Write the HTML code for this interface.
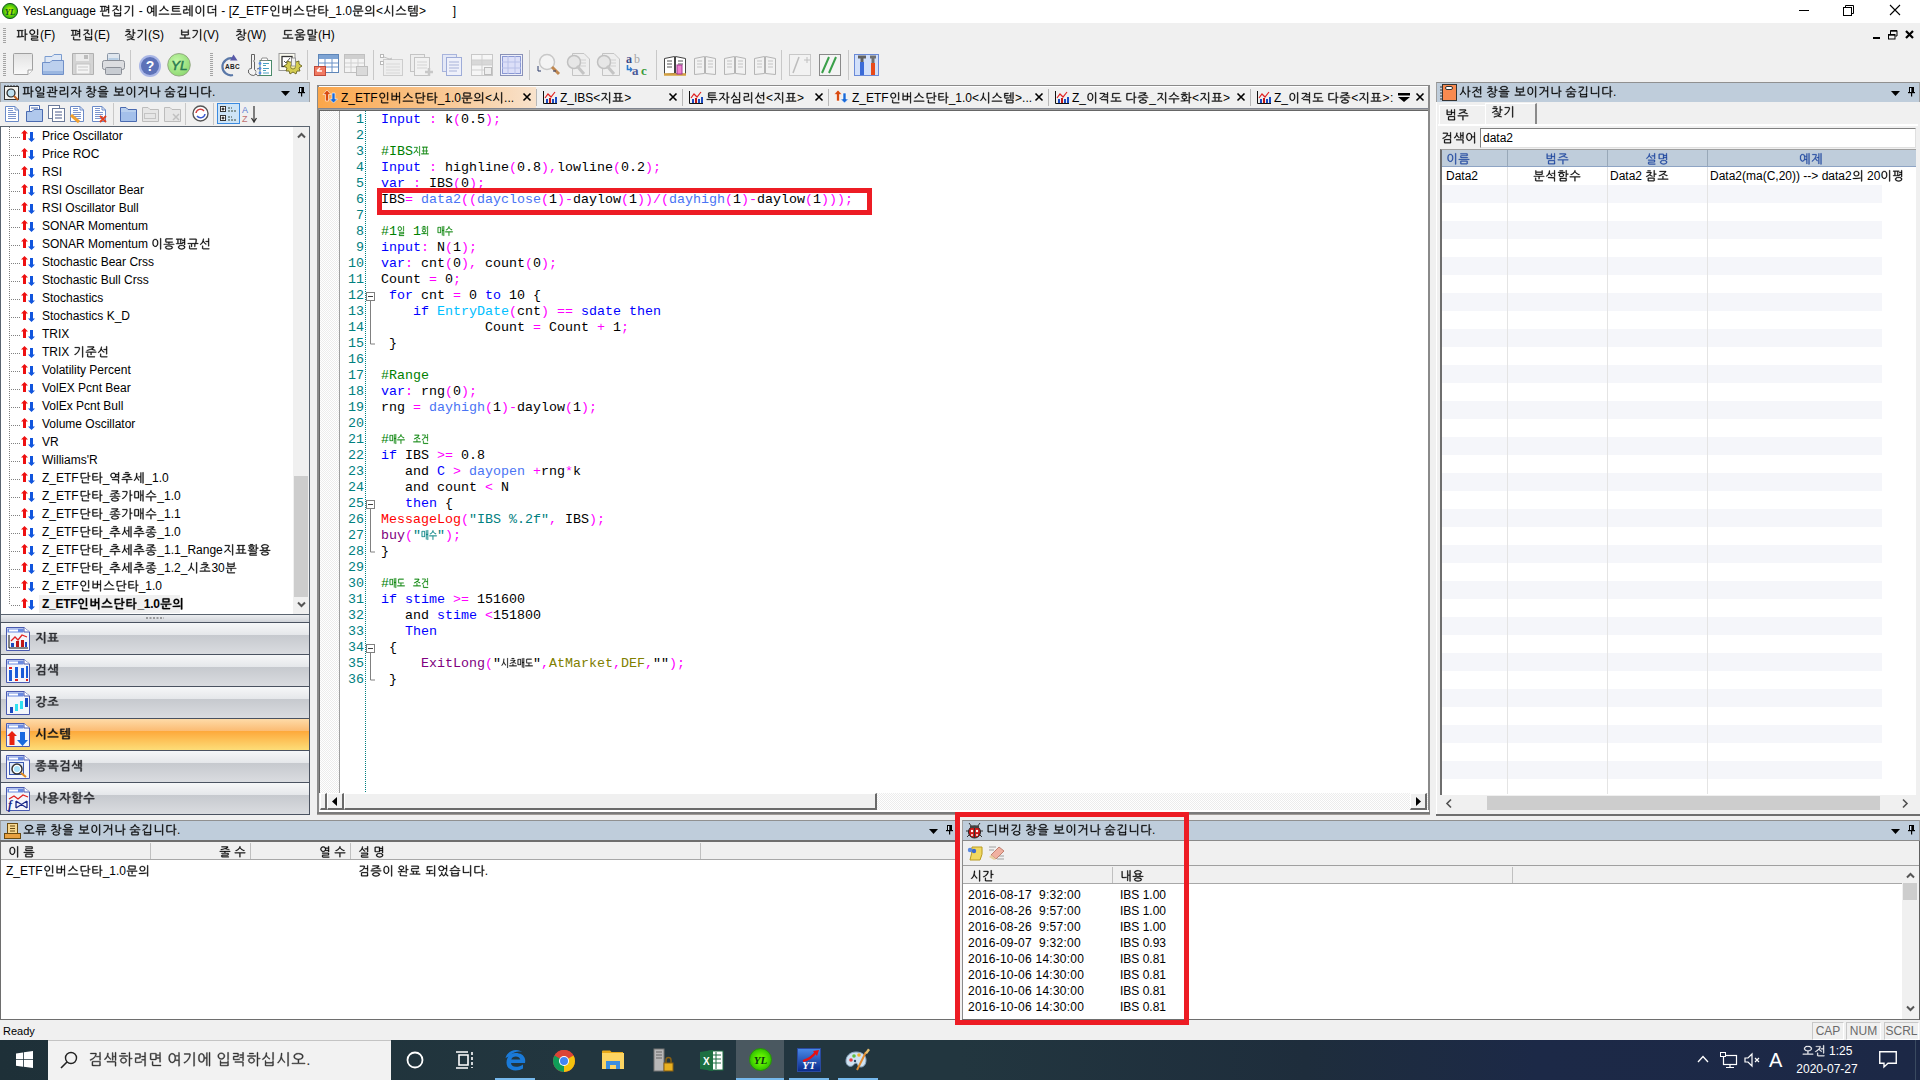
<!DOCTYPE html><html><head><meta charset="utf-8"><style>
*{margin:0;padding:0;box-sizing:border-box}
html,body{width:1920px;height:1080px;overflow:hidden;background:#f0f0f0;font-family:"Liberation Sans",sans-serif;font-size:12px;color:#000}
div{position:absolute}
.t{white-space:pre;line-height:14px}
.code{font-family:"Liberation Mono",monospace;font-size:13.33px;line-height:16px;white-space:pre}
svg{position:absolute;overflow:visible}
svg.h{position:static;display:inline-block;fill:currentColor;overflow:visible}
svg.h path{stroke:currentColor;stroke-width:2.5;stroke-linejoin:round}
.h12{width:12px;height:12px;vertical-align:-1.8px}
.h13{width:13px;height:13px;vertical-align:-1.95px}
.h15{width:15px;height:15px;vertical-align:-2.25px}
.h8{width:8px;height:10px;vertical-align:-1.1px}
</style></head><body>
<div style="position:absolute;left:0px;top:0px;width:1920px;height:23px;background:#fff"></div>
<svg style="left:2px;top:3px" width="16" height="16"><defs><radialGradient id="gyl" cx="0.5" cy="0.5" r="0.5"><stop offset="0.3" stop-color="#b0f000"/><stop offset="1" stop-color="#20b010"/></radialGradient></defs><circle cx="8" cy="8" r="7.6" fill="url(#gyl)" stroke="#1a5a1a" stroke-width="1"/><text x="8" y="11.5" font-size="8.5" font-weight="bold" font-style="italic" text-anchor="middle" fill="#0a5030" font-family="Liberation Serif">YL</text></svg>
<div class="t" style="left:23px;top:4px;font-size:12px">YesLanguage <svg class="h h12" viewBox="0 -85 100 100"><path d="M64-39l1 1 1 4-4 1-27 2-26 0-1-1 0-3 1-1 12 0 0-35-11 0-1-1 0-4 1-1 51 0 0 6-10 0 0 34zM77-66l0-16 0-1 5 0 1 1 1 1 0 64-1 1-1 0-5 0 0-1 0-27-16 0-1-1 0-4 1-1 16 0 0-10-16 0-1-2 0-4zM38-37l7 0 0-34-17 0 0 35zM87 7l-2 1-50 0-5-1-2-2-1-3 0-22 2-1 5 0 0 1 0 20 1 2 50 0 2 1z"/></svg><svg class="h h12" viewBox="0 -85 100 100"><path d="M34 9l-5-1-2-3 0-33 5 0 1 1 0 11 44 0 0-11 1-1 5 0 1 30-1 4-1 2-2 0-4 1zM55-71l-4 8-5 7 9 7 11 6 0 1-3 4-1 1-9-5-12-9-9 7-7 5-11 6-1 0-3-4 1-1 13-7 10-8 8-8 6-11-1-1-1 0-30 0-1-1 1-5 37 0 2 2 1 1zM33-10l0 11 2 2 39 0 2 0 0-1 1-12zM84-35l-1 1-1 0-5 0 0-1 0-46 0-1 1-1 5 0 1 2z"/></svg><svg class="h h12" viewBox="0 -85 100 100"><path d="M84 8l-1 1-1 1-5 0 0-2 0-89 0-1 1-1 5 0 1 2zM57-68l-1 9-3 8-3 8-5 8-5 7-7 7-12 9-5 2-1 0-3-4 0-1 9-5 7-5 6-6 7-10 4-7 3-7 2-12-1-2-1 0-33 0-1-1 1-5 36 0 4 2 1 2z"/></svg> - <svg class="h h12" viewBox="0 -85 100 100"><path d="M69 4l0 1-1 1-5 0 0-1-1-33-14 0-5 8-5 3-5 2-6 0-6-2-5-4-3-3-3-8-1-6 0-15 1-6 2-6 3-4 5-5 3-1 5-1 8 1 5 2 3 2 2 3 3 7 13 0 1-19 1-1 5 0zM44-46l0-6-2-7-2-5-3-3-4-3-3 0-4 0-4 3-2 3-3 5-1 13 0 7 2 6 2 6 2 3 4 3 4 0 3 0 4-3 3-3 2-5 2-7zM87 8l-1 1-1 1-4 0-1-2 0-89 1-1 1-1 4 0 1 2zM51-46l-1 12 12 0 0-21-12 0z"/></svg><svg class="h h12" viewBox="0 -85 100 100"><path d="M54-76l-2 5 1 1 5 10 7 8 7 5 7 4 8 3 0 2-2 4-1 0-6-2-12-7-9-8-8-11-5 9-10 10-10 7-7 3-2 0-2-3 0-2 13-7 8-7 4-5 4-5 2-6 3-10 5 0zM92-12l2 1 0 4-2 1-84 0-2-2 0-3 2-1z"/></svg><svg class="h h12" viewBox="0 -85 100 100"><path d="M82-32l-1 1-1 0-54 0-3 0-3-1-1-2 0-4 0-32 1-5 1-1 5-1 55 0 0 5-1 1-54 0 0 2 0 12 52 0 2 1 0 4-1 1-1 0-52 0 0 12 0 2 2 0 52 0 2 1zM92-12l2 1 0 4-2 1-84 0-2-2 0-3 2-1z"/></svg><svg class="h h12" viewBox="0 -85 100 100"><path d="M18-14l-5-1-2-3 0-26 1-2 5-2 20 0 0-19 0-1-1 0-24 0-1-1 0-5 1 0 26 0 3 0 2 2 1 3 0 20-1 5-1 1-4 1-20 1 0 20 2 1 8 0 24-4 1 2 1 3-2 2-13 2zM62-47l1-33 0-1 5 0 1 0 0 1 0 84 0 1-1 1-5 0-1-2 0-45-12 0-2-1 0-5 1 0zM87 8l-1 1-1 1-4 0-1-2 0-89 1-1 1-1 4 0 1 2z"/></svg><svg class="h h12" viewBox="0 -85 100 100"><path d="M60-44l-1 8-1 6-4 7-3 4-4 4-5 2-9 0-6-1-4-3-4-4-3-4-2-5-1-9 0-8 1-9 1-6 3-4 3-5 6-4 9-2 9 2 6 4 5 7 3 8zM53-45l-1-7-1-6-3-6-4-4-6-3-6 1-4 2-4 4-2 4-2 6 0 14 2 11 3 5 3 3 4 2 6 1 4-2 3-2 3-3 3-6 1-7zM84 8l-1 1-1 1-5 0 0-2 0-89 0-1 1-1 5 0 1 2z"/></svg><svg class="h h12" viewBox="0 -85 100 100"><path d="M68-22l-1 1-4 1-24 3-17 1-4-1-2-1-2-3 0-4 0-43 0-4 2-2 2-1 4 0 34 0 1 1 0 4 0 1-36 0 0 44 0 2 2 0 17 0 26-4 1 1zM77-50l0-32 0-1 5 0 1 1 1 1 0 89-1 1-1 1-5 0 0-2 0-52-27 0-1-2 0-4z"/></svg> - [Z_ETF<svg class="h h12" viewBox="0 -85 100 100"><path d="M84-17l-1 1-1 0-5 0 0-1 0-64 0-1 1-1 5 0 1 2zM86 7l-1 1-50 0-5-1-2-2-1-3 0-22 2-1 4 0 1 1 0 20 1 2 50 0 1 1zM59-55l0 5-2 5-2 4-3 3-7 5-5 1-5 1-9-2-4-2-3-3-5-7-2-5 0-5 0-5 2-5 2-4 3-3 3-3 4-2 9-2 9 2 8 5 3 3 2 4 1 5zM52-55l-1-7-4-6-5-3-7-1-6 1-5 3-4 6-1 7 1 7 3 6 6 3 6 1 7-1 5-3 4-6z"/></svg><svg class="h h12" viewBox="0 -85 100 100"><path d="M21-17l-6 0-1-2-1-2 1-56 5-1 1 2 0 23 30 0 0-23 1-1 4-1 2 2 0 26 20 0 0-32 1-1 5 1 0 91-6 1 0-2 0-52-20 0 0 23-1 2-2 2-5 0zM20-47l0 22 0 2 29 0 1-2 0-22z"/></svg><svg class="h h12" viewBox="0 -85 100 100"><path d="M54-76l-2 5 1 1 5 10 7 8 7 5 7 4 8 3 0 2-2 4-1 0-6-2-12-7-9-8-8-11-5 9-10 10-10 7-7 3-2 0-2-3 0-2 13-7 8-7 4-5 4-5 2-6 3-10 5 0zM92-12l2 1 0 4-2 1-84 0-2-2 0-3 2-1z"/></svg><svg class="h h12" viewBox="0 -85 100 100"><path d="M67-36l-1 1-3 1-19 2-23 1-5-2-1-2-1-5 0-30 0-5 2-1 3-1 37 0 1 5-1 1-35 0 0 32 0 1 2 0 12 0 16-1 14-2 1 1zM80-16l0 1-1 0-5 0-1-1 0-65 0-1 1-1 5 0 1 1 0 29 14 0 1 2 0 3-1 1-14 0zM84 7l-1 1-51 0-5-1-2-2-1-3 0-21 2-1 4 0 1 1 0 19 1 2 51 0 1 1z"/></svg><svg class="h h12" viewBox="0 -85 100 100"><path d="M54-42l-35 0 1 21 2 1 15-1 25-3 1 2 0 3 0 1-10 2-17 1-16 1-5-2-2-2-1-5 0-45 1-5 2-1 3-1 37 0 1 5-1 1-34 0-1 0-1 1 0 21 35-1 1 1 0 4zM80 8l0 1-1 1-5 0-1-2 0-89 0-1 1-1 5 0 1 1 0 37 14 0 1 1 0 4-1 1-14 0z"/></svg>_1.0<svg class="h h12" viewBox="0 -85 100 100"><path d="M20-73l1-3 1-2 4-2 51 1 2 1 1 3-1 25-1 2-4 1-51 0-2-2-1-2zM30-74l-2 1-1 1 0 16 1 3 42 0 3-1 0-17-1-2zM48-9l-1-2 0-20-40 0-1-1 0-4 1-1 85 0 2 1 0 4-1 1-39 0 0 21-1 1zM83 7l-1 1-55 0-4-1-3-1-1-4 0-23 1-1 5 1 1 0 0 21 1 2 55 0 1 1z"/></svg><svg class="h h12" viewBox="0 -85 100 100"><path d="M84 8l-1 1-1 1-5 0 0-2 0-89 0-1 1-1 5 0 1 2zM61-54l-1 5-1 4-2 4-3 3-8 5-9 1-10-1-7-5-5-7-1-4-1-5 1-5 1-5 2-4 3-3 7-4 10-2 9 2 8 4 2 3 3 4 1 5zM54-54l-2-8-3-5-6-3-6-1-7 1-5 3-4 6-1 7 1 7 4 5 5 3 7 1 6-1 6-3 3-5zM70-21l2 1 0 4-6 1-34 4-22 0-2 0-1-1 0-4 2-1 32-1z"/></svg>&lt;<svg class="h h12" viewBox="0 -85 100 100"><path d="M41-76l-1 13-2 11 2 4 2 7 6 9 7 8 6 6 0 1-4 4-4-3-10-12-8-13-3 8-5 8-9 11-4 4-1 0-3-3 0-2 8-9 5-7 4-6 2-8 3-12 2-20 1-1 5 0zM84 8l-1 1-1 1-5 0 0-2 0-89 0-1 1-1 5 0 1 2z"/></svg><svg class="h h12" viewBox="0 -85 100 100"><path d="M54-76l-2 5 1 1 5 10 7 8 7 5 7 4 8 3 0 2-2 4-1 0-6-2-12-7-9-8-8-11-5 9-10 10-10 7-7 3-2 0-2-3 0-2 13-7 8-7 4-5 4-5 2-6 3-10 5 0zM92-12l2 1 0 4-2 1-84 0-2-2 0-3 2-1z"/></svg><svg class="h h12" viewBox="0 -85 100 100"><path d="M26-14l1-3 1-3 4-1 52 0 2 2 1 3-1 21-1 2-4 2-51-1-2-1-1-3zM42-52l-24 0 0 14 2 1 12 0 20-3 1 1 0 5-21 3-13 0-5-1-2-2-1-5 0-31 1-5 2-2 3 0 29 0 0 5-1 1-26 0-1 1 0 12 25 0 1 1 0 3zM36-15l-2 1-1 1 0 14 2 2 43 0 2-1 0-15-1-2zM62-56l1-24 1-1 4 0 1 1 0 51-1 1-4 0-1 0-1-22-12 0-1-1 0-4 1-1zM87-28l-1 1-1 1-4 0-1-2 0-53 1-1 1-1 4 0 1 2z"/></svg>&gt;        ]</div>
<div style="position:absolute;left:1799px;top:10px;width:10px;height:1px;background:#000"></div>
<svg style="left:1843px;top:5px" width="12" height="12"><rect x="0.5" y="2.5" width="8" height="8" fill="none" stroke="#000"/><path d="M2.5 2.5V0.5H10.5V8.5H8.5" fill="none" stroke="#000"/></svg>
<svg style="left:1890px;top:5px" width="11" height="11"><path d="M0 0L10 10M10 0L0 10" stroke="#000" stroke-width="1.1"/></svg>
<div style="position:absolute;left:0px;top:23px;width:1920px;height:23px;background:#f0f0f0"></div>
<div class="t" style="left:16px;top:28px;"><svg class="h h12" viewBox="0 -85 100 100"><path d="M65-26l1 1 1 4-1 1-3 0-29 3-21 1-6-1 0-4 1-1 11 0 0-47-10 0-1-1 0-4 1-1 52 0 0 5-8 1 0 45zM37-23l9 0 0-46-20 0 0 47zM80 8l0 1-1 1-5 0-1-2 0-89 0-1 1-1 5 0 1 1 0 37 14 0 1 1 0 4-1 1-14 0z"/></svg><svg class="h h12" viewBox="0 -85 100 100"><path d="M84-36l-1 1-1 1-5 0 0-2 0-45 0-1 1-1 5 0 1 2zM59-59l-1 5-1 4-5 7-8 4-9 2-9-1-7-5-5-7-1-4-1-5 1-4 1-5 2-3 3-4 7-4 9-1 9 1 7 4 6 7 1 5zM52-59l-2-6-3-5-6-3-6-1-6 1-5 3-4 5-1 6 1 7 4 5 5 3 6 1 6-1 6-3 3-5zM86 9l-2 1-50 0-5-1-2-2-1-5 1-9 1-4 3-1 3 0 42 0 1-2 0-7-1-1-2-1-47 0-1-1 0-4 2 0 48 0 5 1 2 2 1 4-1 9-1 4-3 1-3 0-42 1-1 1 0 7 1 2 2 0 48 0 2 1z"/></svg>(F)</div>
<div class="t" style="left:70px;top:28px;"><svg class="h h12" viewBox="0 -85 100 100"><path d="M64-39l1 1 1 4-4 1-27 2-26 0-1-1 0-3 1-1 12 0 0-35-11 0-1-1 0-4 1-1 51 0 0 6-10 0 0 34zM77-66l0-16 0-1 5 0 1 1 1 1 0 64-1 1-1 0-5 0 0-1 0-27-16 0-1-1 0-4 1-1 16 0 0-10-16 0-1-2 0-4zM38-37l7 0 0-34-17 0 0 35zM87 7l-2 1-50 0-5-1-2-2-1-3 0-22 2-1 5 0 0 1 0 20 1 2 50 0 2 1z"/></svg><svg class="h h12" viewBox="0 -85 100 100"><path d="M34 9l-5-1-2-3 0-33 5 0 1 1 0 11 44 0 0-11 1-1 5 0 1 30-1 4-1 2-2 0-4 1zM55-71l-4 8-5 7 9 7 11 6 0 1-3 4-1 1-9-5-12-9-9 7-7 5-11 6-1 0-3-4 1-1 13-7 10-8 8-8 6-11-1-1-1 0-30 0-1-1 1-5 37 0 2 2 1 1zM33-10l0 11 2 2 39 0 2 0 0-1 1-12zM84-35l-1 1-1 0-5 0 0-1 0-46 0-1 1-1 5 0 1 2z"/></svg>(E)</div>
<div class="t" style="left:124px;top:28px;"><svg class="h h12" viewBox="0 -85 100 100"><path d="M76-12l-5 4-7 4 24 7 1 1-2 4-13-3-18-5-14 5-17 5-1-1-1-3 0-2 21-6 11-4 9-5 6-4-2-1-40 0-1-1 0-4 1 0 43-1 6 1 2 1 1 2zM62-31l-2 1-6-3-8-4-7-5-15 10-12 5-2-4 0-1 13-7 9-6 8-7 7-9-1-1-2 0-30 0-1-2 0-4 34 0 6 1 2 2 0 1-1 4-5 7-5 6 9 7 10 4 0 2zM80-28l0 1-1 0-5 0-1-1 0-53 0-1 1-1 5 0 1 1 0 27 14 0 1 1 0 4-1 1-14 0zM45-81l1 0 1 1 0 4-1 1-23 0-2-1 0-4 1-1z"/></svg><svg class="h h12" viewBox="0 -85 100 100"><path d="M84 8l-1 1-1 1-5 0 0-2 0-89 0-1 1-1 5 0 1 2zM57-68l-1 9-3 8-3 8-5 8-5 7-7 7-12 9-5 2-1 0-3-4 0-1 9-5 7-5 6-6 7-10 4-7 3-7 2-12-1-2-1 0-33 0-1-1 1-5 36 0 4 2 1 2z"/></svg>(S)</div>
<div class="t" style="left:179px;top:28px;"><svg class="h h12" viewBox="0 -85 100 100"><path d="M53-33l0 21 40 0 1 1 0 4-1 1-85 0-2-1 0-4 1-1 39 0 0-21-23 0-2-1-2-2 0-41 1-1 4-1 2 1 0 16 48 0 0-16 1-1 5 1 1 39-1 4-2 1-3 1zM26-56l0 16 1 1 44 0 2 0 1-1 0-16z"/></svg><svg class="h h12" viewBox="0 -85 100 100"><path d="M84 8l-1 1-1 1-5 0 0-2 0-89 0-1 1-1 5 0 1 2zM57-68l-1 9-3 8-3 8-5 8-5 7-7 7-12 9-5 2-1 0-3-4 0-1 9-5 7-5 6-6 7-10 4-7 3-7 2-12-1-2-1 0-33 0-1-1 1-5 36 0 4 2 1 2z"/></svg>(V)</div>
<div class="t" style="left:235px;top:28px;"><svg class="h h12" viewBox="0 -85 100 100"><path d="M80-6l0 3-2 3-6 6-9 3-12 1-11-1-10-3-5-6-2-3-1-3 1-4 2-3 5-5 10-3 11-1 12 1 9 3 6 5 2 3zM73-6l0-2-1-2-5-4-7-2-9-1-9 1-6 2-5 4-1 4 1 4 5 4 6 2 9 0 9 0 7-2 5-4 1-2zM62-31l-2 1-6-3-8-4-7-5-15 10-12 5-2-4 0-1 13-7 9-6 8-7 7-9-1-1-2 0-30 0-1-2 0-4 34 0 6 1 2 2 0 1-1 4-5 7-5 6 9 7 10 4 0 2zM80-26l0 1-1 1-5 0-1-2 0-55 0-1 1-1 5 0 1 1 0 28 14 0 1 1 0 4-1 1-14 0zM45-81l1 0 1 1 0 4-1 1-23 0-2-1 0-4 1-1z"/></svg>(W)</div>
<div class="t" style="left:282px;top:28px;"><svg class="h h12" viewBox="0 -85 100 100"><path d="M82-35l-1 1-1 0-27 0 0 22 40 0 1 1 0 4-1 1-85 0-2-1 0-4 1-1 39 0 0-22-22 0-4-1-1-3 0-33 1-3 1-1 5-1 55 0 0 5-1 1-54 0 0 3 0 24 0 2 2 1 52 0 2 1z"/></svg><svg class="h h12" viewBox="0 -85 100 100"><path d="M20-14l1-5 3-2 22 0 0-12-39 0-1-2 0-3 1-1 85 0 2 1 0 4-1 1-40 0 0 12 22 0 3 1 1 1 1 4 0 19-2 3-2 1-49 1-4-1-2-1-1-3zM50-48l-16-2-7-2-3-3-3-3-2-5 1-7 2-3 3-3 7-3 8-2 8-1 10 1 8 1 7 3 3 2 3 4 2 4-1 6-2 4-3 3-7 3-8 2zM50-76l-11 1-9 4-2 2-2 2 0 4 2 2 2 2 5 3 11 2 15-1 9-4 2-2 2-2-1-5-2-2-2-2-6-2zM29-15l-2 0 0 2 0 14 1 2 43 0 2-1 0-15-1-2z"/></svg><svg class="h h12" viewBox="0 -85 100 100"><path d="M14-72l0-4 1-2 4-1 31 0 3 0 2 1 1 2 0 3 0 29 0 3-1 2-3 1-3 1-29 0-4-1-2-2 0-3zM82 9l-1 1-51 0-5-1-1-2-1-5 0-9 2-4 2-1 4 0 41 0 1-2 0-7 0-1-2-1-47 0-1-1 0-4 1 0 48 0 6 1 1 2 1 4 0 9-2 4-2 1-4 0-41 1-1 1 0 7 0 2 2 0 49 0 1 1zM23-73l-2 0 0 2-1 25 1 2 2 1 24 0 2-1 0-2 0-24 0-3-2 0zM80-35l0 1-1 0-5 0-1-1 0-46 0-1 1-1 5 0 1 1 0 21 14 0 1 1 0 4-1 1-14 0z"/></svg>(H)</div>
<div style="position:absolute;left:1873px;top:37px;width:7px;height:2px;background:#000"></div>
<svg style="left:1888px;top:30px" width="10" height="10"><rect x="0.5" y="4.5" width="6.5" height="4.5" fill="none" stroke="#000" stroke-width="1"/><path d="M0.5 5.2H7M2.5 4V0.5H9V6H7.5" fill="none" stroke="#000"/><path d="M2.5 1.2H9" stroke="#000"/></svg>
<svg style="left:1905px;top:30px" width="9" height="9"><path d="M1 1L8 8M8 1L1 8" stroke="#000" stroke-width="2.2"/></svg>
<svg style="left:3px;top:28px" width="3" height="16"><path d="M0 0.5H3M0 2.5H3M0 4.5H3M0 6.5H3M0 8.5H3M0 10.5H3M0 12.5H3M0 14.5H3" stroke="#a4a4a4"/></svg>
<svg style="left:3px;top:53px" width="3" height="24"><path d="M0 0.5H3M0 2.5H3M0 4.5H3M0 6.5H3M0 8.5H3M0 10.5H3M0 12.5H3M0 14.5H3M0 16.5H3M0 18.5H3M0 20.5H3M0 22.5H3" stroke="#a4a4a4"/></svg>
<svg style="left:210px;top:53px" width="3" height="24"><path d="M0 0.5H3M0 2.5H3M0 4.5H3M0 6.5H3M0 8.5H3M0 10.5H3M0 12.5H3M0 14.5H3M0 16.5H3M0 18.5H3M0 20.5H3M0 22.5H3" stroke="#a4a4a4"/></svg>
<div style="position:absolute;left:130px;top:50px;width:1px;height:30px;background:#c8c8c8"></div>
<div style="position:absolute;left:307px;top:50px;width:1px;height:30px;background:#c8c8c8"></div>
<div style="position:absolute;left:373px;top:50px;width:1px;height:30px;background:#c8c8c8"></div>
<div style="position:absolute;left:529px;top:50px;width:1px;height:30px;background:#c8c8c8"></div>
<div style="position:absolute;left:656px;top:50px;width:1px;height:30px;background:#c8c8c8"></div>
<div style="position:absolute;left:781px;top:50px;width:1px;height:30px;background:#c8c8c8"></div>
<div style="position:absolute;left:848px;top:50px;width:1px;height:30px;background:#c8c8c8"></div>
<svg style="left:13px;top:53px" width="22" height="24" viewBox="0 0 22 24"><defs><linearGradient id="gnd" x1="0" y1="0" x2="0" y2="1"><stop offset="0" stop-color="#e2e2e2"/><stop offset="1" stop-color="#fafafa"/></linearGradient></defs><path d="M0.5 1.5Q0.5 0.5 1.5 0.5H18.5Q19.5 0.5 19.5 1.5V17L15 21.5H1.5Q0.5 21.5 0.5 20.5Z" fill="url(#gnd)" stroke="#a0a0a0"/><path d="M15 21.5V17H19.5" fill="#fff" stroke="#a0a0a0"/></svg>
<svg style="left:42px;top:53px" width="23" height="24" viewBox="0 0 23 24"><path d="M3 10V3.5H10L12 1.5H19.5V10" fill="#dfe8f5" stroke="#7a9cd0"/><path d="M0.5 21.5V9.5H8L10 7.5H21.5V21.5Z" fill="#bcd0ee" stroke="#7090c8"/><rect x="1" y="18" width="20" height="3" fill="#9ab6e0"/></svg>
<svg style="left:72px;top:53px" width="22" height="24" viewBox="0 0 22 24"><path d="M0.5 0.5H21.5V21.5H0.5Z" fill="#d4d4d4" stroke="#b0b0b0"/><rect x="4" y="1" width="13" height="7" fill="#ececec"/><rect x="12" y="2" width="4" height="4" fill="#bdbdbd"/><rect x="4" y="11" width="14" height="10" fill="#f4f4f4" stroke="#c4c4c4"/><path d="M6 14H16M6 17H16" stroke="#c8c8c8"/></svg>
<svg style="left:102px;top:53px" width="23" height="24" viewBox="0 0 23 24"><rect x="5.5" y="0.5" width="12" height="8" rx="1" fill="#dfe6ee" stroke="#8a96a6"/><rect x="6.5" y="5" width="10" height="3" fill="#b6cde4"/><rect x="0.5" y="7.5" width="22" height="9" rx="2" fill="#dcdde0" stroke="#8a8e96"/><rect x="3.5" y="14.5" width="16" height="7" rx="1" fill="#c8ccd2" stroke="#8a8e96"/></svg>
<div style="position:absolute;left:130px;top:50px;width:1px;height:30px;background:#c8c8c8"></div>
<svg style="left:138px;top:54px" width="24" height="24" viewBox="0 0 24 24"><circle cx="12" cy="12" r="11" fill="#a9b6e6"/><circle cx="12" cy="12" r="9" fill="#5d72b8"/><text x="12" y="17" font-size="14" font-weight="bold" text-anchor="middle" fill="#fff" font-family="Liberation Sans">?</text></svg>
<svg style="left:167px;top:53px" width="25" height="25" viewBox="0 0 25 25"><defs><radialGradient id="gyl3" cx="0.4" cy="0.35" r="0.7"><stop offset="0" stop-color="#c4f8a8"/><stop offset="1" stop-color="#8cd870"/></radialGradient></defs><circle cx="12" cy="11.8" r="11.3" fill="url(#gyl3)" stroke="#8a9a78" stroke-width="0.8"/><text x="12.3" y="17" font-size="13.5" font-style="italic" text-anchor="middle" fill="#2a7a50" stroke="#2a7a50" stroke-width="0.5" font-family="Liberation Sans">YL</text></svg>
<svg style="left:220px;top:53px" width="23" height="24" viewBox="0 0 23 24"><path d="M13 5.5A8.5 8.5 0 1 0 13 22" fill="none" stroke="#5a78a8" stroke-width="2.2"/><path d="M13.5 1.5L17.5 7.5H10Z" fill="#5a5aa8"/><text x="5" y="16" font-size="6.5" font-weight="bold" fill="#222" font-family="Liberation Sans" letter-spacing="0.3">ABC</text></svg>
<svg style="left:247px;top:53px" width="26" height="24" viewBox="0 0 26 24"><path d="M4.5 1.5H7.5V7L6.5 8L7.5 9V16.5Q10 18 9 21Q7 23.5 4 22Q0.5 20.5 1.5 17Q2.5 15.5 4.5 15.5Z" fill="#f4f4f4" stroke="#555" stroke-width="0.9"/><path d="M10 16Q13 14 15 17Q16 21 13 22.5Q10 23.5 9 21" fill="#f0f0f0" stroke="#555" stroke-width="0.9"/><rect x="13" y="7.5" width="11.5" height="15" fill="#fff" stroke="#4a8a6a"/><path d="M15 5H20L21 7.5H14Z" fill="#fff" stroke="#777" stroke-width="0.8"/><path d="M16 10.5H22M16 12.5H19M16 15.5H22M16 17.5H19M16 20H22" stroke="#4aa0c0"/><circle cx="13" cy="10.5" r="1.4" fill="#5a8ae8"/><circle cx="13" cy="15.5" r="1.4" fill="#5a8ae8"/><circle cx="13" cy="20" r="1.4" fill="#5a8ae8"/></svg>
<svg style="left:278px;top:53px" width="25" height="24" viewBox="0 0 25 24"><rect x="1" y="0.5" width="16" height="17" fill="#fafaf0" stroke="#999"/><rect x="4" y="3.5" width="10" height="10" fill="#fff" stroke="#333" stroke-width="1.3"/><path d="M6 8L8 10L12 5" stroke="#555" fill="none"/><path d="M14 9L16 6L18 9L21 8L21 11L24 13L21 15L22 18L19 18L18 21L15 19L12 21L11 18L8 18L9 15L6 13L9 11L9 8L12 9Z" fill="#d4cc50" stroke="#6a6420" stroke-width="0.9"/><circle cx="15" cy="13.5" r="2.5" fill="#f8f0a0" stroke="#8a8430"/><rect x="13.5" y="5" width="4" height="8" fill="#f0f0f0" stroke="#888" stroke-width="0.8"/></svg>
<svg style="left:314px;top:54px" width="25" height="23" viewBox="0 0 25 23"><rect x="4.5" y="0.5" width="20" height="18" fill="#fff" stroke="#5e86b8"/><rect x="5" y="1" width="19" height="4" fill="#7ea4d4"/><path d="M5 9H24M5 13H24M11 5V18M18 5V18" stroke="#6a92c8"/><rect x="0.5" y="12.5" width="11" height="9" fill="#f07a62" stroke="#c04a3a"/><path d="M3 17L6 14M3 17H8" stroke="#fff" stroke-width="1.5"/></svg>
<svg style="left:344px;top:54px" width="25" height="23" viewBox="0 0 25 23"><rect x="0.5" y="0.5" width="20" height="18" fill="#f4f4f4" stroke="#c0c0c0"/><rect x="1" y="1" width="19" height="4" fill="#cfcfcf"/><path d="M1 9H20M1 13H20M7 5V18M14 5V18" stroke="#d0d0d0"/><rect x="12.5" y="12.5" width="11" height="9" fill="#dadada" stroke="#bdbdbd"/></svg>
<div style="position:absolute;left:307px;top:50px;width:1px;height:30px;background:#c8c8c8"></div>
<div style="position:absolute;left:373px;top:50px;width:1px;height:30px;background:#c8c8c8"></div>
<svg style="left:380px;top:54px" width="24" height="23" viewBox="0 0 24 23"><rect x="0.5" y="0.5" width="3" height="3" fill="#fff" stroke="#b8b8b8"/><rect x="0.5" y="7.5" width="3" height="3" fill="#fff" stroke="#b8b8b8"/><path d="M4 3L12 6M4 8L12 4" stroke="#c0c0c0"/><rect x="3.5" y="5.5" width="19" height="16" fill="#eee" stroke="#aaa" stroke-dasharray="1 1"/><path d="M6 10H20M6 13H20M6 16H20M6 19H20" stroke="#d8d8d8"/></svg>
<svg style="left:410px;top:54px" width="24" height="23" viewBox="0 0 24 23"><rect x="0.5" y="0.5" width="14" height="17" fill="#eee" stroke="#c4c4c4"/><rect x="4.5" y="3.5" width="15" height="18" fill="#f2f2f2" stroke="#c4c4c4"/><path d="M7 8H17M7 11H17M7 14H17" stroke="#d4d4d4"/><path d="M19 14V22M15 18H23" stroke="#c8c8c8" stroke-width="2.5"/></svg>
<svg style="left:442px;top:54px" width="21" height="23" viewBox="0 0 21 23"><rect x="0.5" y="0.5" width="14" height="17" fill="#e4e8f6" stroke="#a8b4dc"/><rect x="4.5" y="3.5" width="15" height="18" fill="#eef0fa" stroke="#9eacd8"/><path d="M7 8H17M7 11H17M7 14H17M7 17H15" stroke="#a8b2d8"/></svg>
<svg style="left:471px;top:54px" width="23" height="23" viewBox="0 0 23 23"><rect x="0.5" y="0.5" width="21" height="21" fill="#f6f6f6" stroke="#c8c8c8"/><rect x="1" y="6" width="20" height="5" fill="#d8d8d8"/><path d="M1 6H21M1 11H21M1 16H21M11 1V21" stroke="#cfcfcf"/><rect x="13.5" y="13.5" width="7" height="7" fill="#eee" stroke="#bbb"/></svg>
<svg style="left:500px;top:54px" width="24" height="23" viewBox="0 0 24 23"><rect x="0.5" y="0.5" width="22" height="21" fill="#eef0fa" stroke="#8a92b8"/><rect x="2.5" y="2.5" width="18" height="17" fill="#dcdff8" stroke="#8a98d4"/><path d="M2 8H21M2 14H21M8 2V20M15 2V20" stroke="#b8c0e8"/></svg>
<div style="position:absolute;left:529px;top:50px;width:1px;height:30px;background:#c8c8c8"></div>
<svg style="left:537px;top:53px" width="24" height="24" viewBox="0 0 24 24"><circle cx="10" cy="9" r="7.5" fill="#f4f4f4" stroke="#c8c8c8" stroke-width="1.5"/><path d="M15 14L22 21" stroke="#c08850" stroke-width="3"/><path d="M1 13V18H4M16 18H19" stroke="#2a3a6a" fill="none"/></svg>
<svg style="left:566px;top:53px" width="25" height="24" viewBox="0 0 25 24"><path d="M6.5 0.5H18L23.5 6V22.5H6.5Z" fill="#eee" stroke="#c4c4c4"/><path d="M9 7H20M9 10H20M9 13H20" stroke="#d0d0d0"/><circle cx="8" cy="9" r="6.5" fill="#e6e6e6" stroke="#c0c0c0" stroke-width="1.5"/><path d="M11 13L18 21" stroke="#c4c4c4" stroke-width="3"/></svg>
<svg style="left:596px;top:53px" width="25" height="24" viewBox="0 0 25 24"><path d="M6.5 0.5H18L23.5 6V22.5H6.5Z" fill="#eee" stroke="#c4c4c4"/><path d="M9 7H20M9 10H20M9 13H20" stroke="#d0d0d0"/><circle cx="8" cy="9" r="6.5" fill="#e6e6e6" stroke="#c0c0c0" stroke-width="1.5"/><path d="M11 13L18 21" stroke="#c4c4c4" stroke-width="3"/></svg>
<svg style="left:626px;top:53px" width="25" height="24" viewBox="0 0 25 24"><text x="0" y="10" font-size="12" font-weight="bold" font-family="Liberation Serif" fill="#3a4a8a">a</text><text x="8" y="9.5" font-size="12" font-family="Liberation Serif" fill="#a8a8a8">b</text><text x="6" y="22" font-size="13" font-weight="bold" font-family="Liberation Serif" fill="#4a5a98">a</text><text x="15" y="22" font-size="13" font-weight="bold" font-family="Liberation Serif" fill="#3a9a3a">c</text><path d="M1.5 12V16.5H5" stroke="#2a7ad0" fill="none" stroke-width="1.6"/><path d="M4 14.5L6 16.5L4 18.5" stroke="#2a7ad0" fill="none" stroke-width="1.2"/></svg>
<div style="position:absolute;left:656px;top:50px;width:1px;height:30px;background:#c8c8c8"></div>
<svg style="left:664px;top:55px" width="22" height="21" viewBox="0 0 22 21"><path d="M0.5 3.5L10.5 1.5L10.5 18.5L0.5 19.5Z" fill="#fff" stroke="#444"/><path d="M21.5 3.5L11.5 1.5L11.5 18.5L21.5 19.5Z" fill="#fff" stroke="#444"/><path d="M0 19.5H22" stroke="#d4a040" stroke-width="2.5"/><path d="M3 6H8M3 9H8M3 12H8M14 6H19M14 9H19" stroke="#555"/><rect x="13" y="10" width="5" height="9" fill="#f080d0" stroke="#a03a90"/></svg>
<svg style="left:694px;top:55px" width="22" height="21" viewBox="0 0 22 21"><path d="M0.5 3.5L10.5 1.5L10.5 18.5L0.5 19.5Z" fill="#f2f2f2" stroke="#b4b4b4"/><path d="M21.5 3.5L11.5 1.5L11.5 18.5L21.5 19.5Z" fill="#f2f2f2" stroke="#b4b4b4"/><path d="M3 6H8M3 9H8M3 12H8M14 6H19M14 9H19M14 12H19" stroke="#c4c4c4"/></svg>
<svg style="left:724px;top:55px" width="22" height="21" viewBox="0 0 22 21"><path d="M0.5 3.5L10.5 1.5L10.5 18.5L0.5 19.5Z" fill="#f2f2f2" stroke="#b4b4b4"/><path d="M21.5 3.5L11.5 1.5L11.5 18.5L21.5 19.5Z" fill="#f2f2f2" stroke="#b4b4b4"/><path d="M3 6H8M3 9H8M3 12H8M14 6H19M14 9H19M14 12H19" stroke="#c4c4c4"/></svg>
<svg style="left:754px;top:55px" width="22" height="21" viewBox="0 0 22 21"><path d="M0.5 3.5L10.5 1.5L10.5 18.5L0.5 19.5Z" fill="#f2f2f2" stroke="#b4b4b4"/><path d="M21.5 3.5L11.5 1.5L11.5 18.5L21.5 19.5Z" fill="#f2f2f2" stroke="#b4b4b4"/><path d="M3 6H8M3 9H8M3 12H8M14 6H19M14 9H19M14 12H19" stroke="#c4c4c4"/></svg>
<div style="position:absolute;left:781px;top:50px;width:1px;height:30px;background:#c8c8c8"></div>
<svg style="left:789px;top:54px" width="22" height="22" viewBox="0 0 22 22"><rect x="0.5" y="0.5" width="21" height="21" fill="#f2f2f2" stroke="#c8c8c8"/><path d="M4 19L10 3" stroke="#bdbdbd" stroke-width="1.5"/><path d="M15 6H21M18 3V9" stroke="#c0c0c0"/></svg>
<svg style="left:819px;top:54px" width="22" height="22" viewBox="0 0 22 22"><rect x="0.5" y="0.5" width="21" height="21" fill="#f4f4f4" stroke="#8a8a8a"/><path d="M3 19L10 3M10 19L17 3" stroke="#3aa04a" stroke-width="2"/></svg>
<div style="position:absolute;left:848px;top:50px;width:1px;height:30px;background:#c8c8c8"></div>
<svg style="left:854px;top:54px" width="25" height="22" viewBox="0 0 25 22"><rect x="0.5" y="0.5" width="24" height="21" fill="#d2e0fa" stroke="#6a8ad8"/><path d="M4 3H12M8 3V21" stroke="#606060" stroke-width="3"/><rect x="6" y="8" width="4" height="13" fill="#3a6ad8"/><path d="M16 3H22M19 3V21" stroke="#707070" stroke-width="3"/><rect x="17" y="9" width="4" height="12" fill="#e84a1a"/></svg>
<div style="position:absolute;left:0px;top:82px;width:310px;height:20px;background:#bfcddb;border-top:1px solid #909090;border-right:1px solid #a0a0a0;border-left:1px solid #a0a0a0"></div>
<svg style="left:3px;top:84px" width="17" height="17"><rect x="1.5" y="2.5" width="14" height="13" fill="#f4f4f0" stroke="#333"/><path d="M2 1V3M5 1V3M8 1V3M11 1V3M14 1V3" stroke="#333"/><circle cx="8" cy="9" r="4" fill="#bfe0f0" stroke="#222" stroke-width="1.2"/><path d="M11 12L15 16" stroke="#c06020" stroke-width="2"/></svg>
<div class="t" style="left:22px;top:85px;font-size:12px"><svg class="h h12" viewBox="0 -85 100 100"><path d="M65-26l1 1 1 4-1 1-3 0-29 3-21 1-6-1 0-4 1-1 11 0 0-47-10 0-1-1 0-4 1-1 52 0 0 5-8 1 0 45zM37-23l9 0 0-46-20 0 0 47zM80 8l0 1-1 1-5 0-1-2 0-89 0-1 1-1 5 0 1 1 0 37 14 0 1 1 0 4-1 1-14 0z"/></svg><svg class="h h12" viewBox="0 -85 100 100"><path d="M84-36l-1 1-1 1-5 0 0-2 0-45 0-1 1-1 5 0 1 2zM59-59l-1 5-1 4-5 7-8 4-9 2-9-1-7-5-5-7-1-4-1-5 1-4 1-5 2-3 3-4 7-4 9-1 9 1 7 4 6 7 1 5zM52-59l-2-6-3-5-6-3-6-1-6 1-5 3-4 5-1 6 1 7 4 5 5 3 6 1 6-1 6-3 3-5zM86 9l-2 1-50 0-5-1-2-2-1-5 1-9 1-4 3-1 3 0 42 0 1-2 0-7-1-1-2-1-47 0-1-1 0-4 2 0 48 0 5 1 2 2 1 4-1 9-1 4-3 1-3 0-42 1-1 1 0 7 1 2 2 0 48 0 2 1z"/></svg><svg class="h h12" viewBox="0 -85 100 100"><path d="M80-15l0 1-1 1-5 0-1-2 0-66 0-1 1-1 5 0 1 1 0 32 14 0 1 1 0 4-1 1-14 0zM68-35l2 0 0 5-5 1-35 1-21 0-2-1 0-4 1-1 22 0 0-20 0-1 1 0 5 0 1 0 0 21zM84 7l-1 1-56-1-3-1-1-4 0-20 1-1 5 0 1 1 0 18 1 2 52 0 1 1zM14-75l2-1 36 0 5 1 2 3 1 9-2 12-2 7-5 0-1-1 3-14 0-9-1-2-37 0-1-1z"/></svg><svg class="h h12" viewBox="0 -85 100 100"><path d="M84 8l-1 1-1 1-5 0 0-2 0-89 0-1 1-1 5 0 1 2zM22-13l-5-1-2-3-1-24 1-4 2-2 3-1 29 0 1-2 0-17-1-2-1 0-32 0-1-1 0-4 1-1 33 0 5 1 2 1 1 4 0 20-1 5-2 1-3 1-29 1-1 2 0 19 2 1 18 0 11-1 16-3 1 1 1 4-7 2-15 2-15 1z"/></svg><svg class="h h12" viewBox="0 -85 100 100"><path d="M60-18l-1 1-7-6-14-15-5 6-9 9-12 9-2 0-2-4 0-1 15-12 10-11 8-12 3-6 2-8 0-1-2 0-31 0-1-1 1-5 34 0 4 0 2 2 1 4-3 8-2 6-7 12 10 12 11 9 0 1zM80 8l0 1-1 1-5 0-1-2 0-89 0-1 1-1 5 0 1 1 0 37 14 0 1 1 0 4-1 1-14 0z"/></svg> <svg class="h h12" viewBox="0 -85 100 100"><path d="M80-6l0 3-2 3-6 6-9 3-12 1-11-1-10-3-5-6-2-3-1-3 1-4 2-3 5-5 10-3 11-1 12 1 9 3 6 5 2 3zM73-6l0-2-1-2-5-4-7-2-9-1-9 1-6 2-5 4-1 4 1 4 5 4 6 2 9 0 9 0 7-2 5-4 1-2zM62-31l-2 1-6-3-8-4-7-5-15 10-12 5-2-4 0-1 13-7 9-6 8-7 7-9-1-1-2 0-30 0-1-2 0-4 34 0 6 1 2 2 0 1-1 4-5 7-5 6 9 7 10 4 0 2zM80-26l0 1-1 1-5 0-1-2 0-55 0-1 1-1 5 0 1 1 0 28 14 0 1 1 0 4-1 1-14 0zM45-81l1 0 1 1 0 4-1 1-23 0-2-1 0-4 1-1z"/></svg><svg class="h h12" viewBox="0 -85 100 100"><path d="M50-49l-10-1-8-2-6-3-4-3-2-4-1-7 2-4 3-4 4-2 7-3 7-1 10-1 8 1 8 2 6 3 4 3 2 4 0 7-1 4-3 4-4 2-7 3zM50-78l-13 2-5 2-3 2-2 2 0 5 1 3 2 2 9 4 14 0 12-1 5-3 2-2 1-3 0-3-1-3-3-2-3-2-5-1zM92-43l2 1 0 4-2 1-84 0-2-1 0-4 2-1zM82 8l-1 1-53 0-6-1-2-3 0-11 1-5 2-1 5-1 44 0 1-2 0-7 0-1-2 0-50 0-1-1 0-4 1-1 51 0 6 1 2 4 0 10-1 4-2 2-5 1-44 0-1 1 0 8 0 1 2 0 52 0 1 1z"/></svg> <svg class="h h12" viewBox="0 -85 100 100"><path d="M53-33l0 21 40 0 1 1 0 4-1 1-85 0-2-1 0-4 1-1 39 0 0-21-23 0-2-1-2-2 0-41 1-1 4-1 2 1 0 16 48 0 0-16 1-1 5 1 1 39-1 4-2 1-3 1zM26-56l0 16 1 1 44 0 2 0 1-1 0-16z"/></svg><svg class="h h12" viewBox="0 -85 100 100"><path d="M60-44l-1 8-1 6-4 7-3 4-4 4-5 2-9 0-6-1-4-3-4-4-3-4-2-5-1-9 0-8 1-9 1-6 3-4 3-5 6-4 9-2 9 2 6 4 5 7 3 8zM53-45l-1-7-1-6-3-6-4-4-6-3-6 1-4 2-4 4-2 4-2 6 0 14 2 11 3 5 3 3 4 2 6 1 4-2 3-2 3-3 3-6 1-7zM84 8l-1 1-1 1-5 0 0-2 0-89 0-1 1-1 5 0 1 2z"/></svg><svg class="h h12" viewBox="0 -85 100 100"><path d="M77-47l0-35 0-1 5 0 1 1 1 1 0 89-1 1-1 1-5 0 0-2 0-49-21 0-1-1 0-3 1-2zM56-68l-1 9-2 8-4 8-4 8-6 7-7 7-12 9-4 2-2 0-2-4 0-1 8-5 7-5 6-6 7-10 4-7 3-7 2-12 0-2-2 0-33 0 0-1 0-5 37 0 4 2 1 2z"/></svg><svg class="h h12" viewBox="0 -85 100 100"><path d="M80 8l0 1-1 1-5 0-1-2 0-89 0-1 1-1 5 0 1 1 0 37 14 0 1 1 0 4-1 1-14 0zM21-27l0 2 2 1 10 0 16-2 15-2 1 0 1 4-1 1-5 2-22 2-16 1-4-1-2-1-1-3-1-3 0-50 1-1 1 0 4 0 1 1z"/></svg> <svg class="h h12" viewBox="0 -85 100 100"><path d="M20-14l1-5 3-2 22 0 0-13-39 0-1-1 0-4 1-1 85 0 2 1 0 4-1 1-40 0 0 13 22 0 3 1 1 1 1 4 0 19-2 3-2 1-49 1-4-1-2-1-1-3zM29-15l-2 0 0 2 0 14 1 2 43 0 2-1 0-15-1-2zM54-80l-1 2 1 3 4 5 4 4 10 6 14 5 0 1-3 4-8-2-10-4-10-8-5-7-5 7-7 6-14 7-6 2-2 0-2-4 0-2 14-5 9-6 6-7 4-9 6 0z"/></svg><svg class="h h12" viewBox="0 -85 100 100"><path d="M84-35l-1 1-1 1-5 0 0-2 0-46 0-1 1-1 5 0 1 2zM34 9l-5-1-2-3 0-33 5 0 1 1 0 11 44 0 0-11 1-1 5 0 1 30-1 4-1 2-2 0-4 1zM33-10l0 11 1 2 40 0 2 0 0-1 1-12zM57-72l-3 10-3 5-4 6-5 5-6 5-7 4-13 7-2 0-2-5 1-1 15-8 6-4 8-8 6-9 1-6 0-1-2-1-32 0 0-1 0-5 36 0 5 2 1 2z"/></svg><svg class="h h12" viewBox="0 -85 100 100"><path d="M84 8l-1 1-1 1-5 0 0-2 0-89 0-1 1-1 5 0 1 2zM23-27l0 2 1 1 9 0 17-1 18-3 1 1 1 3 0 2-5 1-23 2-18 1-4-1-2-1-2-3 0-3 0-50 0-1 1 0 5 0 1 1z"/></svg><svg class="h h12" viewBox="0 -85 100 100"><path d="M66-23l-1 2-5 1-23 3-17 0-3 0-3-2-1-2-1-4 0-43 1-4 1-2 2-1 4 0 34 0 2 1 0 4-1 1-35 0-1 43 1 2 4 1 13 0 27-4 1 1zM80 8l0 1-1 1-5 0-1-2 0-89 0-1 1-1 5 0 1 1 0 37 14 0 1 1 0 4-1 1-14 0z"/></svg>.</div>
<svg style="left:281px;top:91px" width="9" height="5" viewBox="0 0 9 5"><path d="M0 0H9L4.5 5Z" fill="#000"/></svg>
<svg style="left:298px;top:87px" width="8" height="10" viewBox="0 0 8 10"><rect x="1" y="0" width="5" height="6" fill="#000"/><rect x="2" y="1" width="1.3" height="4" fill="#dce8f4"/><rect x="0" y="5" width="7" height="1.2" fill="#000"/><rect x="3" y="6" width="1.2" height="3.5" fill="#000"/></svg>
<svg style="left:5px;top:106px" width="15" height="17" viewBox="0 0 15 17"><path d="M0.5 0.5H10L13.5 4V15.5H0.5Z" fill="#fff" stroke="#6a8ac8"/><path d="M10 0.5V4H13.5" fill="none" stroke="#6a8ac8"/><path d="M3 2.5H8M3 4.5H8M3 6.5H11M3 8.5H11M3 10.5H11M3 12.5H11" stroke="#5a7ac0" stroke-width="0.8"/></svg>
<svg style="left:26px;top:105px" width="17" height="17" viewBox="0 0 17 17"><path d="M3.5 0.5H13.5V8H3.5Z" fill="#fff" stroke="#4a6ab0"/><path d="M5 3H12" stroke="#4a6ab0"/><path d="M0.5 16.5V6.5H6L8 4.5H16.5V16.5Z" fill="#b0c8ec" stroke="#4a6ab0"/></svg>
<svg style="left:48px;top:105px" width="17" height="17" viewBox="0 0 17 17"><rect x="0.5" y="0.5" width="11" height="13" fill="#fff" stroke="#6a7a9a"/><rect x="4.5" y="3.5" width="12" height="13" fill="#fff" stroke="#6a7a9a"/><path d="M7 7H14M7 10H14M7 13H14" stroke="#4a5a8a"/></svg>
<svg style="left:70px;top:106px" width="15" height="17" viewBox="0 0 15 17"><path d="M0.5 0.5H10L13.5 4V15.5H0.5Z" fill="#fff" stroke="#6a8ac8"/><path d="M10 0.5V4H13.5" fill="none" stroke="#6a8ac8"/><path d="M3 2.5H8M3 4.5H8M3 6.5H11M3 8.5H11M3 10.5H11M3 12.5H11" stroke="#5a7ac0" stroke-width="0.8"/><path d="M1 9L9 16" stroke="#f0a030" stroke-width="3"/></svg>
<svg style="left:92px;top:106px" width="15" height="17" viewBox="0 0 15 17"><path d="M0.5 0.5H10L13.5 4V15.5H0.5Z" fill="#fff" stroke="#6a8ac8"/><path d="M10 0.5V4H13.5" fill="none" stroke="#6a8ac8"/><path d="M3 2.5H8M3 4.5H8M3 6.5H11M3 8.5H11M3 10.5H11M3 12.5H11" stroke="#5a7ac0" stroke-width="0.8"/><path d="M8 10L14 16M14 10L8 16" stroke="#e04020" stroke-width="1.8"/></svg>
<div style="position:absolute;left:113px;top:103px;width:1px;height:22px;background:#c8c8c8"></div>
<svg style="left:120px;top:105px" width="17" height="17" viewBox="0 0 17 17"><path d="M0.5 16.5V2.5H6L8 4.5H16.5V16.5Z" fill="#b8cfee" stroke="#4a6ab0"/><rect x="1" y="7" width="15" height="9" fill="#a4c0ea"/></svg>
<svg style="left:142px;top:105px" width="17" height="17" viewBox="0 0 17 17"><path d="M0.5 16.5V2.5H6L8 4.5H16.5V16.5Z" fill="#e6e6e6" stroke="#bcbcbc"/><rect x="2.5" y="8.5" width="11" height="5" fill="none" stroke="#c4c4c4"/></svg>
<svg style="left:164px;top:105px" width="17" height="17" viewBox="0 0 17 17"><path d="M0.5 16.5V2.5H6L8 4.5H16.5V16.5Z" fill="#e6e6e6" stroke="#bcbcbc"/><path d="M9 9L15 15M15 9L9 15" stroke="#c0c0c0" stroke-width="1.5"/></svg>
<div style="position:absolute;left:185px;top:103px;width:1px;height:22px;background:#c8c8c8"></div>
<svg style="left:192px;top:105px" width="17" height="17" viewBox="0 0 17 17"><circle cx="8.5" cy="8.5" r="7.5" fill="#fff" stroke="#555" stroke-width="1.4"/><path d="M4 8A4.5 4.5 0 0 1 12 6" fill="none" stroke="#d04040" stroke-width="1.5"/><path d="M13 9A4.5 4.5 0 0 1 5 11" fill="none" stroke="#3a5ad0" stroke-width="1.5"/></svg>
<div style="position:absolute;left:213px;top:103px;width:1px;height:22px;background:#c8c8c8"></div>
<svg style="left:217px;top:103px" width="23" height="21" viewBox="0 0 23 21"><rect x="0.5" y="0.5" width="22" height="20" fill="#cde4f7" stroke="#3a8ae0"/><rect x="3.5" y="3.5" width="5" height="5" fill="#fff" stroke="#333"/><rect x="3.5" y="12.5" width="5" height="5" fill="#fff" stroke="#333"/><path d="M4.5 6H7.5M6 4.5V7.5M4.5 15H7.5M6 13.5V16.5" stroke="#000"/><path d="M11 5H15M11 8H19M11 14H15M11 17H19" stroke="#3a4a3a" stroke-dasharray="2 1"/></svg>
<svg style="left:242px;top:105px" width="16" height="18" viewBox="0 0 16 18"><text x="0" y="8" font-size="9" fill="#5a7ad0" font-family="Liberation Sans">A</text><text x="0" y="17" font-size="9" fill="#c07070" font-family="Liberation Sans">Z</text><path d="M12 1V16M9.5 13L12 17L14.5 13" stroke="#333" fill="none" stroke-width="1.2"/></svg>
<div style="position:absolute;left:0px;top:126px;width:310px;height:489px;background:#fff;border:1px solid #5a6470;border-width:1px 1px 1px 1px"></div>
<div style="position:absolute;left:293px;top:127px;width:16px;height:487px;background:#f0f0f0"></div>
<svg style="left:297px;top:132px" width="9" height="6" viewBox="0 0 9 6"><path d="M1 5.5L4.5 2L8 5.5" fill="none" stroke="#555" stroke-width="2"/></svg>
<div style="position:absolute;left:294px;top:476px;width:14px;height:121px;background:#cdcdcd"></div>
<svg style="left:297px;top:602px" width="9" height="6" viewBox="0 0 9 6"><path d="M1 0.5L4.5 4L8 0.5" fill="none" stroke="#555" stroke-width="2"/></svg>
<svg style="left:9px;top:127px" width="1" height="478"><path d="M0.5 0V478" stroke="#808080" stroke-dasharray="1 1"/></svg>
<svg style="left:11px;top:137px" width="10" height="1" viewBox="0 0 10 1"><path d="M0 0.5H10" stroke="#808080" stroke-dasharray="1 1"/></svg>
<svg style="left:21px;top:130px" width="14" height="12" viewBox="0 0 14 12"><path d="M3.5 0L7 3.5H5V10H2V3.5H0Z" fill="#ee1111"/><path d="M9 2H12V8.5H14L10.5 12L7 8.5H9Z" fill="#1155dd"/></svg>
<div class="t" style="left:42px;top:129px;font-size:12px">Price Oscillator</div>
<svg style="left:11px;top:155px" width="10" height="1" viewBox="0 0 10 1"><path d="M0 0.5H10" stroke="#808080" stroke-dasharray="1 1"/></svg>
<svg style="left:21px;top:148px" width="14" height="12" viewBox="0 0 14 12"><path d="M3.5 0L7 3.5H5V10H2V3.5H0Z" fill="#ee1111"/><path d="M9 2H12V8.5H14L10.5 12L7 8.5H9Z" fill="#1155dd"/></svg>
<div class="t" style="left:42px;top:147px;font-size:12px">Price ROC</div>
<svg style="left:11px;top:173px" width="10" height="1" viewBox="0 0 10 1"><path d="M0 0.5H10" stroke="#808080" stroke-dasharray="1 1"/></svg>
<svg style="left:21px;top:166px" width="14" height="12" viewBox="0 0 14 12"><path d="M3.5 0L7 3.5H5V10H2V3.5H0Z" fill="#ee1111"/><path d="M9 2H12V8.5H14L10.5 12L7 8.5H9Z" fill="#1155dd"/></svg>
<div class="t" style="left:42px;top:165px;font-size:12px">RSI</div>
<svg style="left:11px;top:191px" width="10" height="1" viewBox="0 0 10 1"><path d="M0 0.5H10" stroke="#808080" stroke-dasharray="1 1"/></svg>
<svg style="left:21px;top:184px" width="14" height="12" viewBox="0 0 14 12"><path d="M3.5 0L7 3.5H5V10H2V3.5H0Z" fill="#ee1111"/><path d="M9 2H12V8.5H14L10.5 12L7 8.5H9Z" fill="#1155dd"/></svg>
<div class="t" style="left:42px;top:183px;font-size:12px">RSI Oscillator Bear</div>
<svg style="left:11px;top:209px" width="10" height="1" viewBox="0 0 10 1"><path d="M0 0.5H10" stroke="#808080" stroke-dasharray="1 1"/></svg>
<svg style="left:21px;top:202px" width="14" height="12" viewBox="0 0 14 12"><path d="M3.5 0L7 3.5H5V10H2V3.5H0Z" fill="#ee1111"/><path d="M9 2H12V8.5H14L10.5 12L7 8.5H9Z" fill="#1155dd"/></svg>
<div class="t" style="left:42px;top:201px;font-size:12px">RSI Oscillator Bull</div>
<svg style="left:11px;top:227px" width="10" height="1" viewBox="0 0 10 1"><path d="M0 0.5H10" stroke="#808080" stroke-dasharray="1 1"/></svg>
<svg style="left:21px;top:220px" width="14" height="12" viewBox="0 0 14 12"><path d="M3.5 0L7 3.5H5V10H2V3.5H0Z" fill="#ee1111"/><path d="M9 2H12V8.5H14L10.5 12L7 8.5H9Z" fill="#1155dd"/></svg>
<div class="t" style="left:42px;top:219px;font-size:12px">SONAR Momentum</div>
<svg style="left:11px;top:245px" width="10" height="1" viewBox="0 0 10 1"><path d="M0 0.5H10" stroke="#808080" stroke-dasharray="1 1"/></svg>
<svg style="left:21px;top:238px" width="14" height="12" viewBox="0 0 14 12"><path d="M3.5 0L7 3.5H5V10H2V3.5H0Z" fill="#ee1111"/><path d="M9 2H12V8.5H14L10.5 12L7 8.5H9Z" fill="#1155dd"/></svg>
<div class="t" style="left:42px;top:237px;font-size:12px">SONAR Momentum <svg class="h h12" viewBox="0 -85 100 100"><path d="M60-44l-1 8-1 6-4 7-3 4-4 4-5 2-9 0-6-1-4-3-4-4-3-4-2-5-1-9 0-8 1-9 1-6 3-4 3-5 6-4 9-2 9 2 6 4 5 7 3 8zM53-45l-1-7-1-6-3-6-4-4-6-3-6 1-4 2-4 4-2 4-2 6 0 14 2 11 3 5 3 3 4 2 6 1 4-2 3-2 3-3 3-6 1-7zM84 8l-1 1-1 1-5 0 0-2 0-89 0-1 1-1 5 0 1 2z"/></svg><svg class="h h12" viewBox="0 -85 100 100"><path d="M81-6l-2 6-3 4-4 2-10 3-12 1-14-1-9-3-6-5-2-4 0-3 1-7 4-3 4-2 9-3 13-1 12 1 10 3 4 2 3 3zM92-36l2 2 0 3-2 1-84 0-2-1 0-3 1-1 39-1 0-12-20 0-3-1-2-2-1-5 0-19 2-4 4-2 54 1 0 5-1 0-51 1-1 2 0 16 1 1 2 1 50 0 1 1 0 4-1 1-27 0 0 12zM74-6l-2-4-4-3-7-2-11-1-9 0-8 2-6 4-1 4 1 4 6 4 8 1 9 1 9-1 7-1 6-4z"/></svg><svg class="h h12" viewBox="0 -85 100 100"><path d="M84-8l0 4-2 3-3 4-3 2-9 4-12 1-11-1-10-4-3-2-3-4-1-3-1-4 1-4 1-4 3-3 3-3 10-3 11-1 12 1 9 3 3 3 3 3 2 4zM61-74l-1 2-9 0 0 31 14-1 0 1 1 4-11 2-20 1-22 0-4-1-1-4 1-1 12 0 0-32-11 0-1-2 0-3 1-1 50 0 1 1zM77-8l0-3-2-2-4-4-7-3-9 0-9 0-6 3-5 4-1 5 1 5 5 4 6 2 9 1 9-1 7-2 4-4 2-2zM77-68l0-14 0-1 5 0 1 1 1 1 0 52-1 1-1 1-5 0 0-1 0-18-16 0-1-2 0-4 1 0 16 0 0-10-16-1-1-1 0-4zM38-40l7 0 0-32-17 0 0 32z"/></svg><svg class="h h12" viewBox="0 -85 100 100"><path d="M73-70l0-2-2-1-50 0-1-1 0-4 0-1 1 0 51 0 4 1 3 1 1 4 0 6-1 14-2 11 16 0 1 1 0 3-2 2-23 0 0 23-1 1-5 1-1-2 0-23-20 0 0 23-1 2-5 0-1-2 0-23-27 0-2-1 0-4 1-1 63 0 2-14zM83 7l-1 1-56 0-4-1-2-1-1-4 0-23 1-1 5 0 0 1 0 21 1 2 56 0 1 1z"/></svg><svg class="h h12" viewBox="0 -85 100 100"><path d="M40-78l-2 15 3 6 3 6 5 5 7 7 6 3 0 2-3 4-6-3-11-11-7-10-4 8-5 7-9 9-4 2-1 1-3-4 0-1 10-9 6-8 3-6 4-13 2-11 6 0zM77-59l0-23 0-1 5 0 1 1 1 1 0 64-1 1-1 0-5 0 0-1 0-36-21 0-1-1 0-4 0-1zM86 7l-1 1-50 0-5-1-2-2-1-3 0-22 2-1 4 0 1 1 0 20 1 2 50 0 1 1z"/></svg></div>
<svg style="left:11px;top:263px" width="10" height="1" viewBox="0 0 10 1"><path d="M0 0.5H10" stroke="#808080" stroke-dasharray="1 1"/></svg>
<svg style="left:21px;top:256px" width="14" height="12" viewBox="0 0 14 12"><path d="M3.5 0L7 3.5H5V10H2V3.5H0Z" fill="#ee1111"/><path d="M9 2H12V8.5H14L10.5 12L7 8.5H9Z" fill="#1155dd"/></svg>
<div class="t" style="left:42px;top:255px;font-size:12px">Stochastic Bear Crss</div>
<svg style="left:11px;top:281px" width="10" height="1" viewBox="0 0 10 1"><path d="M0 0.5H10" stroke="#808080" stroke-dasharray="1 1"/></svg>
<svg style="left:21px;top:274px" width="14" height="12" viewBox="0 0 14 12"><path d="M3.5 0L7 3.5H5V10H2V3.5H0Z" fill="#ee1111"/><path d="M9 2H12V8.5H14L10.5 12L7 8.5H9Z" fill="#1155dd"/></svg>
<div class="t" style="left:42px;top:273px;font-size:12px">Stochastic Bull Crss</div>
<svg style="left:11px;top:299px" width="10" height="1" viewBox="0 0 10 1"><path d="M0 0.5H10" stroke="#808080" stroke-dasharray="1 1"/></svg>
<svg style="left:21px;top:292px" width="14" height="12" viewBox="0 0 14 12"><path d="M3.5 0L7 3.5H5V10H2V3.5H0Z" fill="#ee1111"/><path d="M9 2H12V8.5H14L10.5 12L7 8.5H9Z" fill="#1155dd"/></svg>
<div class="t" style="left:42px;top:291px;font-size:12px">Stochastics</div>
<svg style="left:11px;top:317px" width="10" height="1" viewBox="0 0 10 1"><path d="M0 0.5H10" stroke="#808080" stroke-dasharray="1 1"/></svg>
<svg style="left:21px;top:310px" width="14" height="12" viewBox="0 0 14 12"><path d="M3.5 0L7 3.5H5V10H2V3.5H0Z" fill="#ee1111"/><path d="M9 2H12V8.5H14L10.5 12L7 8.5H9Z" fill="#1155dd"/></svg>
<div class="t" style="left:42px;top:309px;font-size:12px">Stochastics K_D</div>
<svg style="left:11px;top:335px" width="10" height="1" viewBox="0 0 10 1"><path d="M0 0.5H10" stroke="#808080" stroke-dasharray="1 1"/></svg>
<svg style="left:21px;top:328px" width="14" height="12" viewBox="0 0 14 12"><path d="M3.5 0L7 3.5H5V10H2V3.5H0Z" fill="#ee1111"/><path d="M9 2H12V8.5H14L10.5 12L7 8.5H9Z" fill="#1155dd"/></svg>
<div class="t" style="left:42px;top:327px;font-size:12px">TRIX</div>
<svg style="left:11px;top:353px" width="10" height="1" viewBox="0 0 10 1"><path d="M0 0.5H10" stroke="#808080" stroke-dasharray="1 1"/></svg>
<svg style="left:21px;top:346px" width="14" height="12" viewBox="0 0 14 12"><path d="M3.5 0L7 3.5H5V10H2V3.5H0Z" fill="#ee1111"/><path d="M9 2H12V8.5H14L10.5 12L7 8.5H9Z" fill="#1155dd"/></svg>
<div class="t" style="left:42px;top:345px;font-size:12px">TRIX <svg class="h h12" viewBox="0 -85 100 100"><path d="M84 8l-1 1-1 1-5 0 0-2 0-89 0-1 1-1 5 0 1 2zM57-68l-1 9-3 8-3 8-5 8-5 7-7 7-12 9-5 2-1 0-3-4 0-1 9-5 7-5 6-6 7-10 4-7 3-7 2-12-1-2-1 0-33 0-1-1 1-5 36 0 4 2 1 2z"/></svg><svg class="h h12" viewBox="0 -85 100 100"><path d="M73-70l-6 5-8 5 28 8 0 1-2 4-15-3-19-6-25 8-10 3-1-1-1-4 20-6 13-5 12-6 8-6-2-1-44 0 0-1 0-4 0-1 50 0 5 2 1 3-2 3zM48-10l-1-1 0-20-40 0-1-2 0-3 1-1 85 0 2 0 0 5-1 1-39 0 0 20-1 1zM83 7l-1 1-55 0-4-1-3-1-1-4 0-23 1-1 5 1 1 0 0 21 1 2 55 0 1 1z"/></svg><svg class="h h12" viewBox="0 -85 100 100"><path d="M40-78l-2 15 3 6 3 6 5 5 7 7 6 3 0 2-3 4-6-3-11-11-7-10-4 8-5 7-9 9-4 2-1 1-3-4 0-1 10-9 6-8 3-6 4-13 2-11 6 0zM77-59l0-23 0-1 5 0 1 1 1 1 0 64-1 1-1 0-5 0 0-1 0-36-21 0-1-1 0-4 0-1zM86 7l-1 1-50 0-5-1-2-2-1-3 0-22 2-1 4 0 1 1 0 20 1 2 50 0 1 1z"/></svg></div>
<svg style="left:11px;top:371px" width="10" height="1" viewBox="0 0 10 1"><path d="M0 0.5H10" stroke="#808080" stroke-dasharray="1 1"/></svg>
<svg style="left:21px;top:364px" width="14" height="12" viewBox="0 0 14 12"><path d="M3.5 0L7 3.5H5V10H2V3.5H0Z" fill="#ee1111"/><path d="M9 2H12V8.5H14L10.5 12L7 8.5H9Z" fill="#1155dd"/></svg>
<div class="t" style="left:42px;top:363px;font-size:12px">Volatility Percent</div>
<svg style="left:11px;top:389px" width="10" height="1" viewBox="0 0 10 1"><path d="M0 0.5H10" stroke="#808080" stroke-dasharray="1 1"/></svg>
<svg style="left:21px;top:382px" width="14" height="12" viewBox="0 0 14 12"><path d="M3.5 0L7 3.5H5V10H2V3.5H0Z" fill="#ee1111"/><path d="M9 2H12V8.5H14L10.5 12L7 8.5H9Z" fill="#1155dd"/></svg>
<div class="t" style="left:42px;top:381px;font-size:12px">VolEX Pcnt Bear</div>
<svg style="left:11px;top:407px" width="10" height="1" viewBox="0 0 10 1"><path d="M0 0.5H10" stroke="#808080" stroke-dasharray="1 1"/></svg>
<svg style="left:21px;top:400px" width="14" height="12" viewBox="0 0 14 12"><path d="M3.5 0L7 3.5H5V10H2V3.5H0Z" fill="#ee1111"/><path d="M9 2H12V8.5H14L10.5 12L7 8.5H9Z" fill="#1155dd"/></svg>
<div class="t" style="left:42px;top:399px;font-size:12px">VolEx Pcnt Bull</div>
<svg style="left:11px;top:425px" width="10" height="1" viewBox="0 0 10 1"><path d="M0 0.5H10" stroke="#808080" stroke-dasharray="1 1"/></svg>
<svg style="left:21px;top:418px" width="14" height="12" viewBox="0 0 14 12"><path d="M3.5 0L7 3.5H5V10H2V3.5H0Z" fill="#ee1111"/><path d="M9 2H12V8.5H14L10.5 12L7 8.5H9Z" fill="#1155dd"/></svg>
<div class="t" style="left:42px;top:417px;font-size:12px">Volume Oscillator</div>
<svg style="left:11px;top:443px" width="10" height="1" viewBox="0 0 10 1"><path d="M0 0.5H10" stroke="#808080" stroke-dasharray="1 1"/></svg>
<svg style="left:21px;top:436px" width="14" height="12" viewBox="0 0 14 12"><path d="M3.5 0L7 3.5H5V10H2V3.5H0Z" fill="#ee1111"/><path d="M9 2H12V8.5H14L10.5 12L7 8.5H9Z" fill="#1155dd"/></svg>
<div class="t" style="left:42px;top:435px;font-size:12px">VR</div>
<svg style="left:11px;top:461px" width="10" height="1" viewBox="0 0 10 1"><path d="M0 0.5H10" stroke="#808080" stroke-dasharray="1 1"/></svg>
<svg style="left:21px;top:454px" width="14" height="12" viewBox="0 0 14 12"><path d="M3.5 0L7 3.5H5V10H2V3.5H0Z" fill="#ee1111"/><path d="M9 2H12V8.5H14L10.5 12L7 8.5H9Z" fill="#1155dd"/></svg>
<div class="t" style="left:42px;top:453px;font-size:12px">Williams&#x27;R</div>
<svg style="left:11px;top:479px" width="10" height="1" viewBox="0 0 10 1"><path d="M0 0.5H10" stroke="#808080" stroke-dasharray="1 1"/></svg>
<svg style="left:21px;top:472px" width="14" height="12" viewBox="0 0 14 12"><path d="M3.5 0L7 3.5H5V10H2V3.5H0Z" fill="#ee1111"/><path d="M9 2H12V8.5H14L10.5 12L7 8.5H9Z" fill="#1155dd"/></svg>
<div class="t" style="left:42px;top:471px;font-size:12px">Z_ETF<svg class="h h12" viewBox="0 -85 100 100"><path d="M67-36l-1 1-3 1-19 2-23 1-5-2-1-2-1-5 0-30 0-5 2-1 3-1 37 0 1 5-1 1-35 0 0 32 0 1 2 0 12 0 16-1 14-2 1 1zM80-16l0 1-1 0-5 0-1-1 0-65 0-1 1-1 5 0 1 1 0 29 14 0 1 2 0 3-1 1-14 0zM84 7l-1 1-51 0-5-1-2-2-1-3 0-21 2-1 4 0 1 1 0 19 1 2 51 0 1 1z"/></svg><svg class="h h12" viewBox="0 -85 100 100"><path d="M54-42l-35 0 1 21 2 1 15-1 25-3 1 2 0 3 0 1-10 2-17 1-16 1-5-2-2-2-1-5 0-45 1-5 2-1 3-1 37 0 1 5-1 1-34 0-1 0-1 1 0 21 35-1 1 1 0 4zM80 8l0 1-1 1-5 0-1-2 0-89 0-1 1-1 5 0 1 1 0 37 14 0 1 1 0 4-1 1-14 0z"/></svg>_<svg class="h h12" viewBox="0 -85 100 100"><path d="M84-30l-1 1-1 0-5 0 0-1 0-12-22 0-6 5-5 2-5 1-8 0-7-2-7-5-4-8-1-4 0-5 1-5 2-4 2-4 5-4 7-2 7-1 6 0 5 2 5 4 4 4 21 0 0-14 1-1 5 0 1 2zM53-56l-2-7-4-5-5-3-6-1-7 1-5 3-4 5-1 7 1 7 4 5 5 3 7 1 6-1 5-3 4-5zM25-23l2-1 49 0 5 1 2 2 0 3 0 27-1 1-5 0 0-1-1-26-50-1-1-1zM60-56l-2 8 19 0 0-14-18 0z"/></svg><svg class="h h12" viewBox="0 -85 100 100"><path d="M73-59l-6 5-9 5 28 8 0 1-2 4-12-3-22-6-21 8-13 2-2 0-1-4 1-2 13-3 18-6 16-7 4-3 1-2-1-1-44 0 0-1 0-4 0-1 47 0 6 1 3 1 0 4zM48 9l-2-1 0-28-39 0-1-1 0-5 86 0 2 0 0 5-1 1-40 0 0 28-1 1zM63-83l1 1 0 1 0 4-1 0-27 1-2-1 0-4 1-2z"/></svg><svg class="h h12" viewBox="0 -85 100 100"><path d="M35-76l-1 24 1 6 6 13 6 9 5 6 0 1-3 3-2 0-9-12-7-13-3 7-4 7-8 10-3 3-2 1-4-4 10-12 4-6 2-7 4-15 1-21 1-1 5 0zM62-48l1-32 0-1 5 0 1 0 0 1 0 84 0 1-1 1-5 0-1-2 0-46-14 0-2-1 0-4 1-1zM87 8l-1 1-1 1-4 0-1-2 0-89 1-1 1-1 4 0 1 2z"/></svg>_1.0</div>
<svg style="left:11px;top:497px" width="10" height="1" viewBox="0 0 10 1"><path d="M0 0.5H10" stroke="#808080" stroke-dasharray="1 1"/></svg>
<svg style="left:21px;top:490px" width="14" height="12" viewBox="0 0 14 12"><path d="M3.5 0L7 3.5H5V10H2V3.5H0Z" fill="#ee1111"/><path d="M9 2H12V8.5H14L10.5 12L7 8.5H9Z" fill="#1155dd"/></svg>
<div class="t" style="left:42px;top:489px;font-size:12px">Z_ETF<svg class="h h12" viewBox="0 -85 100 100"><path d="M67-36l-1 1-3 1-19 2-23 1-5-2-1-2-1-5 0-30 0-5 2-1 3-1 37 0 1 5-1 1-35 0 0 32 0 1 2 0 12 0 16-1 14-2 1 1zM80-16l0 1-1 0-5 0-1-1 0-65 0-1 1-1 5 0 1 1 0 29 14 0 1 2 0 3-1 1-14 0zM84 7l-1 1-51 0-5-1-2-2-1-3 0-21 2-1 4 0 1 1 0 19 1 2 51 0 1 1z"/></svg><svg class="h h12" viewBox="0 -85 100 100"><path d="M54-42l-35 0 1 21 2 1 15-1 25-3 1 2 0 3 0 1-10 2-17 1-16 1-5-2-2-2-1-5 0-45 1-5 2-1 3-1 37 0 1 5-1 1-34 0-1 0-1 1 0 21 35-1 1 1 0 4zM80 8l0 1-1 1-5 0-1-2 0-89 0-1 1-1 5 0 1 1 0 37 14 0 1 1 0 4-1 1-14 0z"/></svg>_<svg class="h h12" viewBox="0 -85 100 100"><path d="M81-6l-2 6-3 4-4 2-10 3-12 1-14-1-9-3-6-5-2-4 0-3 1-7 4-3 4-2 9-3 13-1 12 1 10 3 4 2 3 3zM73-70l-6 5-8 4 28 7 0 1-2 4-13-2-21-6-21 7-14 3-2-1-1-4 1-1 15-3 18-6 12-6 7-4 1-1-2-1-44 0 0-2 0-4 47 0 6 0 2 1 1 3 0 2zM74-6l-2-4-4-3-7-2-11-1-9 0-8 2-6 4-1 4 1 4 6 4 8 1 9 1 9-1 7-1 6-4zM52-50l1 1 0 13 40 1 1 1 0 3-1 1-85 0-2 0 0-4 1-1 39-1 0-13 1-1z"/></svg><svg class="h h12" viewBox="0 -85 100 100"><path d="M54-68l-1 9-3 8-3 8-5 8-5 7-7 7-12 9-5 2-1 0-3-4 0-1 9-5 7-5 6-6 7-10 4-7 3-7 2-12-1-2-1 0-32 0-1-1 0-5 36 0 4 2 1 2zM80 8l0 1-1 1-5 0-1-2 0-89 0-1 1-1 5 0 1 1 0 36 14 0 1 2 0 3-1 1-14 0z"/></svg><svg class="h h12" viewBox="0 -85 100 100"><path d="M11-68l0-3 1-2 4-2 27 0 3 1 2 1 1 4 0 45 0 4-1 2-4 1-26 0-4 0-2-2-1-4zM68-45l12 0 0-37 2-1 4 0 1 1 0 90-1 2-5 0-1-2 0-47-12 0-1 44-1 1-4 0-1-1 0-85 0-1 1 0 5 0 0 1zM20-69l-2 1 0 1 0 43 2 1 21 0 1-3 0-42-2-1z"/></svg><svg class="h h12" viewBox="0 -85 100 100"><path d="M48 9l-2-1 0-33-39 0-1-1 0-5 86 0 2 0 0 5-1 1-40 0 0 33-1 1zM54-80l-2 4 2 4 3 5 8 7 6 4 7 4 9 2 0 2-2 4-2 0-5-2-13-6-10-8-6-8-5 8-7 6-9 6-11 5-2 0-2-4 0-1 13-6 10-8 8-10 2-4 1-6 5 0 1 1z"/></svg>_1.0</div>
<svg style="left:11px;top:515px" width="10" height="1" viewBox="0 0 10 1"><path d="M0 0.5H10" stroke="#808080" stroke-dasharray="1 1"/></svg>
<svg style="left:21px;top:508px" width="14" height="12" viewBox="0 0 14 12"><path d="M3.5 0L7 3.5H5V10H2V3.5H0Z" fill="#ee1111"/><path d="M9 2H12V8.5H14L10.5 12L7 8.5H9Z" fill="#1155dd"/></svg>
<div class="t" style="left:42px;top:507px;font-size:12px">Z_ETF<svg class="h h12" viewBox="0 -85 100 100"><path d="M67-36l-1 1-3 1-19 2-23 1-5-2-1-2-1-5 0-30 0-5 2-1 3-1 37 0 1 5-1 1-35 0 0 32 0 1 2 0 12 0 16-1 14-2 1 1zM80-16l0 1-1 0-5 0-1-1 0-65 0-1 1-1 5 0 1 1 0 29 14 0 1 2 0 3-1 1-14 0zM84 7l-1 1-51 0-5-1-2-2-1-3 0-21 2-1 4 0 1 1 0 19 1 2 51 0 1 1z"/></svg><svg class="h h12" viewBox="0 -85 100 100"><path d="M54-42l-35 0 1 21 2 1 15-1 25-3 1 2 0 3 0 1-10 2-17 1-16 1-5-2-2-2-1-5 0-45 1-5 2-1 3-1 37 0 1 5-1 1-34 0-1 0-1 1 0 21 35-1 1 1 0 4zM80 8l0 1-1 1-5 0-1-2 0-89 0-1 1-1 5 0 1 1 0 37 14 0 1 1 0 4-1 1-14 0z"/></svg>_<svg class="h h12" viewBox="0 -85 100 100"><path d="M81-6l-2 6-3 4-4 2-10 3-12 1-14-1-9-3-6-5-2-4 0-3 1-7 4-3 4-2 9-3 13-1 12 1 10 3 4 2 3 3zM73-70l-6 5-8 4 28 7 0 1-2 4-13-2-21-6-21 7-14 3-2-1-1-4 1-1 15-3 18-6 12-6 7-4 1-1-2-1-44 0 0-2 0-4 47 0 6 0 2 1 1 3 0 2zM74-6l-2-4-4-3-7-2-11-1-9 0-8 2-6 4-1 4 1 4 6 4 8 1 9 1 9-1 7-1 6-4zM52-50l1 1 0 13 40 1 1 1 0 3-1 1-85 0-2 0 0-4 1-1 39-1 0-13 1-1z"/></svg><svg class="h h12" viewBox="0 -85 100 100"><path d="M54-68l-1 9-3 8-3 8-5 8-5 7-7 7-12 9-5 2-1 0-3-4 0-1 9-5 7-5 6-6 7-10 4-7 3-7 2-12-1-2-1 0-32 0-1-1 0-5 36 0 4 2 1 2zM80 8l0 1-1 1-5 0-1-2 0-89 0-1 1-1 5 0 1 1 0 36 14 0 1 2 0 3-1 1-14 0z"/></svg><svg class="h h12" viewBox="0 -85 100 100"><path d="M11-68l0-3 1-2 4-2 27 0 3 1 2 1 1 4 0 45 0 4-1 2-4 1-26 0-4 0-2-2-1-4zM68-45l12 0 0-37 2-1 4 0 1 1 0 90-1 2-5 0-1-2 0-47-12 0-1 44-1 1-4 0-1-1 0-85 0-1 1 0 5 0 0 1zM20-69l-2 1 0 1 0 43 2 1 21 0 1-3 0-42-2-1z"/></svg><svg class="h h12" viewBox="0 -85 100 100"><path d="M48 9l-2-1 0-33-39 0-1-1 0-5 86 0 2 0 0 5-1 1-40 0 0 33-1 1zM54-80l-2 4 2 4 3 5 8 7 6 4 7 4 9 2 0 2-2 4-2 0-5-2-13-6-10-8-6-8-5 8-7 6-9 6-11 5-2 0-2-4 0-1 13-6 10-8 8-10 2-4 1-6 5 0 1 1z"/></svg>_1.1</div>
<svg style="left:11px;top:533px" width="10" height="1" viewBox="0 0 10 1"><path d="M0 0.5H10" stroke="#808080" stroke-dasharray="1 1"/></svg>
<svg style="left:21px;top:526px" width="14" height="12" viewBox="0 0 14 12"><path d="M3.5 0L7 3.5H5V10H2V3.5H0Z" fill="#ee1111"/><path d="M9 2H12V8.5H14L10.5 12L7 8.5H9Z" fill="#1155dd"/></svg>
<div class="t" style="left:42px;top:525px;font-size:12px">Z_ETF<svg class="h h12" viewBox="0 -85 100 100"><path d="M67-36l-1 1-3 1-19 2-23 1-5-2-1-2-1-5 0-30 0-5 2-1 3-1 37 0 1 5-1 1-35 0 0 32 0 1 2 0 12 0 16-1 14-2 1 1zM80-16l0 1-1 0-5 0-1-1 0-65 0-1 1-1 5 0 1 1 0 29 14 0 1 2 0 3-1 1-14 0zM84 7l-1 1-51 0-5-1-2-2-1-3 0-21 2-1 4 0 1 1 0 19 1 2 51 0 1 1z"/></svg><svg class="h h12" viewBox="0 -85 100 100"><path d="M54-42l-35 0 1 21 2 1 15-1 25-3 1 2 0 3 0 1-10 2-17 1-16 1-5-2-2-2-1-5 0-45 1-5 2-1 3-1 37 0 1 5-1 1-34 0-1 0-1 1 0 21 35-1 1 1 0 4zM80 8l0 1-1 1-5 0-1-2 0-89 0-1 1-1 5 0 1 1 0 37 14 0 1 1 0 4-1 1-14 0z"/></svg>_<svg class="h h12" viewBox="0 -85 100 100"><path d="M73-59l-6 5-9 5 28 8 0 1-2 4-12-3-22-6-21 8-13 2-2 0-1-4 1-2 13-3 18-6 16-7 4-3 1-2-1-1-44 0 0-1 0-4 0-1 47 0 6 1 3 1 0 4zM48 9l-2-1 0-28-39 0-1-1 0-5 86 0 2 0 0 5-1 1-40 0 0 28-1 1zM63-83l1 1 0 1 0 4-1 0-27 1-2-1 0-4 1-2z"/></svg><svg class="h h12" viewBox="0 -85 100 100"><path d="M35-76l-1 24 1 6 6 13 6 9 5 6 0 1-3 3-2 0-9-12-7-13-3 7-4 7-8 10-3 3-2 1-4-4 10-12 4-6 2-7 4-15 1-21 1-1 5 0zM62-48l1-32 0-1 5 0 1 0 0 1 0 84 0 1-1 1-5 0-1-2 0-46-14 0-2-1 0-4 1-1zM87 8l-1 1-1 1-4 0-1-2 0-89 1-1 1-1 4 0 1 2z"/></svg><svg class="h h12" viewBox="0 -85 100 100"><path d="M73-59l-6 5-9 5 28 8 0 1-2 4-12-3-22-6-21 8-13 2-2 0-1-4 1-2 13-3 18-6 16-7 4-3 1-2-1-1-44 0 0-1 0-4 0-1 47 0 6 1 3 1 0 4zM48 9l-2-1 0-28-39 0-1-1 0-5 86 0 2 0 0 5-1 1-40 0 0 28-1 1zM63-83l1 1 0 1 0 4-1 0-27 1-2-1 0-4 1-2z"/></svg><svg class="h h12" viewBox="0 -85 100 100"><path d="M81-6l-2 6-3 4-4 2-10 3-12 1-14-1-9-3-6-5-2-4 0-3 1-7 4-3 4-2 9-3 13-1 12 1 10 3 4 2 3 3zM73-70l-6 5-8 4 28 7 0 1-2 4-13-2-21-6-21 7-14 3-2-1-1-4 1-1 15-3 18-6 12-6 7-4 1-1-2-1-44 0 0-2 0-4 47 0 6 0 2 1 1 3 0 2zM74-6l-2-4-4-3-7-2-11-1-9 0-8 2-6 4-1 4 1 4 6 4 8 1 9 1 9-1 7-1 6-4zM52-50l1 1 0 13 40 1 1 1 0 3-1 1-85 0-2 0 0-4 1-1 39-1 0-13 1-1z"/></svg>_1.0</div>
<svg style="left:11px;top:551px" width="10" height="1" viewBox="0 0 10 1"><path d="M0 0.5H10" stroke="#808080" stroke-dasharray="1 1"/></svg>
<svg style="left:21px;top:544px" width="14" height="12" viewBox="0 0 14 12"><path d="M3.5 0L7 3.5H5V10H2V3.5H0Z" fill="#ee1111"/><path d="M9 2H12V8.5H14L10.5 12L7 8.5H9Z" fill="#1155dd"/></svg>
<div class="t" style="left:42px;top:543px;font-size:12px">Z_ETF<svg class="h h12" viewBox="0 -85 100 100"><path d="M67-36l-1 1-3 1-19 2-23 1-5-2-1-2-1-5 0-30 0-5 2-1 3-1 37 0 1 5-1 1-35 0 0 32 0 1 2 0 12 0 16-1 14-2 1 1zM80-16l0 1-1 0-5 0-1-1 0-65 0-1 1-1 5 0 1 1 0 29 14 0 1 2 0 3-1 1-14 0zM84 7l-1 1-51 0-5-1-2-2-1-3 0-21 2-1 4 0 1 1 0 19 1 2 51 0 1 1z"/></svg><svg class="h h12" viewBox="0 -85 100 100"><path d="M54-42l-35 0 1 21 2 1 15-1 25-3 1 2 0 3 0 1-10 2-17 1-16 1-5-2-2-2-1-5 0-45 1-5 2-1 3-1 37 0 1 5-1 1-34 0-1 0-1 1 0 21 35-1 1 1 0 4zM80 8l0 1-1 1-5 0-1-2 0-89 0-1 1-1 5 0 1 1 0 37 14 0 1 1 0 4-1 1-14 0z"/></svg>_<svg class="h h12" viewBox="0 -85 100 100"><path d="M73-59l-6 5-9 5 28 8 0 1-2 4-12-3-22-6-21 8-13 2-2 0-1-4 1-2 13-3 18-6 16-7 4-3 1-2-1-1-44 0 0-1 0-4 0-1 47 0 6 1 3 1 0 4zM48 9l-2-1 0-28-39 0-1-1 0-5 86 0 2 0 0 5-1 1-40 0 0 28-1 1zM63-83l1 1 0 1 0 4-1 0-27 1-2-1 0-4 1-2z"/></svg><svg class="h h12" viewBox="0 -85 100 100"><path d="M35-76l-1 24 1 6 6 13 6 9 5 6 0 1-3 3-2 0-9-12-7-13-3 7-4 7-8 10-3 3-2 1-4-4 10-12 4-6 2-7 4-15 1-21 1-1 5 0zM62-48l1-32 0-1 5 0 1 0 0 1 0 84 0 1-1 1-5 0-1-2 0-46-14 0-2-1 0-4 1-1zM87 8l-1 1-1 1-4 0-1-2 0-89 1-1 1-1 4 0 1 2z"/></svg><svg class="h h12" viewBox="0 -85 100 100"><path d="M73-59l-6 5-9 5 28 8 0 1-2 4-12-3-22-6-21 8-13 2-2 0-1-4 1-2 13-3 18-6 16-7 4-3 1-2-1-1-44 0 0-1 0-4 0-1 47 0 6 1 3 1 0 4zM48 9l-2-1 0-28-39 0-1-1 0-5 86 0 2 0 0 5-1 1-40 0 0 28-1 1zM63-83l1 1 0 1 0 4-1 0-27 1-2-1 0-4 1-2z"/></svg><svg class="h h12" viewBox="0 -85 100 100"><path d="M81-6l-2 6-3 4-4 2-10 3-12 1-14-1-9-3-6-5-2-4 0-3 1-7 4-3 4-2 9-3 13-1 12 1 10 3 4 2 3 3zM73-70l-6 5-8 4 28 7 0 1-2 4-13-2-21-6-21 7-14 3-2-1-1-4 1-1 15-3 18-6 12-6 7-4 1-1-2-1-44 0 0-2 0-4 47 0 6 0 2 1 1 3 0 2zM74-6l-2-4-4-3-7-2-11-1-9 0-8 2-6 4-1 4 1 4 6 4 8 1 9 1 9-1 7-1 6-4zM52-50l1 1 0 13 40 1 1 1 0 3-1 1-85 0-2 0 0-4 1-1 39-1 0-13 1-1z"/></svg>_1.1_Range<svg class="h h12" viewBox="0 -85 100 100"><path d="M63-18l-2 1-7-6-13-15-6 6-9 9-11 9-2 0-3-4 0-1 15-12 11-11 7-12 3-6 2-8 0-1-2 0-30 0-1-1 0-5 34 0 4 0 3 2 0 4-2 8-3 6-6 12 10 12 10 9 0 1zM84 8l-1 1-1 1-5 0 0-2 0-89 0-1 1-1 5 0 1 2z"/></svg><svg class="h h12" viewBox="0 -85 100 100"><path d="M84-36l-1 1-1 0-13 0 0 23 24 0 1 1 0 4-1 1-85 0-2-1 0-4 1-1 24 0 0-23-14 0-2-1 0-3 1-1 13 0 0-30-11 0-1-2 0-3 1-1 63 0 1 4-1 2-11 0 0 30 13 0 1 0zM36-40l27 0 0-30-27 0zM37-12l25 0 0-23-25 0z"/></svg><svg class="h h12" viewBox="0 -85 100 100"><path d="M67-38l1 1 1 4-6 1-28 2-26 0-2-1 0-3 2-1 26 0 0-6-7-1-6-2-4-3-2-4 1-3 3-5 4-2 8-2 10 0 8 2 6 2 3 5 1 3-3 5-5 3-10 2 0 6zM82 9l-1 1-52 0-6 0-2-4 0-8 1-5 2-1 5-1 43 0 1-1 0-6 0-1-2-1-49 0-1-1 0-3 1-1 50 0 5 1 2 1 1 2 0 8-1 5-2 1-5 1-43 0-1 2 0 6 1 1 1 0 51 0 1 1zM80-30l0 1-1 0-5 0-1-1 0-51 0-1 1-1 5 0 1 1 0 28 14 0 1 1 0 4-1 1-14 0zM53-52l-1-2-3-2-4-1-7-1-11 2-3 1-1 3 1 3 3 2 11 1 10-1 4-2zM65-68l0 1-1 1-52 0-1-1 0-3 1-2 52 0 1 1zM51-78l-1 1-1 0-24 0-1-1 0-3 2-1 23 0 2 1z"/></svg><svg class="h h12" viewBox="0 -85 100 100"><path d="M92-35l2 1 0 4-2 1-84 0-2-2 0-3 1-1 23 0 0-16-6-4-3-3-2-5 1-7 4-5 6-3 7-3 11-1 9 1 11 2 8 5 4 5 1 6-2 4-3 4-6 3 0 17zM81-6l-2 6-3 4-4 2-10 3-12 1-14-1-9-3-6-5-2-4 0-3 1-7 4-3 4-2 9-3 13-1 12 1 10 3 4 2 3 3zM50-76l-11 1-9 4-2 2-2 2 0 4 2 2 2 2 5 3 12 2 14-1 9-4 2-2 2-2-1-5-2-2-3-2-5-2zM74-6l-2-4-4-3-7-2-11-1-9 0-8 2-6 4-1 4 1 4 6 4 8 1 9 1 9-1 7-1 6-4zM50-48l-13-1 0 14 26 0 0-15z"/></svg></div>
<svg style="left:11px;top:569px" width="10" height="1" viewBox="0 0 10 1"><path d="M0 0.5H10" stroke="#808080" stroke-dasharray="1 1"/></svg>
<svg style="left:21px;top:562px" width="14" height="12" viewBox="0 0 14 12"><path d="M3.5 0L7 3.5H5V10H2V3.5H0Z" fill="#ee1111"/><path d="M9 2H12V8.5H14L10.5 12L7 8.5H9Z" fill="#1155dd"/></svg>
<div class="t" style="left:42px;top:561px;font-size:12px">Z_ETF<svg class="h h12" viewBox="0 -85 100 100"><path d="M67-36l-1 1-3 1-19 2-23 1-5-2-1-2-1-5 0-30 0-5 2-1 3-1 37 0 1 5-1 1-35 0 0 32 0 1 2 0 12 0 16-1 14-2 1 1zM80-16l0 1-1 0-5 0-1-1 0-65 0-1 1-1 5 0 1 1 0 29 14 0 1 2 0 3-1 1-14 0zM84 7l-1 1-51 0-5-1-2-2-1-3 0-21 2-1 4 0 1 1 0 19 1 2 51 0 1 1z"/></svg><svg class="h h12" viewBox="0 -85 100 100"><path d="M54-42l-35 0 1 21 2 1 15-1 25-3 1 2 0 3 0 1-10 2-17 1-16 1-5-2-2-2-1-5 0-45 1-5 2-1 3-1 37 0 1 5-1 1-34 0-1 0-1 1 0 21 35-1 1 1 0 4zM80 8l0 1-1 1-5 0-1-2 0-89 0-1 1-1 5 0 1 1 0 37 14 0 1 1 0 4-1 1-14 0z"/></svg>_<svg class="h h12" viewBox="0 -85 100 100"><path d="M73-59l-6 5-9 5 28 8 0 1-2 4-12-3-22-6-21 8-13 2-2 0-1-4 1-2 13-3 18-6 16-7 4-3 1-2-1-1-44 0 0-1 0-4 0-1 47 0 6 1 3 1 0 4zM48 9l-2-1 0-28-39 0-1-1 0-5 86 0 2 0 0 5-1 1-40 0 0 28-1 1zM63-83l1 1 0 1 0 4-1 0-27 1-2-1 0-4 1-2z"/></svg><svg class="h h12" viewBox="0 -85 100 100"><path d="M35-76l-1 24 1 6 6 13 6 9 5 6 0 1-3 3-2 0-9-12-7-13-3 7-4 7-8 10-3 3-2 1-4-4 10-12 4-6 2-7 4-15 1-21 1-1 5 0zM62-48l1-32 0-1 5 0 1 0 0 1 0 84 0 1-1 1-5 0-1-2 0-46-14 0-2-1 0-4 1-1zM87 8l-1 1-1 1-4 0-1-2 0-89 1-1 1-1 4 0 1 2z"/></svg><svg class="h h12" viewBox="0 -85 100 100"><path d="M73-59l-6 5-9 5 28 8 0 1-2 4-12-3-22-6-21 8-13 2-2 0-1-4 1-2 13-3 18-6 16-7 4-3 1-2-1-1-44 0 0-1 0-4 0-1 47 0 6 1 3 1 0 4zM48 9l-2-1 0-28-39 0-1-1 0-5 86 0 2 0 0 5-1 1-40 0 0 28-1 1zM63-83l1 1 0 1 0 4-1 0-27 1-2-1 0-4 1-2z"/></svg><svg class="h h12" viewBox="0 -85 100 100"><path d="M81-6l-2 6-3 4-4 2-10 3-12 1-14-1-9-3-6-5-2-4 0-3 1-7 4-3 4-2 9-3 13-1 12 1 10 3 4 2 3 3zM73-70l-6 5-8 4 28 7 0 1-2 4-13-2-21-6-21 7-14 3-2-1-1-4 1-1 15-3 18-6 12-6 7-4 1-1-2-1-44 0 0-2 0-4 47 0 6 0 2 1 1 3 0 2zM74-6l-2-4-4-3-7-2-11-1-9 0-8 2-6 4-1 4 1 4 6 4 8 1 9 1 9-1 7-1 6-4zM52-50l1 1 0 13 40 1 1 1 0 3-1 1-85 0-2 0 0-4 1-1 39-1 0-13 1-1z"/></svg>_1.2_<svg class="h h12" viewBox="0 -85 100 100"><path d="M41-76l-1 13-2 11 2 4 2 7 6 9 7 8 6 6 0 1-4 4-4-3-10-12-8-13-3 8-5 8-9 11-4 4-1 0-3-3 0-2 8-9 5-7 4-6 2-8 3-12 2-20 1-1 5 0zM84 8l-1 1-1 1-5 0 0-2 0-89 0-1 1-1 5 0 1 2z"/></svg><svg class="h h12" viewBox="0 -85 100 100"><path d="M74-56l-7 6-10 6 15 4 14 4 1 0-2 5-12-3-23-7-21 8-13 3-2 0-1-4 1-1 15-4 13-5 12-6 11-7 2-2-1-1-1 0-44 0-1-2 0-4 1 0 47 0 6 0 3 2 0 3zM52-30l1 1 0 17 40 0 1 1 0 4-1 1-85 0-2-1 0-4 1-1 39 0 0-17 1-1zM63-81l1 1 0 1 0 4-1 0-27 1-2-1 0-4 1-2z"/></svg>30<svg class="h h12" viewBox="0 -85 100 100"><path d="M28-46l-5 0-2-3-1-31 1-1 5 0 1 0 0 11 46 0 0-11 1 0 5 0 1 29-1 3-1 2-2 1-4 0zM48-8l-1-2 0-20-40 0-1-1 0-4 1-1 85 0 2 1 0 4-1 1-39 0 0 21-1 0zM27-64l0 11 2 1 41 0 2 0 1-1 0-11zM83 7l-1 1-55 0-4-1-3-1-1-4 0-21 1-1 5 0 1 1 0 19 1 2 55 0 1 1z"/></svg></div>
<svg style="left:11px;top:587px" width="10" height="1" viewBox="0 0 10 1"><path d="M0 0.5H10" stroke="#808080" stroke-dasharray="1 1"/></svg>
<svg style="left:21px;top:580px" width="14" height="12" viewBox="0 0 14 12"><path d="M3.5 0L7 3.5H5V10H2V3.5H0Z" fill="#ee1111"/><path d="M9 2H12V8.5H14L10.5 12L7 8.5H9Z" fill="#1155dd"/></svg>
<div class="t" style="left:42px;top:579px;font-size:12px">Z_ETF<svg class="h h12" viewBox="0 -85 100 100"><path d="M84-17l-1 1-1 0-5 0 0-1 0-64 0-1 1-1 5 0 1 2zM86 7l-1 1-50 0-5-1-2-2-1-3 0-22 2-1 4 0 1 1 0 20 1 2 50 0 1 1zM59-55l0 5-2 5-2 4-3 3-7 5-5 1-5 1-9-2-4-2-3-3-5-7-2-5 0-5 0-5 2-5 2-4 3-3 3-3 4-2 9-2 9 2 8 5 3 3 2 4 1 5zM52-55l-1-7-4-6-5-3-7-1-6 1-5 3-4 6-1 7 1 7 3 6 6 3 6 1 7-1 5-3 4-6z"/></svg><svg class="h h12" viewBox="0 -85 100 100"><path d="M21-17l-6 0-1-2-1-2 1-56 5-1 1 2 0 23 30 0 0-23 1-1 4-1 2 2 0 26 20 0 0-32 1-1 5 1 0 91-6 1 0-2 0-52-20 0 0 23-1 2-2 2-5 0zM20-47l0 22 0 2 29 0 1-2 0-22z"/></svg><svg class="h h12" viewBox="0 -85 100 100"><path d="M54-76l-2 5 1 1 5 10 7 8 7 5 7 4 8 3 0 2-2 4-1 0-6-2-12-7-9-8-8-11-5 9-10 10-10 7-7 3-2 0-2-3 0-2 13-7 8-7 4-5 4-5 2-6 3-10 5 0zM92-12l2 1 0 4-2 1-84 0-2-2 0-3 2-1z"/></svg><svg class="h h12" viewBox="0 -85 100 100"><path d="M67-36l-1 1-3 1-19 2-23 1-5-2-1-2-1-5 0-30 0-5 2-1 3-1 37 0 1 5-1 1-35 0 0 32 0 1 2 0 12 0 16-1 14-2 1 1zM80-16l0 1-1 0-5 0-1-1 0-65 0-1 1-1 5 0 1 1 0 29 14 0 1 2 0 3-1 1-14 0zM84 7l-1 1-51 0-5-1-2-2-1-3 0-21 2-1 4 0 1 1 0 19 1 2 51 0 1 1z"/></svg><svg class="h h12" viewBox="0 -85 100 100"><path d="M54-42l-35 0 1 21 2 1 15-1 25-3 1 2 0 3 0 1-10 2-17 1-16 1-5-2-2-2-1-5 0-45 1-5 2-1 3-1 37 0 1 5-1 1-34 0-1 0-1 1 0 21 35-1 1 1 0 4zM80 8l0 1-1 1-5 0-1-2 0-89 0-1 1-1 5 0 1 1 0 37 14 0 1 1 0 4-1 1-14 0z"/></svg>_1.0</div>
<svg style="left:11px;top:605px" width="10" height="1" viewBox="0 0 10 1"><path d="M0 0.5H10" stroke="#808080" stroke-dasharray="1 1"/></svg>
<svg style="left:21px;top:598px" width="14" height="12" viewBox="0 0 14 12"><path d="M3.5 0L7 3.5H5V10H2V3.5H0Z" fill="#ee1111"/><path d="M9 2H12V8.5H14L10.5 12L7 8.5H9Z" fill="#1155dd"/></svg>
<div style="position:absolute;left:39px;top:595px;width:141px;height:18px;background:#f0f0f0"></div>
<div class="t" style="left:42px;top:597px;font-weight:bold;font-size:12px;letter-spacing:-0.25px">Z_ETF<svg class="h h12" viewBox="0 -85 100 100"><path d="M88 8l-2 1-52 0-5-1-1-2-1-2 0-25 1-1 9 0 1 1 0 19 1 1 47 0 2 1zM84-18l0 1-1 0-9 0-1-1 0-65 1-1 9 0 1 1zM59-56l-1 5-1 4-2 5-3 3-4 3-4 2-5 2-5 0-5 0-5-2-7-5-3-3-2-5-1-4-1-5 1-5 1-4 5-8 3-3 4-2 5-2 5 0 5 0 5 2 4 2 4 3 5 8 1 4zM47-56l-1-5-2-5-4-3-6-1-5 1-4 3-3 5-1 5 1 6 3 4 4 3 5 1 6-1 4-3 2-4z"/></svg><svg class="h h12" viewBox="0 -85 100 100"><path d="M58-24l0 3-2 3-4 1-32 0-4 0-2-1-1-2-1-4 1-55 9 0 2 1 0 22 22 0 1-22 1-1 9 0 1 1 0 26 17 0 0-31 1-1 10 0 0 94-1 1-9 0-1-1 0-52-17 0zM46-47l-22 0 0 20 22 0z"/></svg><svg class="h h12" viewBox="0 -85 100 100"><path d="M17-33l-1 0-1-1-4-6 0-1 14-7 10-8 3-4 3-5 2-6 1-7 1-2 9 1 2 0-1 7 1 2 2 5 5 6 4 4 7 5 8 4 6 2 1 1-5 8-6-1-9-4-7-5-7-7-5-6-5 9-8 7-9 5zM93-16l2 2 0 7-2 1-87 0-1-2 0-7 1-1z"/></svg><svg class="h h12" viewBox="0 -85 100 100"><path d="M65-37l-1 1-3 1-18 3-23 0-5-1-2-2 0-3 0-34 0-3 1-2 2-1 3 0 37 0 0 8-1 1-30 1-1 25 2 2 9 0 13-1 14-2 2 1zM85 8l-1 1-53 0-5-1-2-2-1-2 0-24 2-1 8 0 1 1 1 18 0 1 49 0 1 1zM96-45l-1 1-14 0 0 26-1 1-10 0 0-67 11 0 0 30 15 1 0 1z"/></svg><svg class="h h12" viewBox="0 -85 100 100"><path d="M64-20l-1 2-2 1-19 3-21 0-6-1-2-1-1-2 0-3 0-49 0-3 1-2 2-1 3-1 38 1 0 8-1 1-32 0 0 17 31-1 1 1 0 7 0 1-1 1-31 1 0 14 1 2 9 0 14-1 15-2 1 2zM96-39l-1 1-14 0 0 48-1 1-10 0 0-2 0-92 1-1 9 0 1 1 0 35 15 1 0 1z"/></svg>_1.0<svg class="h h12" viewBox="0 -85 100 100"><path d="M80-54l-1 4-2 2-3 1-47 0-5-1-2-2 0-2 0-26 3-3 4-1 45 0 6 1 1 2 1 3zM69-71l-1-1-1 0-36 0 0 15 37 0zM95-30l-2 1-37 0 0 19-1 1-9 0-1-1 0-1 0-18-39 0-1-1 0-7 1-1 87 0 2 1zM84 7l-2 1-56 0-5-1-2-1-1-3 0-23 2-1 8 0 2 0 0 18 0 2 53 0 1 1z"/></svg><svg class="h h12" viewBox="0 -85 100 100"><path d="M86 9l-1 1-1 1-9 0-1-1 0-93 1-1 9 0 1 0 1 1zM36-69l-5 1-4 3-3 4-1 6 1 6 3 4 4 3 5 1 6-1 4-3 3-4 1-6-1-6-3-4-4-3zM36-78l10 1 8 5 3 3 2 4 1 5 1 5-1 5-1 4-2 4-3 4-8 4-10 2-9-2-8-4-3-4-2-4-1-4-1-5 1-5 1-5 2-4 3-3 4-3 4-2zM6-18l1-1 1 0 31-1 29-3 1 1 1 7-1 2-17 2-25 1-19 0-2-1z"/></svg></div>
<div style="position:absolute;left:0px;top:615px;width:310px;height:7px;background:linear-gradient(#eceef1,#d0d3d8);border-left:1px solid #5a6470;border-right:1px solid #5a6470"></div>
<svg style="left:146px;top:617px" width="18" height="2" viewBox="0 0 18 2"><path d="M0 1H18" stroke="#555" stroke-dasharray="2 1.5"/></svg>
<div style="position:absolute;left:0px;top:622px;width:310px;height:33px;background:linear-gradient(#f6f7f8 0px,#e5e7ea 12px,#c6c9ce 12px,#dadce0 31px);border:1px solid #4a5260"></div>
<div class="t" style="left:35px;top:631px;font-size:12px;font-weight:bold;color:#2e3034"><svg class="h h12" viewBox="0 -85 100 100"><path d="M14-13l-2 0-1-1-4-6 0-1 13-10 10-11 8-11 3-6 2-7 0-1-1 0-28 0 0-2 0-7 34-1 3 1 3 1 2 3-1 6-3 10-6 11 9 11 11 9 0 2 0 1-5 5-3 0-9-8-9-11-12 12zM86 9l-1 1-1 1-9 0-1-1 0-93 1-1 9 0 1 0 1 1z"/></svg><svg class="h h12" viewBox="0 -85 100 100"><path d="M85-34l-1 1-13 1 0 17 23 0 1 1 0 7-1 1-88 0-1 0 0-8 1-1 23 0 0-17-13 0-1-2 0-6 1-1 12-1 0-26-11-1 0-1 0-6 1-1 64 0 1 1-1 7-10 1 0 26 12 1 1 1zM39-68l0 26 22 0 0-26zM59-15l0-17-19 0 0 17z"/></svg></div>
<div style="position:absolute;left:0px;top:654px;width:310px;height:33px;background:linear-gradient(#f6f7f8 0px,#e5e7ea 12px,#c6c9ce 12px,#dadce0 31px);border:1px solid #4a5260"></div>
<div class="t" style="left:35px;top:663px;font-size:12px;font-weight:bold;color:#2e3034"><svg class="h h12" viewBox="0 -85 100 100"><path d="M85 2l0 3-1 3-4 1-46 0-5-1-2-1-1-5 0-21 1-4 2-2 4-1 45 0 5 1 2 2 0 2zM74-16l0-1-1 0-35 0 0 17 36 0zM16-29l-2 0-1 0-2-7 0-1 12-7 9-7 7-8 2-4 2-6-1-1-28-1-1-1 1-8 34 0 4 0 3 1 1 4 0 6-3 7-6 11-10 10-6 5zM55-52l0-7 1-1 18 0 0-23 1-1 10 0 0 53-10 0-1-1 0-19-18 0z"/></svg><svg class="h h12" viewBox="0 -85 100 100"><path d="M78-83l1-1 1 0 8 0 2 1 0 54-2 1-8 0-2-1 0-22-9 0 0 22-10 0-1-1 1-52 1-1 9 1 0 21 9 0zM90 9l-2 1-8 0-2 0 0-23 0-1-52 0-1-1 0-8 2-1 56 0 4 1 2 2 1 2zM14-32l-2 1-1-1-5-5 1-2 10-9 6-9 3-11 1-12 1-1 9 1 1 1 0 4-1 11 1 3 5 9 5 5 6 4 0 1-4 6-2 1-9-7-7-9-8 11z"/></svg></div>
<div style="position:absolute;left:0px;top:686px;width:310px;height:33px;background:linear-gradient(#f6f7f8 0px,#e5e7ea 12px,#c6c9ce 12px,#dadce0 31px);border:1px solid #4a5260"></div>
<div class="t" style="left:35px;top:695px;font-size:12px;font-weight:bold;color:#2e3034"><svg class="h h12" viewBox="0 -85 100 100"><path d="M70-8l-1-5-4-3-6-2-7-1-7 1-6 2-3 3-1 5 1 4 4 3 5 2 7 1 7-1 6-2 4-3zM82-9l0 4-2 4-3 3-3 3-10 4-12 2-12-2-9-4-4-3-2-3-2-4 0-4 0-4 2-3 2-4 4-3 9-4 12-1 12 1 10 4 3 3 3 3 2 4zM96-52l-1 2-14 0 0 20-1 0-9 0-1 0 0-54 11 0 0 24 15 0 0 1zM14-28l-2 0-3-6 0-2 12-7 9-7 7-8 3-5 2-6-1-1-1 0-28 0 0-2 0-7 35-1 4 1 2 1 2 3-1 6-2 7-7 12-10 10-6 5z"/></svg><svg class="h h12" viewBox="0 -85 100 100"><path d="M19-32l-3-1-2-6 0-2 15-5 13-6 10-7 9-8-2-1-38 0-1-1 0-8 49 0 4 0 3 2 1 2 0 3-2 4-5 5-8 8 25 10 0 2-3 7-2 0-9-3-20-9-17 8zM95-7l-2 1-87 0-1-1 0-7 0-1 1 0 38 0 0-19 1-1 9 0 2 1 0 19 38 0 1 1z"/></svg></div>
<div style="position:absolute;left:0px;top:718px;width:310px;height:33px;background:linear-gradient(#fedba8 0px,#fbbb72 12px,#fda83a 12px,#fddd78 31px);border:1px solid #4a5260"></div>
<div class="t" style="left:35px;top:727px;font-size:12px;font-weight:bold;color:#1a1a1a"><svg class="h h12" viewBox="0 -85 100 100"><path d="M16-11l-1 0-2-1-5-5 0-1 9-11 5-7 3-7 3-8 2-9 2-19 1 0 9 0 1 1 0 6-2 16 2 7 4 7 4 6 4 6 8 7 0 2-5 6-2 1-1-1-5-5-6-6-4-6-4-7-4 8-5 8-5 6zM86 9l-1 1-1 1-9 0-1-1 0-93 1-1 9 0 1 0 1 1z"/></svg><svg class="h h12" viewBox="0 -85 100 100"><path d="M17-33l-1 0-1-1-4-6 0-1 14-7 10-8 3-4 3-5 2-6 1-7 1-2 9 1 2 0-1 7 1 2 2 5 5 6 4 4 7 5 8 4 6 2 1 1-5 8-6-1-9-4-7-5-7-7-5-6-5 9-8 7-9 5zM93-16l2 2 0 7-2 1-87 0-1-2 0-7 1-1z"/></svg><svg class="h h12" viewBox="0 -85 100 100"><path d="M90 2l-1 5-2 1-3 1-54 0-2-1-2-4 1-23 2-3 5-1 52 1 2 1 2 4zM53-36l0 1-3 1-15 2-17 1-4-1-2-1-1-3-1-2 0-35 1-3 1-2 2-1 3 0 29 0 0 7-1 2-21 0-2 1 0 9 20 0 0 1 0 6-1 1-19 1 0 8 1 2 6 1 10-1 12-2 1 1zM60-81l0-1 1-1 9 0 1 1 0 53-1 1-9 0-1-1 0-21-11 0-1-1 0-7 0-1 12-1zM78-83l1-1 1 0 8 0 2 1 0 55-1 1-9 0-2-1zM78-12l0-1-1 0-39 0 0 12 1 1 39 0z"/></svg></div>
<div style="position:absolute;left:0px;top:750px;width:310px;height:33px;background:linear-gradient(#f6f7f8 0px,#e5e7ea 12px,#c6c9ce 12px,#dadce0 31px);border:1px solid #4a5260"></div>
<div class="t" style="left:35px;top:759px;font-size:12px;font-weight:bold;color:#2e3034"><svg class="h h12" viewBox="0 -85 100 100"><path d="M81-6l0 3-2 4-2 3-4 2-10 4-13 1-14-1-10-4-3-2-3-3-1-4-1-3 1-4 1-3 3-3 3-3 10-3 14-2 13 2 10 3 4 3 2 3 2 3zM16-48l-1 0-1-1-2-6 1-2 11-2 15-5 14-5 5-2 1-2-38 0-1-1 0-7 1-1 48 0 5 0 2 2 1 1 0 5-6 5-9 6 26 5 1 1-2 7-2 1-16-3-19-5-16 5zM95-31l-2 1-87 0-1-1 0-7 0-1 1 0 38 0 0-12 10 0 1 0 1 1 0 11 37 0 2 1zM50-15l-12 2-3 1-4 3-1 1 0 3 2 3 3 2 6 2 4 0 14 0 6-2 2-2 3-3 0-3-1-1-4-3-6-2z"/></svg><svg class="h h12" viewBox="0 -85 100 100"><path d="M80-56l-1 4-3 2-20 1 0 10 38 0 1 1 0 7-1 2-88 0-1-1 0-8 1-1 38 0 0-10-19 0-3-1-2-2 0-4 0-21 1-3 3-2 48 0 6 1 1 1 1 3zM80 9l-1 2-9 0-1-1 0-21-1-1-50 0-1-1 0-8 2-1 55 0 4 1 2 1 0 3zM69-71l-1-1-1-1-35 0-1 14 1 0 36 0z"/></svg><svg class="h h12" viewBox="0 -85 100 100"><path d="M85 2l0 3-1 3-4 1-46 0-5-1-2-1-1-5 0-21 1-4 2-2 4-1 45 0 5 1 2 2 0 2zM74-16l0-1-1 0-35 0 0 17 36 0zM16-29l-2 0-1 0-2-7 0-1 12-7 9-7 7-8 2-4 2-6-1-1-28-1-1-1 1-8 34 0 4 0 3 1 1 4 0 6-3 7-6 11-10 10-6 5zM55-52l0-7 1-1 18 0 0-23 1-1 10 0 0 53-10 0-1-1 0-19-18 0z"/></svg><svg class="h h12" viewBox="0 -85 100 100"><path d="M78-83l1-1 1 0 8 0 2 1 0 54-2 1-8 0-2-1 0-22-9 0 0 22-10 0-1-1 1-52 1-1 9 1 0 21 9 0zM90 9l-2 1-8 0-2 0 0-23 0-1-52 0-1-1 0-8 2-1 56 0 4 1 2 2 1 2zM14-32l-2 1-1-1-5-5 1-2 10-9 6-9 3-11 1-12 1-1 9 1 1 1 0 4-1 11 1 3 5 9 5 5 6 4 0 1-4 6-2 1-9-7-7-9-8 11z"/></svg></div>
<div style="position:absolute;left:0px;top:782px;width:310px;height:33px;background:linear-gradient(#f6f7f8 0px,#e5e7ea 12px,#c6c9ce 12px,#dadce0 31px);border:1px solid #4a5260"></div>
<div class="t" style="left:35px;top:791px;font-size:12px;font-weight:bold;color:#2e3034"><svg class="h h12" viewBox="0 -85 100 100"><path d="M96-40l-1 2-14 0 0 48-1 1-9 0-1-2 0-92 1-1 10 0 0 36 15 0 0 2zM14-11l-1 0-2-1-5-4 0-2 9-11 5-7 3-7 3-8 2-9 1-19 2 0 9 0 1 1 0 6-2 16 1 5 3 7 4 6 6 8 7 7 0 2-5 6-1 1-2-1-10-11-4-6-4-7-4 8-5 8-5 6z"/></svg><svg class="h h12" viewBox="0 -85 100 100"><path d="M95-30l-2 1-87 0-1-1 0-6 1-2 22 0 0-14-4-2-3-3-3-6 1-6 2-3 2-3 6-4 8-3 6 0 11-1 6 1 8 2 7 3 4 5 3 5 0 4-3 6-3 3-4 3 0 13 22 0 1 1zM82-6l-1 4-1 3-3 3-4 2-10 4-13 1-14-1-10-4-3-2-3-3-1-3-1-4 1-4 1-3 3-3 3-2 10-4 14-1 13 1 10 4 4 2 3 3 1 3zM50-74l-8 1-7 2-4 4-1 3 1 2 2 2 4 2 9 2 10 0 5-2 5-1 2-2 2-3 0-3-2-1-2-2-5-2zM50-14l-11 1-4 1-3 2-2 3 0 3 2 2 3 2 4 1 6 1 12 0 8-2 3-2 2-2 0-3 0-1-5-4-6-2zM50-47l-11-1 0 10 21 0 0-10z"/></svg><svg class="h h12" viewBox="0 -85 100 100"><path d="M12-13l-2 0-1-1-4-5 0-2 13-10 10-11 8-11 3-6 2-7 0-1-2 0-27 0-1-2 1-7 1-1 33 0 3 1 3 1 2 3-1 6-4 11-5 11 9 10 10 9 1 2 0 1-5 5-3 0-9-8-10-11-11 12zM96-39l-1 1-14 0 0 48-1 1-9 0-1-2 0-92 1-1 9 0 1 1 0 35 15 1 0 1z"/></svg><svg class="h h12" viewBox="0 -85 100 100"><path d="M63-63l-1 1-53 0-2-1 0-6 2-2 53 0 1 2zM50-76l0 1-1 1-27 0-1-2 0-6 2-1 26 0 1 1zM70-9l0-1-1-1-35 0 0 1 0 9 1 1 34 0 1-1zM81 2l-1 5-1 1-3 1-50 0-2-1-2-4 1-20 1-2 4-2 49 1 3 1 1 4zM96-48l-1 1-14 0 0 22-1 1-10 0 0-60 11 0 0 28 15 0 0 1zM36-50l-4 1-5 2-2 3 0 3 2 3 3 3 4 1 4 0 4-1 3-3 2-3 0-3-2-3-3-2zM36-59l9 1 3 2 5 3 4 6 1 7-3 6-5 5-7 3-9 1-8-2-7-4-4-6 0-7 1-5 5-5 7-4z"/></svg><svg class="h h12" viewBox="0 -85 100 100"><path d="M95-26l-2 2-37 0-1 33-1 1-9 0-1 0 0-1 0-33-38 0-1-1 0-7 1-2 87 0 2 2zM17-43l-2 0-4-7 1-1 13-6 10-6 4-4 3-5 1-5 2-6 1-1 10 0 0 7 0 2 3 4 4 5 11 7 14 5 1 1-4 9-6-1-8-3-9-5-7-6-4-5-6 7-8 6-9 5z"/></svg></div>
<svg style="left:6px;top:627px" width="24" height="24" viewBox="0 0 24 24"><path d="M0.5 0.5H18L23.5 5V23.5H0.5Z" fill="#f4f6fb" stroke="#4a5ab0"/><rect x="1.5" y="1.5" width="16" height="4" fill="#6a8ae0"/><rect x="3" y="2.5" width="9" height="2" fill="#fff"/><path d="M18 0.5V5H23.5" fill="#fff" stroke="#4a5ab0"/><path d="M3 8V21H22" stroke="#111" fill="none"/><path d="M5 14L9 10L12 13L16 8L21 10" stroke="#e02020" fill="none" stroke-width="1.3"/><rect x="5" y="16" width="3" height="4" fill="#1a4ac0"/><rect x="10" y="14" width="3" height="6" fill="#c01818"/><rect x="15" y="13" width="3" height="7" fill="#c01818"/><rect x="19" y="15" width="2" height="5" fill="#1a4ac0"/></svg>
<svg style="left:6px;top:659px" width="24" height="24" viewBox="0 0 24 24"><path d="M0.5 0.5H18L23.5 5V23.5H0.5Z" fill="#f4f6fb" stroke="#4a5ab0"/><rect x="1.5" y="1.5" width="16" height="4" fill="#6a8ae0"/><rect x="3" y="2.5" width="9" height="2" fill="#fff"/><path d="M18 0.5V5H23.5" fill="#fff" stroke="#4a5ab0"/><rect x="3" y="11" width="3" height="11" fill="#1a5ad8"/><rect x="3" y="8" width="3" height="2" fill="#e02020"/><rect x="9" y="8" width="3" height="11" fill="#1a5ad8"/><rect x="9" y="20" width="3" height="2" fill="#e02020"/><rect x="15" y="9" width="3" height="10" fill="#1a5ad8"/><rect x="20" y="7" width="2" height="12" fill="#1a5ad8"/><rect x="20" y="20" width="2" height="2" fill="#e02020"/></svg>
<svg style="left:6px;top:691px" width="24" height="24" viewBox="0 0 24 24"><path d="M0.5 0.5H18L23.5 5V23.5H0.5Z" fill="#f4f6fb" stroke="#4a5ab0"/><rect x="1.5" y="1.5" width="16" height="4" fill="#6a8ae0"/><rect x="3" y="2.5" width="9" height="2" fill="#fff"/><path d="M18 0.5V5H23.5" fill="#fff" stroke="#4a5ab0"/><rect x="4" y="16" width="3" height="6" fill="#1a4ac0"/><rect x="9" y="13" width="3" height="7" fill="#30e0f0"/><rect x="14" y="10" width="3" height="8" fill="#30e0f0"/><rect x="19" y="7" width="3" height="9" fill="#1a4ac0"/></svg>
<svg style="left:6px;top:723px" width="24" height="24" viewBox="0 0 24 24"><path d="M0.5 0.5H18L23.5 5V23.5H0.5Z" fill="#f4f6fb" stroke="#4a5ab0"/><rect x="1.5" y="1.5" width="16" height="4" fill="#6a8ae0"/><rect x="3" y="2.5" width="9" height="2" fill="#fff"/><path d="M18 0.5V5H23.5" fill="#fff" stroke="#4a5ab0"/><path d="M6 8L11 13H8.5V22H3.5V13H1Z" fill="#e8200e"/><path d="M14 9H19V17H22L16.5 23L11 17H14Z" fill="#1a6ae0"/></svg>
<svg style="left:6px;top:755px" width="24" height="24" viewBox="0 0 24 24"><path d="M0.5 0.5H18L23.5 5V23.5H0.5Z" fill="#f4f6fb" stroke="#4a5ab0"/><rect x="1.5" y="1.5" width="16" height="4" fill="#6a8ae0"/><rect x="3" y="2.5" width="9" height="2" fill="#fff"/><path d="M18 0.5V5H23.5" fill="#fff" stroke="#4a5ab0"/><rect x="3.5" y="7.5" width="14" height="12" fill="#dfe8f8" stroke="#3a5ab0"/><circle cx="11" cy="14" r="5" fill="#fff" stroke="#333" stroke-width="1.5"/><circle cx="11" cy="14" r="3" fill="#a8e0f8"/><path d="M15 18L20 22" stroke="#e08a20" stroke-width="2.2"/></svg>
<svg style="left:6px;top:787px" width="24" height="24" viewBox="0 0 24 24"><path d="M0.5 0.5H18L23.5 5V23.5H0.5Z" fill="#f4f6fb" stroke="#4a5ab0"/><rect x="1.5" y="1.5" width="16" height="4" fill="#6a8ae0"/><rect x="3" y="2.5" width="9" height="2" fill="#fff"/><path d="M18 0.5V5H23.5" fill="#fff" stroke="#4a5ab0"/><path d="M3 12L8 9L12 12L17 8L22 10" stroke="#e02020" fill="none" stroke-width="1.3"/><text x="2" y="22" font-size="12" font-weight="bold" font-style="italic" fill="#1a2a8a" font-family="Liberation Serif">f</text><path d="M10 14L21 21M10 21L21 14M10 14V21M21 14V21" stroke="#1a2a8a" fill="none" stroke-width="1.3"/></svg>
<div style="position:absolute;left:317px;top:85px;width:1113px;height:730px;background:#f0f0f0;border-top:1px solid #8a8a8a;border-left:2px solid #8a8a8a;border-right:2px solid #8a8a8a;border-bottom:2px solid #8a8a8a"></div>
<div style="position:absolute;left:319px;top:86px;width:1109px;height:1px;background:#fff"></div>
<div style="position:absolute;left:318px;top:87px;width:218px;height:21px;background:linear-gradient(90deg,#fba64a,#f9c690 55%,#f8e2cc)"></div>
<svg style="left:323px;top:90px" width="15" height="14" viewBox="0 0 15 14"><path d="M4 0L8 4.5H5.5V11H2.5V4.5H0Z" fill="#d84a10" stroke="#fff" stroke-width="0.6"/><path d="M9 3H12V9H14.5L10.5 13L6.5 9H9Z" fill="#1a6ad8" stroke="#fff" stroke-width="0.6"/></svg>
<div class="t" style="left:341px;top:91px;font-size:12px">Z_ETF<svg class="h h12" viewBox="0 -85 100 100"><path d="M84-17l-1 1-1 0-5 0 0-1 0-64 0-1 1-1 5 0 1 2zM86 7l-1 1-50 0-5-1-2-2-1-3 0-22 2-1 4 0 1 1 0 20 1 2 50 0 1 1zM59-55l0 5-2 5-2 4-3 3-7 5-5 1-5 1-9-2-4-2-3-3-5-7-2-5 0-5 0-5 2-5 2-4 3-3 3-3 4-2 9-2 9 2 8 5 3 3 2 4 1 5zM52-55l-1-7-4-6-5-3-7-1-6 1-5 3-4 6-1 7 1 7 3 6 6 3 6 1 7-1 5-3 4-6z"/></svg><svg class="h h12" viewBox="0 -85 100 100"><path d="M21-17l-6 0-1-2-1-2 1-56 5-1 1 2 0 23 30 0 0-23 1-1 4-1 2 2 0 26 20 0 0-32 1-1 5 1 0 91-6 1 0-2 0-52-20 0 0 23-1 2-2 2-5 0zM20-47l0 22 0 2 29 0 1-2 0-22z"/></svg><svg class="h h12" viewBox="0 -85 100 100"><path d="M54-76l-2 5 1 1 5 10 7 8 7 5 7 4 8 3 0 2-2 4-1 0-6-2-12-7-9-8-8-11-5 9-10 10-10 7-7 3-2 0-2-3 0-2 13-7 8-7 4-5 4-5 2-6 3-10 5 0zM92-12l2 1 0 4-2 1-84 0-2-2 0-3 2-1z"/></svg><svg class="h h12" viewBox="0 -85 100 100"><path d="M67-36l-1 1-3 1-19 2-23 1-5-2-1-2-1-5 0-30 0-5 2-1 3-1 37 0 1 5-1 1-35 0 0 32 0 1 2 0 12 0 16-1 14-2 1 1zM80-16l0 1-1 0-5 0-1-1 0-65 0-1 1-1 5 0 1 1 0 29 14 0 1 2 0 3-1 1-14 0zM84 7l-1 1-51 0-5-1-2-2-1-3 0-21 2-1 4 0 1 1 0 19 1 2 51 0 1 1z"/></svg><svg class="h h12" viewBox="0 -85 100 100"><path d="M54-42l-35 0 1 21 2 1 15-1 25-3 1 2 0 3 0 1-10 2-17 1-16 1-5-2-2-2-1-5 0-45 1-5 2-1 3-1 37 0 1 5-1 1-34 0-1 0-1 1 0 21 35-1 1 1 0 4zM80 8l0 1-1 1-5 0-1-2 0-89 0-1 1-1 5 0 1 1 0 37 14 0 1 1 0 4-1 1-14 0z"/></svg>_1.0<svg class="h h12" viewBox="0 -85 100 100"><path d="M20-73l1-3 1-2 4-2 51 1 2 1 1 3-1 25-1 2-4 1-51 0-2-2-1-2zM30-74l-2 1-1 1 0 16 1 3 42 0 3-1 0-17-1-2zM48-9l-1-2 0-20-40 0-1-1 0-4 1-1 85 0 2 1 0 4-1 1-39 0 0 21-1 1zM83 7l-1 1-55 0-4-1-3-1-1-4 0-23 1-1 5 1 1 0 0 21 1 2 55 0 1 1z"/></svg><svg class="h h12" viewBox="0 -85 100 100"><path d="M84 8l-1 1-1 1-5 0 0-2 0-89 0-1 1-1 5 0 1 2zM61-54l-1 5-1 4-2 4-3 3-8 5-9 1-10-1-7-5-5-7-1-4-1-5 1-5 1-5 2-4 3-3 7-4 10-2 9 2 8 4 2 3 3 4 1 5zM54-54l-2-8-3-5-6-3-6-1-7 1-5 3-4 6-1 7 1 7 4 5 5 3 7 1 6-1 6-3 3-5zM70-21l2 1 0 4-6 1-34 4-22 0-2 0-1-1 0-4 2-1 32-1z"/></svg>&lt;<svg class="h h12" viewBox="0 -85 100 100"><path d="M41-76l-1 13-2 11 2 4 2 7 6 9 7 8 6 6 0 1-4 4-4-3-10-12-8-13-3 8-5 8-9 11-4 4-1 0-3-3 0-2 8-9 5-7 4-6 2-8 3-12 2-20 1-1 5 0zM84 8l-1 1-1 1-5 0 0-2 0-89 0-1 1-1 5 0 1 2z"/></svg>...</div>
<svg style="left:523px;top:93px" width="8" height="8" viewBox="0 0 8 8"><path d="M0.5 0.5L7.5 7.5M7.5 0.5L0.5 7.5" stroke="#000" stroke-width="1.6"/></svg>
<div style="position:absolute;left:536px;top:89px;width:1px;height:17px;background:#b8b8b8"></div>
<svg style="left:543px;top:90px" width="15" height="15" viewBox="0 0 15 15"><rect x="0" y="0" width="14" height="14" fill="none"/><path d="M0.5 1V13.5H14" stroke="#111" fill="none"/><path d="M2 8L5 4L8 7L12 2" stroke="#e02020" fill="none" stroke-width="1.2"/><rect x="3" y="9" width="2" height="4" fill="#1a4ac0"/><rect x="6" y="8" width="2" height="5" fill="#c01818"/><rect x="9" y="9" width="2" height="4" fill="#1a4ac0"/><rect x="12" y="7" width="2" height="6" fill="#1a4ac0"/></svg>
<div class="t" style="left:560px;top:91px;font-size:12px">Z_IBS&lt;<svg class="h h12" viewBox="0 -85 100 100"><path d="M63-18l-2 1-7-6-13-15-6 6-9 9-11 9-2 0-3-4 0-1 15-12 11-11 7-12 3-6 2-8 0-1-2 0-30 0-1-1 0-5 34 0 4 0 3 2 0 4-2 8-3 6-6 12 10 12 10 9 0 1zM84 8l-1 1-1 1-5 0 0-2 0-89 0-1 1-1 5 0 1 2z"/></svg><svg class="h h12" viewBox="0 -85 100 100"><path d="M84-36l-1 1-1 0-13 0 0 23 24 0 1 1 0 4-1 1-85 0-2-1 0-4 1-1 24 0 0-23-14 0-2-1 0-3 1-1 13 0 0-30-11 0-1-2 0-3 1-1 63 0 1 4-1 2-11 0 0 30 13 0 1 0zM36-40l27 0 0-30-27 0zM37-12l25 0 0-23-25 0z"/></svg>&gt;</div>
<svg style="left:669px;top:93px" width="8" height="8" viewBox="0 0 8 8"><path d="M0.5 0.5L7.5 7.5M7.5 0.5L0.5 7.5" stroke="#000" stroke-width="1.6"/></svg>
<div style="position:absolute;left:682px;top:89px;width:1px;height:17px;background:#b8b8b8"></div>
<svg style="left:689px;top:90px" width="15" height="15" viewBox="0 0 15 15"><rect x="0" y="0" width="14" height="14" fill="none"/><path d="M0.5 1V13.5H14" stroke="#111" fill="none"/><path d="M2 8L5 4L8 7L12 2" stroke="#e02020" fill="none" stroke-width="1.2"/><rect x="3" y="9" width="2" height="4" fill="#1a4ac0"/><rect x="6" y="8" width="2" height="5" fill="#c01818"/><rect x="9" y="9" width="2" height="4" fill="#1a4ac0"/><rect x="12" y="7" width="2" height="6" fill="#1a4ac0"/></svg>
<div class="t" style="left:706px;top:91px;font-size:12px"><svg class="h h12" viewBox="0 -85 100 100"><path d="M82-39l-1 1-1 0-54 0-5 0-1-2-1-5 0-28 1-5 1-1 5-1 55 0 0 5-1 1-54 0 0 2 0 10 52 0 2 1 0 4-1 1-1 0-52 0 0 10 0 2 2 0 52 0 2 1zM48 9l-2-1 0-28-39 0-1-1 0-5 86 0 2 1 0 4-1 1-40 0 0 28-1 1z"/></svg><svg class="h h12" viewBox="0 -85 100 100"><path d="M60-18l-1 1-7-6-14-15-5 6-9 9-12 9-2 0-2-4 0-1 15-12 10-11 8-12 3-6 2-8 0-1-2 0-31 0-1-1 1-5 34 0 4 0 2 2 1 4-3 8-2 6-7 12 10 12 11 9 0 1zM80 8l0 1-1 1-5 0-1-2 0-89 0-1 1-1 5 0 1 1 0 37 14 0 1 1 0 4-1 1-14 0z"/></svg><svg class="h h12" viewBox="0 -85 100 100"><path d="M26-17l1-4 1-2 4-1 44 0 5 0 2 2 0 4 1 20-1 4-2 2-5 1-42 0-5-1-2-2-1-2zM36-18l-2 0-1 2 0 16 1 2 40 1 2-1 1-18-1-2zM40-79l-2 14 2 6 4 5 4 5 7 6 5 3 0 2-3 4-6-4-9-7-4-5-3-6-4 8-5 6-9 9-4 2-2 1-3-4 0-2 11-8 4-5 6-11 2-6 2-14 6 0zM84-31l-1 1-1 0-5 0 0-1 0-50 0-1 1-1 5 0 1 2z"/></svg><svg class="h h12" viewBox="0 -85 100 100"><path d="M84 8l-1 1-1 1-5 0 0-2 0-89 0-1 1-1 5 0 1 2zM22-13l-5-1-2-3-1-24 1-4 2-2 3-1 29 0 1-2 0-17-1-2-1 0-32 0-1-1 0-4 1-1 33 0 5 1 2 1 1 4 0 20-1 5-2 1-3 1-29 1-1 2 0 19 2 1 18 0 11-1 16-3 1 1 1 4-7 2-15 2-15 1z"/></svg><svg class="h h12" viewBox="0 -85 100 100"><path d="M40-78l-2 15 3 6 3 6 5 5 7 7 6 3 0 2-3 4-6-3-11-11-7-10-4 8-5 7-9 9-4 2-1 1-3-4 0-1 10-9 6-8 3-6 4-13 2-11 6 0zM77-59l0-23 0-1 5 0 1 1 1 1 0 64-1 1-1 0-5 0 0-1 0-36-21 0-1-1 0-4 0-1zM86 7l-1 1-50 0-5-1-2-2-1-3 0-22 2-1 4 0 1 1 0 20 1 2 50 0 1 1z"/></svg>&lt;<svg class="h h12" viewBox="0 -85 100 100"><path d="M63-18l-2 1-7-6-13-15-6 6-9 9-11 9-2 0-3-4 0-1 15-12 11-11 7-12 3-6 2-8 0-1-2 0-30 0-1-1 0-5 34 0 4 0 3 2 0 4-2 8-3 6-6 12 10 12 10 9 0 1zM84 8l-1 1-1 1-5 0 0-2 0-89 0-1 1-1 5 0 1 2z"/></svg><svg class="h h12" viewBox="0 -85 100 100"><path d="M84-36l-1 1-1 0-13 0 0 23 24 0 1 1 0 4-1 1-85 0-2-1 0-4 1-1 24 0 0-23-14 0-2-1 0-3 1-1 13 0 0-30-11 0-1-2 0-3 1-1 63 0 1 4-1 2-11 0 0 30 13 0 1 0zM36-40l27 0 0-30-27 0zM37-12l25 0 0-23-25 0z"/></svg>&gt;</div>
<svg style="left:815px;top:93px" width="8" height="8" viewBox="0 0 8 8"><path d="M0.5 0.5L7.5 7.5M7.5 0.5L0.5 7.5" stroke="#000" stroke-width="1.6"/></svg>
<div style="position:absolute;left:828px;top:89px;width:1px;height:17px;background:#b8b8b8"></div>
<svg style="left:834px;top:90px" width="15" height="14" viewBox="0 0 15 14"><path d="M4 0L8 4.5H5.5V11H2.5V4.5H0Z" fill="#d84a10" stroke="#fff" stroke-width="0.6"/><path d="M9 3H12V9H14.5L10.5 13L6.5 9H9Z" fill="#1a6ad8" stroke="#fff" stroke-width="0.6"/></svg>
<div class="t" style="left:852px;top:91px;font-size:12px">Z_ETF<svg class="h h12" viewBox="0 -85 100 100"><path d="M84-17l-1 1-1 0-5 0 0-1 0-64 0-1 1-1 5 0 1 2zM86 7l-1 1-50 0-5-1-2-2-1-3 0-22 2-1 4 0 1 1 0 20 1 2 50 0 1 1zM59-55l0 5-2 5-2 4-3 3-7 5-5 1-5 1-9-2-4-2-3-3-5-7-2-5 0-5 0-5 2-5 2-4 3-3 3-3 4-2 9-2 9 2 8 5 3 3 2 4 1 5zM52-55l-1-7-4-6-5-3-7-1-6 1-5 3-4 6-1 7 1 7 3 6 6 3 6 1 7-1 5-3 4-6z"/></svg><svg class="h h12" viewBox="0 -85 100 100"><path d="M21-17l-6 0-1-2-1-2 1-56 5-1 1 2 0 23 30 0 0-23 1-1 4-1 2 2 0 26 20 0 0-32 1-1 5 1 0 91-6 1 0-2 0-52-20 0 0 23-1 2-2 2-5 0zM20-47l0 22 0 2 29 0 1-2 0-22z"/></svg><svg class="h h12" viewBox="0 -85 100 100"><path d="M54-76l-2 5 1 1 5 10 7 8 7 5 7 4 8 3 0 2-2 4-1 0-6-2-12-7-9-8-8-11-5 9-10 10-10 7-7 3-2 0-2-3 0-2 13-7 8-7 4-5 4-5 2-6 3-10 5 0zM92-12l2 1 0 4-2 1-84 0-2-2 0-3 2-1z"/></svg><svg class="h h12" viewBox="0 -85 100 100"><path d="M67-36l-1 1-3 1-19 2-23 1-5-2-1-2-1-5 0-30 0-5 2-1 3-1 37 0 1 5-1 1-35 0 0 32 0 1 2 0 12 0 16-1 14-2 1 1zM80-16l0 1-1 0-5 0-1-1 0-65 0-1 1-1 5 0 1 1 0 29 14 0 1 2 0 3-1 1-14 0zM84 7l-1 1-51 0-5-1-2-2-1-3 0-21 2-1 4 0 1 1 0 19 1 2 51 0 1 1z"/></svg><svg class="h h12" viewBox="0 -85 100 100"><path d="M54-42l-35 0 1 21 2 1 15-1 25-3 1 2 0 3 0 1-10 2-17 1-16 1-5-2-2-2-1-5 0-45 1-5 2-1 3-1 37 0 1 5-1 1-34 0-1 0-1 1 0 21 35-1 1 1 0 4zM80 8l0 1-1 1-5 0-1-2 0-89 0-1 1-1 5 0 1 1 0 37 14 0 1 1 0 4-1 1-14 0z"/></svg>_1.0&lt;<svg class="h h12" viewBox="0 -85 100 100"><path d="M41-76l-1 13-2 11 2 4 2 7 6 9 7 8 6 6 0 1-4 4-4-3-10-12-8-13-3 8-5 8-9 11-4 4-1 0-3-3 0-2 8-9 5-7 4-6 2-8 3-12 2-20 1-1 5 0zM84 8l-1 1-1 1-5 0 0-2 0-89 0-1 1-1 5 0 1 2z"/></svg><svg class="h h12" viewBox="0 -85 100 100"><path d="M54-76l-2 5 1 1 5 10 7 8 7 5 7 4 8 3 0 2-2 4-1 0-6-2-12-7-9-8-8-11-5 9-10 10-10 7-7 3-2 0-2-3 0-2 13-7 8-7 4-5 4-5 2-6 3-10 5 0zM92-12l2 1 0 4-2 1-84 0-2-2 0-3 2-1z"/></svg><svg class="h h12" viewBox="0 -85 100 100"><path d="M26-14l1-3 1-3 4-1 52 0 2 2 1 3-1 21-1 2-4 2-51-1-2-1-1-3zM42-52l-24 0 0 14 2 1 12 0 20-3 1 1 0 5-21 3-13 0-5-1-2-2-1-5 0-31 1-5 2-2 3 0 29 0 0 5-1 1-26 0-1 1 0 12 25 0 1 1 0 3zM36-15l-2 1-1 1 0 14 2 2 43 0 2-1 0-15-1-2zM62-56l1-24 1-1 4 0 1 1 0 51-1 1-4 0-1 0-1-22-12 0-1-1 0-4 1-1zM87-28l-1 1-1 1-4 0-1-2 0-53 1-1 1-1 4 0 1 2z"/></svg>&gt;...</div>
<svg style="left:1035px;top:93px" width="8" height="8" viewBox="0 0 8 8"><path d="M0.5 0.5L7.5 7.5M7.5 0.5L0.5 7.5" stroke="#000" stroke-width="1.6"/></svg>
<div style="position:absolute;left:1048px;top:89px;width:1px;height:17px;background:#b8b8b8"></div>
<svg style="left:1055px;top:90px" width="15" height="15" viewBox="0 0 15 15"><rect x="0" y="0" width="14" height="14" fill="none"/><path d="M0.5 1V13.5H14" stroke="#111" fill="none"/><path d="M2 8L5 4L8 7L12 2" stroke="#e02020" fill="none" stroke-width="1.2"/><rect x="3" y="9" width="2" height="4" fill="#1a4ac0"/><rect x="6" y="8" width="2" height="5" fill="#c01818"/><rect x="9" y="9" width="2" height="4" fill="#1a4ac0"/><rect x="12" y="7" width="2" height="6" fill="#1a4ac0"/></svg>
<div class="t" style="left:1072px;top:91px;font-size:12px">Z_<svg class="h h12" viewBox="0 -85 100 100"><path d="M60-44l-1 8-1 6-4 7-3 4-4 4-5 2-9 0-6-1-4-3-4-4-3-4-2-5-1-9 0-8 1-9 1-6 3-4 3-5 6-4 9-2 9 2 6 4 5 7 3 8zM53-45l-1-7-1-6-3-6-4-4-6-3-6 1-4 2-4 4-2 4-2 6 0 14 2 11 3 5 3 3 4 2 6 1 4-2 3-2 3-3 3-6 1-7zM84 8l-1 1-1 1-5 0 0-2 0-89 0-1 1-1 5 0 1 2z"/></svg><svg class="h h12" viewBox="0 -85 100 100"><path d="M56-70l-1 5 22 0 0-17 1-1 5 1 0 53-5 0-1 0 0-12-26 0-1-1 0-4 1-1 26 0 0-12-24 0-5 9-8 9-10 7-13 7-2 0-2-5 0-1 15-7 6-5 8-9 6-9 1-7-1-1-1 0-31 0-1-2 1-4 35 0 4 1 2 3zM25-23l2-1 49 0 5 1 2 2 0 3 0 27-1 1-5 0 0-1-1-26-50-1-1-1z"/></svg><svg class="h h12" viewBox="0 -85 100 100"><path d="M82-35l-1 1-1 0-27 0 0 22 40 0 1 1 0 4-1 1-85 0-2-1 0-4 1-1 39 0 0-22-22 0-4-1-1-3 0-33 1-3 1-1 5-1 55 0 0 5-1 1-54 0 0 3 0 24 0 2 2 1 52 0 2 1z"/></svg> <svg class="h h12" viewBox="0 -85 100 100"><path d="M66-23l-1 2-5 1-23 3-17 0-3 0-3-2-1-2-1-4 0-43 1-4 1-2 2-1 4 0 34 0 2 1 0 4-1 1-35 0-1 43 1 2 4 1 13 0 27-4 1 1zM80 8l0 1-1 1-5 0-1-2 0-89 0-1 1-1 5 0 1 1 0 37 14 0 1 1 0 4-1 1-14 0z"/></svg><svg class="h h12" viewBox="0 -85 100 100"><path d="M92-40l2 1 0 3-1 1-40 1 0 12 12 1 9 3 3 3 3 3 1 6-2 6-5 5-9 4-10 1-13 0-12-3-5-2-3-3-2-4-1-2 0-4 1-4 3-3 3-3 9-3 11-1 0-12-38 0-2-2 0-3 2-1zM73-70l-6 5-8 4 28 7 0 1-2 4-13-2-21-6-21 7-14 3-2-1-1-4 1-1 15-3 18-6 12-6 7-4 1-1-2-1-44 0 0-2 0-4 47 0 6 0 2 1 1 3 0 2zM74-6l-2-4-4-3-7-2-11-1-9 0-8 2-6 4-1 4 1 4 6 4 8 1 9 1 9-1 7-1 6-4z"/></svg>_<svg class="h h12" viewBox="0 -85 100 100"><path d="M63-18l-2 1-7-6-13-15-6 6-9 9-11 9-2 0-3-4 0-1 15-12 11-11 7-12 3-6 2-8 0-1-2 0-30 0-1-1 0-5 34 0 4 0 3 2 0 4-2 8-3 6-6 12 10 12 10 9 0 1zM84 8l-1 1-1 1-5 0 0-2 0-89 0-1 1-1 5 0 1 2z"/></svg><svg class="h h12" viewBox="0 -85 100 100"><path d="M48 9l-2-1 0-33-39 0-1-1 0-5 86 0 2 0 0 5-1 1-40 0 0 33-1 1zM54-80l-2 4 2 4 3 5 8 7 6 4 7 4 9 2 0 2-2 4-2 0-5-2-13-6-10-8-6-8-5 8-7 6-9 6-11 5-2 0-2-4 0-1 13-6 10-8 8-10 2-4 1-6 5 0 1 1z"/></svg><svg class="h h12" viewBox="0 -85 100 100"><path d="M58-40l-1 6-4 5-6 3-7 2 0 10 28-3 1 1 0 3 0 2-16 2-17 1-25 1-3 0-2-1 0-4 2-1 25-1 0-10-6-1-6-3-4-5-2-4 0-5 0-4 3-4 4-3 6-3 6-1 7 0 6 2 5 3 3 3 2 5zM80 8l0 1-1 1-5 0-1-2 0-89 0-1 1-1 5 0 1 2 0 39 14 0 1 1 0 4-1 1-14 0zM51-40l-1-5-3-3-5-2-6-1-6 1-4 2-4 3-1 5 1 4 4 3 4 2 6 1 6-1 5-2 3-3zM64-63l0 1-1 0-53 0-2-1 0-4 2-1 53 0 1 1zM50-76l0 1-1 0-27 0-1-1 0-4 1-1 27 0 1 1z"/></svg>&lt;<svg class="h h12" viewBox="0 -85 100 100"><path d="M63-18l-2 1-7-6-13-15-6 6-9 9-11 9-2 0-3-4 0-1 15-12 11-11 7-12 3-6 2-8 0-1-2 0-30 0-1-1 0-5 34 0 4 0 3 2 0 4-2 8-3 6-6 12 10 12 10 9 0 1zM84 8l-1 1-1 1-5 0 0-2 0-89 0-1 1-1 5 0 1 2z"/></svg><svg class="h h12" viewBox="0 -85 100 100"><path d="M84-36l-1 1-1 0-13 0 0 23 24 0 1 1 0 4-1 1-85 0-2-1 0-4 1-1 24 0 0-23-14 0-2-1 0-3 1-1 13 0 0-30-11 0-1-2 0-3 1-1 63 0 1 4-1 2-11 0 0 30 13 0 1 0zM36-40l27 0 0-30-27 0zM37-12l25 0 0-23-25 0z"/></svg>&gt;</div>
<svg style="left:1237px;top:93px" width="8" height="8" viewBox="0 0 8 8"><path d="M0.5 0.5L7.5 7.5M7.5 0.5L0.5 7.5" stroke="#000" stroke-width="1.6"/></svg>
<div style="position:absolute;left:1250px;top:89px;width:1px;height:17px;background:#b8b8b8"></div>
<svg style="left:1257px;top:90px" width="15" height="15" viewBox="0 0 15 15"><rect x="0" y="0" width="14" height="14" fill="none"/><path d="M0.5 1V13.5H14" stroke="#111" fill="none"/><path d="M2 8L5 4L8 7L12 2" stroke="#e02020" fill="none" stroke-width="1.2"/><rect x="3" y="9" width="2" height="4" fill="#1a4ac0"/><rect x="6" y="8" width="2" height="5" fill="#c01818"/><rect x="9" y="9" width="2" height="4" fill="#1a4ac0"/><rect x="12" y="7" width="2" height="6" fill="#1a4ac0"/></svg>
<div class="t" style="left:1274px;top:91px;font-size:12px">Z_<svg class="h h12" viewBox="0 -85 100 100"><path d="M60-44l-1 8-1 6-4 7-3 4-4 4-5 2-9 0-6-1-4-3-4-4-3-4-2-5-1-9 0-8 1-9 1-6 3-4 3-5 6-4 9-2 9 2 6 4 5 7 3 8zM53-45l-1-7-1-6-3-6-4-4-6-3-6 1-4 2-4 4-2 4-2 6 0 14 2 11 3 5 3 3 4 2 6 1 4-2 3-2 3-3 3-6 1-7zM84 8l-1 1-1 1-5 0 0-2 0-89 0-1 1-1 5 0 1 2z"/></svg><svg class="h h12" viewBox="0 -85 100 100"><path d="M56-70l-1 5 22 0 0-17 1-1 5 1 0 53-5 0-1 0 0-12-26 0-1-1 0-4 1-1 26 0 0-12-24 0-5 9-8 9-10 7-13 7-2 0-2-5 0-1 15-7 6-5 8-9 6-9 1-7-1-1-1 0-31 0-1-2 1-4 35 0 4 1 2 3zM25-23l2-1 49 0 5 1 2 2 0 3 0 27-1 1-5 0 0-1-1-26-50-1-1-1z"/></svg><svg class="h h12" viewBox="0 -85 100 100"><path d="M82-35l-1 1-1 0-27 0 0 22 40 0 1 1 0 4-1 1-85 0-2-1 0-4 1-1 39 0 0-22-22 0-4-1-1-3 0-33 1-3 1-1 5-1 55 0 0 5-1 1-54 0 0 3 0 24 0 2 2 1 52 0 2 1z"/></svg> <svg class="h h12" viewBox="0 -85 100 100"><path d="M66-23l-1 2-5 1-23 3-17 0-3 0-3-2-1-2-1-4 0-43 1-4 1-2 2-1 4 0 34 0 2 1 0 4-1 1-35 0-1 43 1 2 4 1 13 0 27-4 1 1zM80 8l0 1-1 1-5 0-1-2 0-89 0-1 1-1 5 0 1 1 0 37 14 0 1 1 0 4-1 1-14 0z"/></svg><svg class="h h12" viewBox="0 -85 100 100"><path d="M92-40l2 1 0 3-1 1-40 1 0 12 12 1 9 3 3 3 3 3 1 6-2 6-5 5-9 4-10 1-13 0-12-3-5-2-3-3-2-4-1-2 0-4 1-4 3-3 3-3 9-3 11-1 0-12-38 0-2-2 0-3 2-1zM73-70l-6 5-8 4 28 7 0 1-2 4-13-2-21-6-21 7-14 3-2-1-1-4 1-1 15-3 18-6 12-6 7-4 1-1-2-1-44 0 0-2 0-4 47 0 6 0 2 1 1 3 0 2zM74-6l-2-4-4-3-7-2-11-1-9 0-8 2-6 4-1 4 1 4 6 4 8 1 9 1 9-1 7-1 6-4z"/></svg>&lt;<svg class="h h12" viewBox="0 -85 100 100"><path d="M63-18l-2 1-7-6-13-15-6 6-9 9-11 9-2 0-3-4 0-1 15-12 11-11 7-12 3-6 2-8 0-1-2 0-30 0-1-1 0-5 34 0 4 0 3 2 0 4-2 8-3 6-6 12 10 12 10 9 0 1zM84 8l-1 1-1 1-5 0 0-2 0-89 0-1 1-1 5 0 1 2z"/></svg><svg class="h h12" viewBox="0 -85 100 100"><path d="M84-36l-1 1-1 0-13 0 0 23 24 0 1 1 0 4-1 1-85 0-2-1 0-4 1-1 24 0 0-23-14 0-2-1 0-3 1-1 13 0 0-30-11 0-1-2 0-3 1-1 63 0 1 4-1 2-11 0 0 30 13 0 1 0zM36-40l27 0 0-30-27 0zM37-12l25 0 0-23-25 0z"/></svg>&gt;</div>
<div class="t" style="left:1390px;top:91px;font-size:12px">:</div>
<svg style="left:1398px;top:93px" width="12" height="9" viewBox="0 0 12 9"><rect x="0" y="0" width="12" height="2.5" fill="#000"/><path d="M0 4H12L6 9Z" fill="#000"/></svg>
<svg style="left:1416px;top:93px" width="8" height="8" viewBox="0 0 8 8"><path d="M0.5 0.5L7.5 7.5M7.5 0.5L0.5 7.5" stroke="#000" stroke-width="1.6"/></svg>
<div style="position:absolute;left:319px;top:108px;width:1109px;height:1px;background:#808590"></div>
<div style="position:absolute;left:319px;top:109px;width:1109px;height:1px;background:#a0a0a0"></div>
<div style="position:absolute;left:319px;top:110px;width:1109px;height:683px;background:#fff"></div>
<div style="position:absolute;left:319px;top:110px;width:1px;height:683px;background:#666"></div>
<div style="position:absolute;left:319px;top:110px;width:1109px;height:1px;background:#666"></div>
<div style="position:absolute;left:320px;top:111px;width:19px;height:682px;background:conic-gradient(#ececec 25%,#fff 0 50%,#ececec 0 75%,#fff 0) 0 0/2px 2px"></div>
<div style="position:absolute;left:339px;top:111px;width:1px;height:682px;background:#a0a0a0"></div>
<svg style="left:365px;top:111px" width="1" height="682"><path d="M0.5 0V682" stroke="#008080" stroke-dasharray="1 1"/></svg>
<div class="code" style="left:340px;top:112px;width:24px;text-align:right;color:#008080">1</div>
<div class="code" style="left:381px;top:112px"><span style="color:#0000ff">Input</span> <span style="color:#ff00ff">:</span> <span style="color:#000">k</span><span style="color:#ff00ff">(</span><span style="color:#000">0.5</span><span style="color:#ff00ff">)</span><span style="color:#ff00ff">;</span></div>
<div class="code" style="left:340px;top:128px;width:24px;text-align:right;color:#008080">2</div>
<div class="code" style="left:381px;top:128px"></div>
<div class="code" style="left:340px;top:144px;width:24px;text-align:right;color:#008080">3</div>
<div class="code" style="left:381px;top:144px"><span style="color:#008000">#IBS<svg class="h h8" viewBox="3 -84 94 95" preserveAspectRatio="none"><path d="M63-18l-2 1-7-6-13-15-6 6-9 9-11 9-2 0-3-4 0-1 15-12 11-11 7-12 3-6 2-8 0-1-2 0-30 0-1-1 0-5 34 0 4 0 3 2 0 4-2 8-3 6-6 12 10 12 10 9 0 1zM84 8l-1 1-1 1-5 0 0-2 0-89 0-1 1-1 5 0 1 2z"/></svg><svg class="h h8" viewBox="3 -84 94 95" preserveAspectRatio="none"><path d="M84-36l-1 1-1 0-13 0 0 23 24 0 1 1 0 4-1 1-85 0-2-1 0-4 1-1 24 0 0-23-14 0-2-1 0-3 1-1 13 0 0-30-11 0-1-2 0-3 1-1 63 0 1 4-1 2-11 0 0 30 13 0 1 0zM36-40l27 0 0-30-27 0zM37-12l25 0 0-23-25 0z"/></svg></span></div>
<div class="code" style="left:340px;top:160px;width:24px;text-align:right;color:#008080">4</div>
<div class="code" style="left:381px;top:160px"><span style="color:#0000ff">Input</span> <span style="color:#ff00ff">:</span> <span style="color:#000">highline</span><span style="color:#ff00ff">(</span><span style="color:#000">0.8</span><span style="color:#ff00ff">)</span><span style="color:#ff00ff">,</span><span style="color:#000">lowline</span><span style="color:#ff00ff">(</span><span style="color:#000">0.2</span><span style="color:#ff00ff">)</span><span style="color:#ff00ff">;</span></div>
<div class="code" style="left:340px;top:176px;width:24px;text-align:right;color:#008080">5</div>
<div class="code" style="left:381px;top:176px"><span style="color:#0000ff">var</span> <span style="color:#ff00ff">:</span> <span style="color:#000">IBS</span><span style="color:#ff00ff">(</span><span style="color:#000">0</span><span style="color:#ff00ff">)</span><span style="color:#ff00ff">;</span></div>
<div class="code" style="left:340px;top:192px;width:24px;text-align:right;color:#008080">6</div>
<div class="code" style="left:381px;top:192px"><span style="color:#000">IBS</span><span style="color:#ff00ff">=</span> <span style="color:#4a74f4">data2</span><span style="color:#ff00ff">(</span><span style="color:#ff00ff">(</span><span style="color:#4a74f4">dayclose</span><span style="color:#ff00ff">(</span><span style="color:#000">1</span><span style="color:#ff00ff">)</span><span style="color:#ff00ff">-</span><span style="color:#000">daylow</span><span style="color:#ff00ff">(</span><span style="color:#000">1</span><span style="color:#ff00ff">)</span><span style="color:#ff00ff">)</span><span style="color:#ff00ff">/</span><span style="color:#ff00ff">(</span><span style="color:#4a74f4">dayhigh</span><span style="color:#ff00ff">(</span><span style="color:#000">1</span><span style="color:#ff00ff">)</span><span style="color:#ff00ff">-</span><span style="color:#000">daylow</span><span style="color:#ff00ff">(</span><span style="color:#000">1</span><span style="color:#ff00ff">)</span><span style="color:#ff00ff">)</span><span style="color:#ff00ff">)</span><span style="color:#ff00ff">;</span></div>
<div class="code" style="left:340px;top:208px;width:24px;text-align:right;color:#008080">7</div>
<div class="code" style="left:381px;top:208px"></div>
<div class="code" style="left:340px;top:224px;width:24px;text-align:right;color:#008080">8</div>
<div class="code" style="left:381px;top:224px"><span style="color:#008000">#1<svg class="h h8" viewBox="3 -84 94 95" preserveAspectRatio="none"><path d="M84-36l-1 1-1 1-5 0 0-2 0-45 0-1 1-1 5 0 1 2zM59-59l-1 5-1 4-5 7-8 4-9 2-9-1-7-5-5-7-1-4-1-5 1-4 1-5 2-3 3-4 7-4 9-1 9 1 7 4 6 7 1 5zM52-59l-2-6-3-5-6-3-6-1-6 1-5 3-4 5-1 6 1 7 4 5 5 3 6 1 6-1 6-3 3-5zM86 9l-2 1-50 0-5-1-2-2-1-5 1-9 1-4 3-1 3 0 42 0 1-2 0-7-1-1-2-1-47 0-1-1 0-4 2 0 48 0 5 1 2 2 1 4-1 9-1 4-3 1-3 0-42 1-1 1 0 7 1 2 2 0 48 0 2 1z"/></svg> 1<svg class="h h8" viewBox="3 -84 94 95" preserveAspectRatio="none"><path d="M70-17l1 0 1 5-11 2-14 2-13 0-25 1-2-1 0-4 2-1 26-1 0-10-7-2-6-3-4-5-1-6 1-6 4-5 6-4 6-2 9 0 8 3 6 4 3 6 0 7-1 3-3 4-6 4-8 2 0 10zM84 8l-1 1-1 1-5 0 0-2 0-89 0-1 1-1 5 0 1 2zM54-40l-1-5-4-3-4-2-6-1-6 1-5 2-3 3-1 5 1 4 3 3 5 2 6 1 6-1 4-2 4-3zM67-63l-1 1-1 0-53 0-1-1 0-4 1-1 53 0 2 1zM53-76l-1 1-1 0-26 0-2-1 0-4 2-1 26 0 2 1z"/></svg> <svg class="h h8" viewBox="3 -84 94 95" preserveAspectRatio="none"><path d="M11-68l0-3 1-2 4-2 27 0 3 1 2 1 1 4 0 45 0 4-1 2-4 1-26 0-4 0-2-2-1-4zM68-45l12 0 0-37 2-1 4 0 1 1 0 90-1 2-5 0-1-2 0-47-12 0-1 44-1 1-4 0-1-1 0-85 0-1 1 0 5 0 0 1zM20-69l-2 1 0 1 0 43 2 1 21 0 1-3 0-42-2-1z"/></svg><svg class="h h8" viewBox="3 -84 94 95" preserveAspectRatio="none"><path d="M48 9l-2-1 0-33-39 0-1-1 0-5 86 0 2 0 0 5-1 1-40 0 0 33-1 1zM54-80l-2 4 2 4 3 5 8 7 6 4 7 4 9 2 0 2-2 4-2 0-5-2-13-6-10-8-6-8-5 8-7 6-9 6-11 5-2 0-2-4 0-1 13-6 10-8 8-10 2-4 1-6 5 0 1 1z"/></svg></span></div>
<div class="code" style="left:340px;top:240px;width:24px;text-align:right;color:#008080">9</div>
<div class="code" style="left:381px;top:240px"><span style="color:#0000ff">input</span><span style="color:#ff00ff">:</span> <span style="color:#000">N</span><span style="color:#ff00ff">(</span><span style="color:#000">1</span><span style="color:#ff00ff">)</span><span style="color:#ff00ff">;</span></div>
<div class="code" style="left:340px;top:256px;width:24px;text-align:right;color:#008080">10</div>
<div class="code" style="left:381px;top:256px"><span style="color:#0000ff">var</span><span style="color:#ff00ff">:</span> <span style="color:#000">cnt</span><span style="color:#ff00ff">(</span><span style="color:#000">0</span><span style="color:#ff00ff">)</span><span style="color:#ff00ff">,</span> <span style="color:#000">count</span><span style="color:#ff00ff">(</span><span style="color:#000">0</span><span style="color:#ff00ff">)</span><span style="color:#ff00ff">;</span></div>
<div class="code" style="left:340px;top:272px;width:24px;text-align:right;color:#008080">11</div>
<div class="code" style="left:381px;top:272px"><span style="color:#000">Count</span> <span style="color:#ff00ff">=</span> <span style="color:#000">0</span><span style="color:#ff00ff">;</span></div>
<div class="code" style="left:340px;top:288px;width:24px;text-align:right;color:#008080">12</div>
<div class="code" style="left:381px;top:288px"> <span style="color:#0000ff">for</span> <span style="color:#000">cnt</span> <span style="color:#ff00ff">=</span> <span style="color:#000">0</span> <span style="color:#0000ff">to</span> <span style="color:#000">10</span> <span style="color:#000">{</span></div>
<div class="code" style="left:340px;top:304px;width:24px;text-align:right;color:#008080">13</div>
<div class="code" style="left:381px;top:304px">    <span style="color:#0000ff">if</span> <span style="color:#00c0ff">EntryDate</span><span style="color:#ff00ff">(</span><span style="color:#000">cnt</span><span style="color:#ff00ff">)</span> <span style="color:#ff00ff">=</span><span style="color:#ff00ff">=</span> <span style="color:#0000ff">sdate</span> <span style="color:#0000ff">then</span></div>
<div class="code" style="left:340px;top:320px;width:24px;text-align:right;color:#008080">14</div>
<div class="code" style="left:381px;top:320px">             <span style="color:#000">Count</span> <span style="color:#ff00ff">=</span> <span style="color:#000">Count</span> <span style="color:#ff00ff">+</span> <span style="color:#000">1</span><span style="color:#ff00ff">;</span></div>
<div class="code" style="left:340px;top:336px;width:24px;text-align:right;color:#008080">15</div>
<div class="code" style="left:381px;top:336px"> <span style="color:#000">}</span></div>
<div class="code" style="left:340px;top:352px;width:24px;text-align:right;color:#008080">16</div>
<div class="code" style="left:381px;top:352px"></div>
<div class="code" style="left:340px;top:368px;width:24px;text-align:right;color:#008080">17</div>
<div class="code" style="left:381px;top:368px"><span style="color:#008000">#Range</span></div>
<div class="code" style="left:340px;top:384px;width:24px;text-align:right;color:#008080">18</div>
<div class="code" style="left:381px;top:384px"><span style="color:#0000ff">var</span><span style="color:#ff00ff">:</span> <span style="color:#000">rng</span><span style="color:#ff00ff">(</span><span style="color:#000">0</span><span style="color:#ff00ff">)</span><span style="color:#ff00ff">;</span></div>
<div class="code" style="left:340px;top:400px;width:24px;text-align:right;color:#008080">19</div>
<div class="code" style="left:381px;top:400px"><span style="color:#000">rng</span> <span style="color:#ff00ff">=</span> <span style="color:#4a74f4">dayhigh</span><span style="color:#ff00ff">(</span><span style="color:#000">1</span><span style="color:#ff00ff">)</span><span style="color:#ff00ff">-</span><span style="color:#000">daylow</span><span style="color:#ff00ff">(</span><span style="color:#000">1</span><span style="color:#ff00ff">)</span><span style="color:#ff00ff">;</span></div>
<div class="code" style="left:340px;top:416px;width:24px;text-align:right;color:#008080">20</div>
<div class="code" style="left:381px;top:416px"></div>
<div class="code" style="left:340px;top:432px;width:24px;text-align:right;color:#008080">21</div>
<div class="code" style="left:381px;top:432px"><span style="color:#008000">#<svg class="h h8" viewBox="3 -84 94 95" preserveAspectRatio="none"><path d="M11-68l0-3 1-2 4-2 27 0 3 1 2 1 1 4 0 45 0 4-1 2-4 1-26 0-4 0-2-2-1-4zM68-45l12 0 0-37 2-1 4 0 1 1 0 90-1 2-5 0-1-2 0-47-12 0-1 44-1 1-4 0-1-1 0-85 0-1 1 0 5 0 0 1zM20-69l-2 1 0 1 0 43 2 1 21 0 1-3 0-42-2-1z"/></svg><svg class="h h8" viewBox="3 -84 94 95" preserveAspectRatio="none"><path d="M48 9l-2-1 0-33-39 0-1-1 0-5 86 0 2 0 0 5-1 1-40 0 0 33-1 1zM54-80l-2 4 2 4 3 5 8 7 6 4 7 4 9 2 0 2-2 4-2 0-5-2-13-6-10-8-6-8-5 8-7 6-9 6-11 5-2 0-2-4 0-1 13-6 10-8 8-10 2-4 1-6 5 0 1 1z"/></svg> <svg class="h h8" viewBox="3 -84 94 95" preserveAspectRatio="none"><path d="M85-36l-2 1-11-4-20-10-16 9-19 7-2-4 0-1 16-7 13-7 12-7 11-10-1-1-1 0-43 0-1-1 0-4 1-1 46 0 7 1 2 3-2 4-9 9-8 7 13 6 15 5 1 1zM52-35l1 1 0 22 40 0 1 1 0 4-1 1-85 0-2-1 0-4 1-1 39 0 0-22 1-1z"/></svg><svg class="h h8" viewBox="3 -84 94 95" preserveAspectRatio="none"><path d="M57-70l-2 7-2 7-4 6-5 6-5 6-7 5-7 4-8 4-2 0-2-4 0-1 11-6 6-4 6-4 6-8 5-8 3-9-2-2-1 0-31 0-1-1 1-5 36 0 4 2 1 2zM77-53l0-29 1-1 5 0 0 1 1 65-1 1-5 0-1-1 0-30-21 0-1-1 0-4 1-1zM87 7l-2 1-50 0-5-1-2-2-1-3 0-22 2-1 4 0 1 1 0 20 1 2 50 0 2 1z"/></svg></span></div>
<div class="code" style="left:340px;top:448px;width:24px;text-align:right;color:#008080">22</div>
<div class="code" style="left:381px;top:448px"><span style="color:#0000ff">if</span> <span style="color:#000">IBS</span> <span style="color:#ff00ff">&gt;</span><span style="color:#ff00ff">=</span> <span style="color:#000">0.8</span></div>
<div class="code" style="left:340px;top:464px;width:24px;text-align:right;color:#008080">23</div>
<div class="code" style="left:381px;top:464px">   <span style="color:#000">and</span> <span style="color:#0000ff">C</span> <span style="color:#ff00ff">&gt;</span> <span style="color:#4a74f4">dayopen</span> <span style="color:#ff00ff">+</span><span style="color:#000">rng</span><span style="color:#ff00ff">*</span><span style="color:#000">k</span></div>
<div class="code" style="left:340px;top:480px;width:24px;text-align:right;color:#008080">24</div>
<div class="code" style="left:381px;top:480px">   <span style="color:#000">and</span> <span style="color:#000">count</span> <span style="color:#ff00ff">&lt;</span> <span style="color:#000">N</span></div>
<div class="code" style="left:340px;top:496px;width:24px;text-align:right;color:#008080">25</div>
<div class="code" style="left:381px;top:496px">   <span style="color:#0000ff">then</span> <span style="color:#000">{</span></div>
<div class="code" style="left:340px;top:512px;width:24px;text-align:right;color:#008080">26</div>
<div class="code" style="left:381px;top:512px"><span style="color:#ff0000">MessageLog</span><span style="color:#ff00ff">(</span><span style="color:#008080">&quot;IBS %.2f&quot;</span><span style="color:#ff00ff">,</span> <span style="color:#000">IBS</span><span style="color:#ff00ff">)</span><span style="color:#ff00ff">;</span></div>
<div class="code" style="left:340px;top:528px;width:24px;text-align:right;color:#008080">27</div>
<div class="code" style="left:381px;top:528px"><span style="color:#800080">buy</span><span style="color:#ff00ff">(</span><span style="color:#008080">&quot;<svg class="h h8" viewBox="3 -84 94 95" preserveAspectRatio="none"><path d="M11-68l0-3 1-2 4-2 27 0 3 1 2 1 1 4 0 45 0 4-1 2-4 1-26 0-4 0-2-2-1-4zM68-45l12 0 0-37 2-1 4 0 1 1 0 90-1 2-5 0-1-2 0-47-12 0-1 44-1 1-4 0-1-1 0-85 0-1 1 0 5 0 0 1zM20-69l-2 1 0 1 0 43 2 1 21 0 1-3 0-42-2-1z"/></svg><svg class="h h8" viewBox="3 -84 94 95" preserveAspectRatio="none"><path d="M48 9l-2-1 0-33-39 0-1-1 0-5 86 0 2 0 0 5-1 1-40 0 0 33-1 1zM54-80l-2 4 2 4 3 5 8 7 6 4 7 4 9 2 0 2-2 4-2 0-5-2-13-6-10-8-6-8-5 8-7 6-9 6-11 5-2 0-2-4 0-1 13-6 10-8 8-10 2-4 1-6 5 0 1 1z"/></svg>&quot;</span><span style="color:#ff00ff">)</span><span style="color:#ff00ff">;</span></div>
<div class="code" style="left:340px;top:544px;width:24px;text-align:right;color:#008080">28</div>
<div class="code" style="left:381px;top:544px"><span style="color:#000">}</span></div>
<div class="code" style="left:340px;top:560px;width:24px;text-align:right;color:#008080">29</div>
<div class="code" style="left:381px;top:560px"></div>
<div class="code" style="left:340px;top:576px;width:24px;text-align:right;color:#008080">30</div>
<div class="code" style="left:381px;top:576px"><span style="color:#008000">#<svg class="h h8" viewBox="3 -84 94 95" preserveAspectRatio="none"><path d="M11-68l0-3 1-2 4-2 27 0 3 1 2 1 1 4 0 45 0 4-1 2-4 1-26 0-4 0-2-2-1-4zM68-45l12 0 0-37 2-1 4 0 1 1 0 90-1 2-5 0-1-2 0-47-12 0-1 44-1 1-4 0-1-1 0-85 0-1 1 0 5 0 0 1zM20-69l-2 1 0 1 0 43 2 1 21 0 1-3 0-42-2-1z"/></svg><svg class="h h8" viewBox="3 -84 94 95" preserveAspectRatio="none"><path d="M82-35l-1 1-1 0-27 0 0 22 40 0 1 1 0 4-1 1-85 0-2-1 0-4 1-1 39 0 0-22-22 0-4-1-1-3 0-33 1-3 1-1 5-1 55 0 0 5-1 1-54 0 0 3 0 24 0 2 2 1 52 0 2 1z"/></svg> <svg class="h h8" viewBox="3 -84 94 95" preserveAspectRatio="none"><path d="M85-36l-2 1-11-4-20-10-16 9-19 7-2-4 0-1 16-7 13-7 12-7 11-10-1-1-1 0-43 0-1-1 0-4 1-1 46 0 7 1 2 3-2 4-9 9-8 7 13 6 15 5 1 1zM52-35l1 1 0 22 40 0 1 1 0 4-1 1-85 0-2-1 0-4 1-1 39 0 0-22 1-1z"/></svg><svg class="h h8" viewBox="3 -84 94 95" preserveAspectRatio="none"><path d="M57-70l-2 7-2 7-4 6-5 6-5 6-7 5-7 4-8 4-2 0-2-4 0-1 11-6 6-4 6-4 6-8 5-8 3-9-2-2-1 0-31 0-1-1 1-5 36 0 4 2 1 2zM77-53l0-29 1-1 5 0 0 1 1 65-1 1-5 0-1-1 0-30-21 0-1-1 0-4 1-1zM87 7l-2 1-50 0-5-1-2-2-1-3 0-22 2-1 4 0 1 1 0 20 1 2 50 0 2 1z"/></svg></span></div>
<div class="code" style="left:340px;top:592px;width:24px;text-align:right;color:#008080">31</div>
<div class="code" style="left:381px;top:592px"><span style="color:#0000ff">if</span> <span style="color:#0000ff">stime</span> <span style="color:#ff00ff">&gt;</span><span style="color:#ff00ff">=</span> <span style="color:#000">151600</span></div>
<div class="code" style="left:340px;top:608px;width:24px;text-align:right;color:#008080">32</div>
<div class="code" style="left:381px;top:608px">   <span style="color:#000">and</span> <span style="color:#0000ff">stime</span> <span style="color:#ff00ff">&lt;</span><span style="color:#000">151800</span></div>
<div class="code" style="left:340px;top:624px;width:24px;text-align:right;color:#008080">33</div>
<div class="code" style="left:381px;top:624px">   <span style="color:#0000ff">Then</span></div>
<div class="code" style="left:340px;top:640px;width:24px;text-align:right;color:#008080">34</div>
<div class="code" style="left:381px;top:640px"> <span style="color:#000">{</span></div>
<div class="code" style="left:340px;top:656px;width:24px;text-align:right;color:#008080">35</div>
<div class="code" style="left:381px;top:656px">     <span style="color:#800080">ExitLong</span><span style="color:#ff00ff">(</span><span style="color:#000">&quot;<svg class="h h8" viewBox="3 -84 94 95" preserveAspectRatio="none"><path d="M41-76l-1 13-2 11 2 4 2 7 6 9 7 8 6 6 0 1-4 4-4-3-10-12-8-13-3 8-5 8-9 11-4 4-1 0-3-3 0-2 8-9 5-7 4-6 2-8 3-12 2-20 1-1 5 0zM84 8l-1 1-1 1-5 0 0-2 0-89 0-1 1-1 5 0 1 2z"/></svg><svg class="h h8" viewBox="3 -84 94 95" preserveAspectRatio="none"><path d="M74-56l-7 6-10 6 15 4 14 4 1 0-2 5-12-3-23-7-21 8-13 3-2 0-1-4 1-1 15-4 13-5 12-6 11-7 2-2-1-1-1 0-44 0-1-2 0-4 1 0 47 0 6 0 3 2 0 3zM52-30l1 1 0 17 40 0 1 1 0 4-1 1-85 0-2-1 0-4 1-1 39 0 0-17 1-1zM63-81l1 1 0 1 0 4-1 0-27 1-2-1 0-4 1-2z"/></svg><svg class="h h8" viewBox="3 -84 94 95" preserveAspectRatio="none"><path d="M11-68l0-3 1-2 4-2 27 0 3 1 2 1 1 4 0 45 0 4-1 2-4 1-26 0-4 0-2-2-1-4zM68-45l12 0 0-37 2-1 4 0 1 1 0 90-1 2-5 0-1-2 0-47-12 0-1 44-1 1-4 0-1-1 0-85 0-1 1 0 5 0 0 1zM20-69l-2 1 0 1 0 43 2 1 21 0 1-3 0-42-2-1z"/></svg><svg class="h h8" viewBox="3 -84 94 95" preserveAspectRatio="none"><path d="M82-35l-1 1-1 0-27 0 0 22 40 0 1 1 0 4-1 1-85 0-2-1 0-4 1-1 39 0 0-22-22 0-4-1-1-3 0-33 1-3 1-1 5-1 55 0 0 5-1 1-54 0 0 3 0 24 0 2 2 1 52 0 2 1z"/></svg>&quot;</span><span style="color:#ff00ff">,</span><span style="color:#808000">AtMarket</span><span style="color:#ff00ff">,</span><span style="color:#808000">DEF</span><span style="color:#ff00ff">,</span><span style="color:#000">&quot;&quot;</span><span style="color:#ff00ff">)</span><span style="color:#ff00ff">;</span></div>
<div class="code" style="left:340px;top:672px;width:24px;text-align:right;color:#008080">36</div>
<div class="code" style="left:381px;top:672px"> <span style="color:#000">}</span></div>
<svg style="left:366px;top:292px" width="9" height="53" viewBox="0 0 9 53"><rect x="0.5" y="0.5" width="8" height="8" fill="#fff" stroke="#808080"/><path d="M2 4.5H7" stroke="#404040"/><path d="M4.5 9V52H9" stroke="#808080" fill="none"/></svg>
<svg style="left:366px;top:500px" width="9" height="53" viewBox="0 0 9 53"><rect x="0.5" y="0.5" width="8" height="8" fill="#fff" stroke="#808080"/><path d="M2 4.5H7" stroke="#404040"/><path d="M4.5 9V52H9" stroke="#808080" fill="none"/></svg>
<svg style="left:366px;top:644px" width="9" height="37" viewBox="0 0 9 37"><rect x="0.5" y="0.5" width="8" height="8" fill="#fff" stroke="#808080"/><path d="M2 4.5H7" stroke="#404040"/><path d="M4.5 9V36H9" stroke="#808080" fill="none"/></svg>
<div style="position:absolute;left:377px;top:188px;width:495px;height:27px;border:5px solid #ed1c24"></div>
<div style="position:absolute;left:320px;top:793px;width:1108px;height:17px;background:conic-gradient(#ececec 25%,#fff 0 50%,#ececec 0 75%,#fff 0) 0 0/2px 2px"></div>
<div style="position:absolute;left:320px;top:793px;width:7px;height:17px;background:#f0f0f0;border-top:1px solid #fff;border-left:1px solid #fff;border-right:2px solid #6a6a6a;border-bottom:2px solid #6a6a6a"></div>
<div style="position:absolute;left:327px;top:793px;width:17px;height:17px;background:#f0f0f0;border-top:1px solid #fff;border-left:1px solid #fff;border-right:2px solid #6a6a6a;border-bottom:2px solid #6a6a6a"></div>
<svg style="left:332px;top:797px" width="5" height="9" viewBox="0 0 5 9"><path d="M5 0V9L0 4.5Z" fill="#000"/></svg>
<div style="position:absolute;left:344px;top:793px;width:533px;height:17px;background:#f0f0f0;border-top:1px solid #fff;border-left:1px solid #fff;border-right:2px solid #6a6a6a;border-bottom:2px solid #6a6a6a"></div>
<div style="position:absolute;left:1410px;top:793px;width:17px;height:17px;background:#f0f0f0;border-top:1px solid #fff;border-left:1px solid #fff;border-right:2px solid #6a6a6a;border-bottom:2px solid #6a6a6a"></div>
<svg style="left:1416px;top:797px" width="5" height="9" viewBox="0 0 5 9"><path d="M0 0V9L5 4.5Z" fill="#000"/></svg>
<div style="position:absolute;left:319px;top:810px;width:1110px;height:2px;background:#fff"></div>
<div style="position:absolute;left:317px;top:812px;width:1113px;height:2px;background:#7a7a7a"></div>
<div style="position:absolute;left:317px;top:814px;width:1113px;height:1px;background:#a09c98"></div>
<div style="position:absolute;left:1436px;top:82px;width:484px;height:734px;background:#f0f0f0;border-left:1px solid #fff"></div>
<div style="position:absolute;left:1436px;top:82px;width:484px;height:20px;background:#bfcddb;border-top:1px solid #909090;border-right:1px solid #a0a0a0;border-left:1px solid #a0a0a0"></div>
<svg style="left:1440px;top:84px" width="17" height="17"><rect x="2.5" y="0.5" width="14" height="16" fill="#f88a50" stroke="#333"/><rect x="5.5" y="2.5" width="7" height="3" rx="1.5" fill="#fff" stroke="#333"/><path d="M0 3H3M0 6H3M0 9H3M0 12H3M0 15H3" stroke="#333"/></svg>
<div class="t" style="left:1459px;top:85px;font-size:12px"><svg class="h h12" viewBox="0 -85 100 100"><path d="M39-76l-1 13-2 11 2 4 3 7 5 9 7 8 6 6 0 1-4 4-4-3-10-12-8-13-3 8-5 8-9 11-3 4-2 0-3-3 0-2 8-9 5-7 4-6 2-8 3-12 2-20 1-1 5 0zM80 8l0 1-1 1-5 0-1-2 0-89 0-1 1-1 5 0 1 1 0 37 14 0 1 1 0 4-1 1-14 0z"/></svg><svg class="h h12" viewBox="0 -85 100 100"><path d="M55-68l-4 9-6 9 9 8 11 8 0 1-3 4-2 0-7-5-13-12-6 6-10 8-6 4-5 2-3-4 1-2 11-7 10-8 9-9 7-12-1-1-2-1-29 0-1-1 0-4 37 0 3 1 0 1zM77-56l0-26 0-1 5 0 1 1 1 1 0 64-1 1-1 1-5 0 0-1 0-34-19 0-2-1 0-4 1-1zM87 7l-2 1-51 0-5-1-1-2-1-3 0-21 1-1 5 0 1 1 0 19 1 2 50 0 2 1z"/></svg> <svg class="h h12" viewBox="0 -85 100 100"><path d="M80-6l0 3-2 3-6 6-9 3-12 1-11-1-10-3-5-6-2-3-1-3 1-4 2-3 5-5 10-3 11-1 12 1 9 3 6 5 2 3zM73-6l0-2-1-2-5-4-7-2-9-1-9 1-6 2-5 4-1 4 1 4 5 4 6 2 9 0 9 0 7-2 5-4 1-2zM62-31l-2 1-6-3-8-4-7-5-15 10-12 5-2-4 0-1 13-7 9-6 8-7 7-9-1-1-2 0-30 0-1-2 0-4 34 0 6 1 2 2 0 1-1 4-5 7-5 6 9 7 10 4 0 2zM80-26l0 1-1 1-5 0-1-2 0-55 0-1 1-1 5 0 1 1 0 28 14 0 1 1 0 4-1 1-14 0zM45-81l1 0 1 1 0 4-1 1-23 0-2-1 0-4 1-1z"/></svg><svg class="h h12" viewBox="0 -85 100 100"><path d="M50-49l-10-1-8-2-6-3-4-3-2-4-1-7 2-4 3-4 4-2 7-3 7-1 10-1 8 1 8 2 6 3 4 3 2 4 0 7-1 4-3 4-4 2-7 3zM50-78l-13 2-5 2-3 2-2 2 0 5 1 3 2 2 9 4 14 0 12-1 5-3 2-2 1-3 0-3-1-3-3-2-3-2-5-1zM92-43l2 1 0 4-2 1-84 0-2-1 0-4 2-1zM82 8l-1 1-53 0-6-1-2-3 0-11 1-5 2-1 5-1 44 0 1-2 0-7 0-1-2 0-50 0-1-1 0-4 1-1 51 0 6 1 2 4 0 10-1 4-2 2-5 1-44 0-1 1 0 8 0 1 2 0 52 0 1 1z"/></svg> <svg class="h h12" viewBox="0 -85 100 100"><path d="M53-33l0 21 40 0 1 1 0 4-1 1-85 0-2-1 0-4 1-1 39 0 0-21-23 0-2-1-2-2 0-41 1-1 4-1 2 1 0 16 48 0 0-16 1-1 5 1 1 39-1 4-2 1-3 1zM26-56l0 16 1 1 44 0 2 0 1-1 0-16z"/></svg><svg class="h h12" viewBox="0 -85 100 100"><path d="M60-44l-1 8-1 6-4 7-3 4-4 4-5 2-9 0-6-1-4-3-4-4-3-4-2-5-1-9 0-8 1-9 1-6 3-4 3-5 6-4 9-2 9 2 6 4 5 7 3 8zM53-45l-1-7-1-6-3-6-4-4-6-3-6 1-4 2-4 4-2 4-2 6 0 14 2 11 3 5 3 3 4 2 6 1 4-2 3-2 3-3 3-6 1-7zM84 8l-1 1-1 1-5 0 0-2 0-89 0-1 1-1 5 0 1 2z"/></svg><svg class="h h12" viewBox="0 -85 100 100"><path d="M77-47l0-35 0-1 5 0 1 1 1 1 0 89-1 1-1 1-5 0 0-2 0-49-21 0-1-1 0-3 1-2zM56-68l-1 9-2 8-4 8-4 8-6 7-7 7-12 9-4 2-2 0-2-4 0-1 8-5 7-5 6-6 7-10 4-7 3-7 2-12 0-2-2 0-33 0 0-1 0-5 37 0 4 2 1 2z"/></svg><svg class="h h12" viewBox="0 -85 100 100"><path d="M80 8l0 1-1 1-5 0-1-2 0-89 0-1 1-1 5 0 1 1 0 37 14 0 1 1 0 4-1 1-14 0zM21-27l0 2 2 1 10 0 16-2 15-2 1 0 1 4-1 1-5 2-22 2-16 1-4-1-2-1-1-3-1-3 0-50 1-1 1 0 4 0 1 1z"/></svg> <svg class="h h12" viewBox="0 -85 100 100"><path d="M20-14l1-5 3-2 22 0 0-13-39 0-1-1 0-4 1-1 85 0 2 1 0 4-1 1-40 0 0 13 22 0 3 1 1 1 1 4 0 19-2 3-2 1-49 1-4-1-2-1-1-3zM29-15l-2 0 0 2 0 14 1 2 43 0 2-1 0-15-1-2zM54-80l-1 2 1 3 4 5 4 4 10 6 14 5 0 1-3 4-8-2-10-4-10-8-5-7-5 7-7 6-14 7-6 2-2 0-2-4 0-2 14-5 9-6 6-7 4-9 6 0z"/></svg><svg class="h h12" viewBox="0 -85 100 100"><path d="M84-35l-1 1-1 1-5 0 0-2 0-46 0-1 1-1 5 0 1 2zM34 9l-5-1-2-3 0-33 5 0 1 1 0 11 44 0 0-11 1-1 5 0 1 30-1 4-1 2-2 0-4 1zM33-10l0 11 1 2 40 0 2 0 0-1 1-12zM57-72l-3 10-3 5-4 6-5 5-6 5-7 4-13 7-2 0-2-5 1-1 15-8 6-4 8-8 6-9 1-6 0-1-2-1-32 0 0-1 0-5 36 0 5 2 1 2z"/></svg><svg class="h h12" viewBox="0 -85 100 100"><path d="M84 8l-1 1-1 1-5 0 0-2 0-89 0-1 1-1 5 0 1 2zM23-27l0 2 1 1 9 0 17-1 18-3 1 1 1 3 0 2-5 1-23 2-18 1-4-1-2-1-2-3 0-3 0-50 0-1 1 0 5 0 1 1z"/></svg><svg class="h h12" viewBox="0 -85 100 100"><path d="M66-23l-1 2-5 1-23 3-17 0-3 0-3-2-1-2-1-4 0-43 1-4 1-2 2-1 4 0 34 0 2 1 0 4-1 1-35 0-1 43 1 2 4 1 13 0 27-4 1 1zM80 8l0 1-1 1-5 0-1-2 0-89 0-1 1-1 5 0 1 1 0 37 14 0 1 1 0 4-1 1-14 0z"/></svg>.</div>
<svg style="left:1891px;top:91px" width="9" height="5" viewBox="0 0 9 5"><path d="M0 0H9L4.5 5Z" fill="#000"/></svg>
<svg style="left:1908px;top:87px" width="8" height="10" viewBox="0 0 8 10"><rect x="1" y="0" width="5" height="6" fill="#000"/><rect x="2" y="1" width="1.3" height="4" fill="#dce8f4"/><rect x="0" y="5" width="7" height="1.2" fill="#000"/><rect x="3" y="6" width="1.2" height="3.5" fill="#000"/></svg>
<div style="position:absolute;left:1439px;top:105px;width:46px;height:20px;background:#f0f0f0;border:1px solid #fff;border-right:none"></div>
<div class="t" style="left:1445px;top:108px;font-size:12px"><svg class="h h12" viewBox="0 -85 100 100"><path d="M22-35l-6-1-1-1-1-3 0-39 6-1 1 1 0 16 29 0 0-16 1 0 5-1 1 2 0 19 20 0 0-23 1-1 5 1 0 52-5 0-1-1 0-22-20 0 0 13-1 3-2 1-5 1zM26-17l1-4 1-2 4-1 44 0 5 0 2 2 0 4 1 20-1 4-2 2-5 1-42 0-5-1-2-2-1-2zM36-18l-2 0-1 2 0 16 1 2 40 1 2-1 1-18-1-2zM21-57l0 14 1 2 26 0 2-1 0-15z"/></svg><svg class="h h12" viewBox="0 -85 100 100"><path d="M86-44l-2 0-12-3-21-8-19 8-15 4-2-4 0-1 15-5 13-6 15-8 9-6-1-1-1 0-43 0-1-1 0-4 1-1 46 0 7 1 2 3 0 1-2 3-9 8-8 5 13 5 16 5zM48 9l-2-1 0-33-39 0-1-1 0-5 86 0 2 1 0 4-1 1-40 0 0 33-1 1z"/></svg></div>
<div style="position:absolute;left:1485px;top:103px;width:52px;height:22px;background:#f0f0f0;border-left:1px solid #fff;border-top:1px solid #fff;border-right:2px solid #8a8a8a"></div>
<div class="t" style="left:1491px;top:105px;font-size:12px"><svg class="h h12" viewBox="0 -85 100 100"><path d="M76-12l-5 4-7 4 24 7 1 1-2 4-13-3-18-5-14 5-17 5-1-1-1-3 0-2 21-6 11-4 9-5 6-4-2-1-40 0-1-1 0-4 1 0 43-1 6 1 2 1 1 2zM62-31l-2 1-6-3-8-4-7-5-15 10-12 5-2-4 0-1 13-7 9-6 8-7 7-9-1-1-2 0-30 0-1-2 0-4 34 0 6 1 2 2 0 1-1 4-5 7-5 6 9 7 10 4 0 2zM80-28l0 1-1 0-5 0-1-1 0-53 0-1 1-1 5 0 1 1 0 27 14 0 1 1 0 4-1 1-14 0zM45-81l1 0 1 1 0 4-1 1-23 0-2-1 0-4 1-1z"/></svg><svg class="h h12" viewBox="0 -85 100 100"><path d="M84 8l-1 1-1 1-5 0 0-2 0-89 0-1 1-1 5 0 1 2zM57-68l-1 9-3 8-3 8-5 8-5 7-7 7-12 9-5 2-1 0-3-4 0-1 9-5 7-5 6-6 7-10 4-7 3-7 2-12-1-2-1 0-33 0-1-1 1-5 36 0 4 2 1 2z"/></svg></div>
<div style="position:absolute;left:1438px;top:124px;width:480px;height:2px;background:#fff"></div>
<div class="t" style="left:1441px;top:131px;font-size:12px"><svg class="h h12" viewBox="0 -85 100 100"><path d="M26-17l1-4 1-2 4-1 44 0 5 0 2 2 0 4 1 20-1 4-2 2-5 1-42 0-5-1-2-2-1-2zM36-18l-2 0-1 2 0 16 1 2 40 1 2-1 1-18-1-2zM57-71l-2 7-2 6-4 6-4 5-5 5-7 5-16 9-2 0-2-5 0-1 15-7 6-4 9-9 5-10 2-7-2-1-1 0-31 0-1-2 1-4 36 0 4 1 1 3zM77-57l0-25 1-1 5 0 0 1 1 51-1 1-5 0-1 0 0-21-21 0-1 0 0-5 1-1z"/></svg><svg class="h h12" viewBox="0 -85 100 100"><path d="M68-31l-1 1-1 0-4 0-1-1 0-49 1-1 5 0 0 1 1 23 12 0 0-25 2-1 4 0 1 2 0 52-2 1-4 0-1-1 0-22-12 0zM26-22l1-1 52 0 5 1 2 2 1 3 0 26-2 1-4 0-1-1 0-24-1-2-52 0-1-1zM36-77l0 7-2 7 2 4 6 9 6 6 6 4 0 2-3 4-4-3-8-7-8-11-5 9-4 6-9 7-1 1-4-5 10-9 6-9 4-11 1-12 1-1 5 0z"/></svg><svg class="h h12" viewBox="0 -85 100 100"><path d="M84 8l-1 1-1 1-5 0 0-2 0-50-18 0-2 11-3 7-5 6-6 4-8 2-6-1-5-2-6-6-3-4-3-8-1-9 0-5 1-9 2-6 4-7 3-3 5-3 6-2 6 0 5 2 6 4 5 5 3 8 2 10 18 0 0-34 1-1 5 1zM52-45l-1-6-1-7-3-6-3-3-3-2-4-1-7 0-3 2-3 3-3 5-3 11 1 13 2 7 2 3 4 5 3 2 7 0 6-2 4-5 3-5 1-7z"/></svg></div>
<div style="position:absolute;left:1480px;top:128px;width:436px;height:20px;background:#fff;border-top:1px solid #808080;border-left:1px solid #808080;border-right:1px solid #e0e0e0;border-bottom:1px solid #e0e0e0"></div>
<div class="t" style="left:1483px;top:131px;font-size:12px">data2</div>
<div style="position:absolute;left:1440px;top:149px;width:476px;height:646px;background:#fff;border-left:2px solid #6e6e6e;border-top:1px solid #a0a0a0"></div>
<div style="position:absolute;left:1442px;top:150px;width:474px;height:17px;background:#bfcddb;border-bottom:1px solid #8ea4c4"></div>
<div style="position:absolute;left:1442px;top:185px;width:440px;height:18px;background:#f5f6fa"></div>
<div style="position:absolute;left:1442px;top:221px;width:440px;height:18px;background:#f5f6fa"></div>
<div style="position:absolute;left:1442px;top:257px;width:440px;height:18px;background:#f5f6fa"></div>
<div style="position:absolute;left:1442px;top:293px;width:440px;height:18px;background:#f5f6fa"></div>
<div style="position:absolute;left:1442px;top:329px;width:440px;height:18px;background:#f5f6fa"></div>
<div style="position:absolute;left:1442px;top:365px;width:440px;height:18px;background:#f5f6fa"></div>
<div style="position:absolute;left:1442px;top:401px;width:440px;height:18px;background:#f5f6fa"></div>
<div style="position:absolute;left:1442px;top:437px;width:440px;height:18px;background:#f5f6fa"></div>
<div style="position:absolute;left:1442px;top:473px;width:440px;height:18px;background:#f5f6fa"></div>
<div style="position:absolute;left:1442px;top:509px;width:440px;height:18px;background:#f5f6fa"></div>
<div style="position:absolute;left:1442px;top:545px;width:440px;height:18px;background:#f5f6fa"></div>
<div style="position:absolute;left:1442px;top:581px;width:440px;height:18px;background:#f5f6fa"></div>
<div style="position:absolute;left:1442px;top:617px;width:440px;height:18px;background:#f5f6fa"></div>
<div style="position:absolute;left:1442px;top:653px;width:440px;height:18px;background:#f5f6fa"></div>
<div style="position:absolute;left:1442px;top:689px;width:440px;height:18px;background:#f5f6fa"></div>
<div style="position:absolute;left:1442px;top:725px;width:440px;height:18px;background:#f5f6fa"></div>
<div style="position:absolute;left:1442px;top:761px;width:440px;height:18px;background:#f5f6fa"></div>
<div style="position:absolute;left:1507px;top:150px;width:1px;height:16px;background:#e8eef4;border-left:1px solid #98a8b8"></div>
<div style="position:absolute;left:1507px;top:167px;width:1px;height:627px;background:#e4e4e4"></div>
<div style="position:absolute;left:1607px;top:150px;width:1px;height:16px;background:#e8eef4;border-left:1px solid #98a8b8"></div>
<div style="position:absolute;left:1607px;top:167px;width:1px;height:627px;background:#e4e4e4"></div>
<div style="position:absolute;left:1707px;top:150px;width:1px;height:16px;background:#e8eef4;border-left:1px solid #98a8b8"></div>
<div style="position:absolute;left:1707px;top:167px;width:1px;height:627px;background:#e4e4e4"></div>
<div class="t" style="left:1446px;top:152px;color:#2048a0;font-size:12px"><svg class="h h12" viewBox="0 -85 100 100"><path d="M60-44l-1 8-1 6-4 7-3 4-4 4-5 2-9 0-6-1-4-3-4-4-3-4-2-5-1-9 0-8 1-9 1-6 3-4 3-5 6-4 9-2 9 2 6 4 5 7 3 8zM53-45l-1-7-1-6-3-6-4-4-6-3-6 1-4 2-4 4-2 4-2 6 0 14 2 11 3 5 3 3 4 2 6 1 4-2 3-2 3-3 3-6 1-7zM84 8l-1 1-1 1-5 0 0-2 0-89 0-1 1-1 5 0 1 2z"/></svg><svg class="h h12" viewBox="0 -85 100 100"><path d="M20-14l0-3 1-2 4-2 52 1 2 1 1 3 0 21-2 2-4 2-51-1-2-1-1-3zM29-15l-2 1 0 1 0 14 1 2 43 0 2-1 0-15-1-2zM92-35l2 1 0 4-2 1-84 0-2-1 0-4 2-1zM81-45l-1 2-52 0-5-1-2-4-1-10 1-5 2-1 5-1 44 0 1-2 0-7-1-1-1 0-50 0-1-1 0-4 2-1 50 0 6 1 2 3 0 11-1 4-2 2-5 1-44 0-1 1 0 7 1 1 1 1 51 0 1 1z"/></svg></div>
<div class="t" style="left:1507px;top:152px;color:#2048a0;font-size:12px;width:100px;text-align:center"><svg class="h h12" viewBox="0 -85 100 100"><path d="M22-35l-6-1-1-1-1-3 0-39 6-1 1 1 0 16 29 0 0-16 1 0 5-1 1 2 0 19 20 0 0-23 1-1 5 1 0 52-5 0-1-1 0-22-20 0 0 13-1 3-2 1-5 1zM26-17l1-4 1-2 4-1 44 0 5 0 2 2 0 4 1 20-1 4-2 2-5 1-42 0-5-1-2-2-1-2zM36-18l-2 0-1 2 0 16 1 2 40 1 2-1 1-18-1-2zM21-57l0 14 1 2 26 0 2-1 0-15z"/></svg><svg class="h h12" viewBox="0 -85 100 100"><path d="M86-44l-2 0-12-3-21-8-19 8-15 4-2-4 0-1 15-5 13-6 15-8 9-6-1-1-1 0-43 0-1-1 0-4 1-1 46 0 7 1 2 3 0 1-2 3-9 8-8 5 13 5 16 5zM48 9l-2-1 0-33-39 0-1-1 0-5 86 0 2 1 0 4-1 1-40 0 0 33-1 1z"/></svg></div>
<div class="t" style="left:1607px;top:152px;color:#2048a0;font-size:12px;width:100px;text-align:center"><svg class="h h12" viewBox="0 -85 100 100"><path d="M86 9l-2 1-50 0-5-1-2-2-1-5 1-9 1-4 3-1 3 0 42 0 1-2 0-7-1-1-2-1-47 0-1-1 0-4 2 0 48 0 5 1 2 2 1 4-1 9-1 4-3 1-3 0-42 1-1 1 0 7 1 2 2 0 48 0 2 1zM40-80l-1 14 4 7 5 6 6 5 7 4 0 1-2 4-1 0-2-1-8-4-7-7-6-7-3 5-5 6-9 7-5 3-3-4 11-9 7-9 4-10 2-12 1 0 4 0zM84-36l-1 2-1 0-5 0 0-1 0-23-21 0-1-1 0-5 22 0 0-17 0-1 1-1 5 0 1 2z"/></svg><svg class="h h12" viewBox="0 -85 100 100"><path d="M84-28l-1 1-1 0-5 0 0-17-20 0 0 5-1 3-2 2-3 0-30 0-5-1-1-2-1-3 0-31 1-5 2-1 3-1 32 0 3 1 1 2 1 7 20 0 0-14 1-1 5 1zM84-8l0 4-2 3-3 4-3 2-9 4-12 1-11-1-10-4-3-2-3-4-1-3-1-4 1-4 1-4 3-3 3-3 10-3 11-1 12 1 9 3 3 3 3 3 2 4zM23-72l-1 0-1 2 0 28 1 2 1 0 25 0 1 0 1-2 0-28-1-2-1 0zM77-8l0-3-2-2-4-4-7-3-9 0-9 0-6 3-5 4-1 5 1 5 5 4 6 2 9 1 9-1 7-2 4-4 2-2zM57-50l20 0 0-12-20 0z"/></svg></div>
<div class="t" style="left:1707px;top:152px;color:#2048a0;font-size:12px;width:208px;text-align:center"><svg class="h h12" viewBox="0 -85 100 100"><path d="M69 4l0 1-1 1-5 0 0-1-1-33-14 0-5 8-5 3-5 2-6 0-6-2-5-4-3-3-3-8-1-6 0-15 1-6 2-6 3-4 5-5 3-1 5-1 8 1 5 2 3 2 2 3 3 7 13 0 1-19 1-1 5 0zM44-46l0-6-2-7-2-5-3-3-4-3-3 0-4 0-4 3-2 3-3 5-1 13 0 7 2 6 2 6 2 3 4 3 4 0 3 0 4-3 3-3 2-5 2-7zM87 8l-1 1-1 1-4 0-1-2 0-89 1-1 1-1 4 0 1 2zM51-46l-1 12 12 0 0-21-12 0z"/></svg><svg class="h h12" viewBox="0 -85 100 100"><path d="M47-66l-4 11-5 11 7 11 6 7 5 5 0 1-3 3-1 0-10-10-8-11-7 10-6 6-10 8-1 1-3-4 0-1 12-10 9-12 7-12 5-15-1-1-1-1-26 0-1-1 0-4 1-1 33 1 2 1 0 1zM62-49l1-31 0-1 5 0 1 0 0 1 0 84 0 1-1 1-5 0-1-2 0-47-14 0-1-1 0-4 1-1zM87 8l-1 1-1 1-4 0-1-2 0-89 1-1 1-1 4 0 1 2z"/></svg></div>
<div class="t" style="left:1446px;top:169px;font-size:12px">Data2</div>
<div class="t" style="left:1507px;top:169px;font-size:12px;width:100px;text-align:center"><svg class="h h12" viewBox="0 -85 100 100"><path d="M28-46l-5 0-2-3-1-31 1-1 5 0 1 0 0 11 46 0 0-11 1 0 5 0 1 29-1 3-1 2-2 1-4 0zM48-8l-1-2 0-20-40 0-1-1 0-4 1-1 85 0 2 1 0 4-1 1-39 0 0 21-1 0zM27-64l0 11 2 1 41 0 2 0 1-1 0-11zM83 7l-1 1-55 0-4-1-3-1-1-4 0-21 1-1 5 0 1 1 0 19 1 2 55 0 1 1z"/></svg><svg class="h h12" viewBox="0 -85 100 100"><path d="M40-78l-1 13 2 6 3 6 5 5 6 5 6 4 0 1-3 4-6-3-9-8-4-5-3-5-4 7-5 7-10 8-4 3-1 0-3-4 0-1 11-9 4-4 6-12 2-6 2-14 6 0zM25-23l2-1 49 0 5 1 2 2 0 3 0 27-1 1-5 0 0-1-1-26-50-1-1-1zM77-61l0-21 1-1 5 0 0 1 1 51-1 2-5 0-1-1 0-25-21 0-1-1 0-4 1-1z"/></svg><svg class="h h12" viewBox="0 -85 100 100"><path d="M23-12l0-4 2-2 4-1 48 0 2 2 1 3 0 19-2 2-3 2-49-1-2-1-1-3zM58-42l-1 6-5 6-7 3-8 1-9-1-7-3-4-6-2-6 2-7 4-5 7-3 9-1 8 1 7 3 5 5zM32-13l-2 0 0 2 0 12 1 2 40 0 2-1 0-13-1-2zM52-42l-2-4-3-4-4-2-6-1-6 1-5 2-3 4-1 4 1 4 3 4 5 2 6 0 6 0 4-2 3-4zM80-26l0 1-1 1-5-1-1-1 0-55 0-1 1-1 5 0 1 1 0 28 14 0 1 1 0 4-1 1-14 0zM66-64l0 1-2 0-55 0-1-1 0-3 1-2 55 0 2 1zM51-76l0 1-1 0-28 0-1-1 0-4 1-1 28 0 1 1z"/></svg><svg class="h h12" viewBox="0 -85 100 100"><path d="M48 9l-2-1 0-33-39 0-1-1 0-5 86 0 2 0 0 5-1 1-40 0 0 33-1 1zM54-80l-2 4 2 4 3 5 8 7 6 4 7 4 9 2 0 2-2 4-2 0-5-2-13-6-10-8-6-8-5 8-7 6-9 6-11 5-2 0-2-4 0-1 13-6 10-8 8-10 2-4 1-6 5 0 1 1z"/></svg></div>
<div class="t" style="left:1610px;top:169px;font-size:12px">Data2 <svg class="h h12" viewBox="0 -85 100 100"><path d="M23-14l0-4 1-2 4-1 49 0 2 2 1 3 0 21-2 2-4 2-48-1-2-1-1-3zM32-15l-2 0 0 2 0 14 1 1 40 1 2-1 0-15-1-2zM62-31l-2 1-6-3-8-4-7-5-15 10-12 5-2-4 0-1 13-7 9-6 8-7 7-9-1-1-2 0-30 0-1-2 0-4 34 0 6 1 2 2 0 1-1 4-5 7-5 6 9 7 10 4 0 2zM80-28l0 1-1 1-5-1-1-1 0-53 0-1 1-1 5 0 1 1 0 28 14 0 1 1 0 4-1 1-14 0zM45-81l1 0 1 1 0 4-1 1-23 0-2-1 0-4 1-1z"/></svg><svg class="h h12" viewBox="0 -85 100 100"><path d="M85-36l-2 1-11-4-20-10-16 9-19 7-2-4 0-1 16-7 13-7 12-7 11-10-1-1-1 0-43 0-1-1 0-4 1-1 46 0 7 1 2 3-2 4-9 9-8 7 13 6 15 5 1 1zM52-35l1 1 0 22 40 0 1 1 0 4-1 1-85 0-2-1 0-4 1-1 39 0 0-22 1-1z"/></svg></div>
<div class="t" style="left:1710px;top:169px;font-size:12px;width:205px;overflow:hidden">Data2(ma(C,20)) --&gt; data2<svg class="h h12" viewBox="0 -85 100 100"><path d="M84 8l-1 1-1 1-5 0 0-2 0-89 0-1 1-1 5 0 1 2zM61-54l-1 5-1 4-2 4-3 3-8 5-9 1-10-1-7-5-5-7-1-4-1-5 1-5 1-5 2-4 3-3 7-4 10-2 9 2 8 4 2 3 3 4 1 5zM54-54l-2-8-3-5-6-3-6-1-7 1-5 3-4 6-1 7 1 7 4 5 5 3 7 1 6-1 6-3 3-5zM70-21l2 1 0 4-6 1-34 4-22 0-2 0-1-1 0-4 2-1 32-1z"/></svg> 20<svg class="h h12" viewBox="0 -85 100 100"><path d="M60-44l-1 8-1 6-4 7-3 4-4 4-5 2-9 0-6-1-4-3-4-4-3-4-2-5-1-9 0-8 1-9 1-6 3-4 3-5 6-4 9-2 9 2 6 4 5 7 3 8zM53-45l-1-7-1-6-3-6-4-4-6-3-6 1-4 2-4 4-2 4-2 6 0 14 2 11 3 5 3 3 4 2 6 1 4-2 3-2 3-3 3-6 1-7zM84 8l-1 1-1 1-5 0 0-2 0-89 0-1 1-1 5 0 1 2z"/></svg><svg class="h h12" viewBox="0 -85 100 100"><path d="M84-8l0 4-2 3-3 4-3 2-9 4-12 1-11-1-10-4-3-2-3-4-1-3-1-4 1-4 1-4 3-3 3-3 10-3 11-1 12 1 9 3 3 3 3 3 2 4zM61-74l-1 2-9 0 0 31 14-1 0 1 1 4-11 2-20 1-22 0-4-1-1-4 1-1 12 0 0-32-11 0-1-2 0-3 1-1 50 0 1 1zM77-8l0-3-2-2-4-4-7-3-9 0-9 0-6 3-5 4-1 5 1 5 5 4 6 2 9 1 9-1 7-2 4-4 2-2zM77-68l0-14 0-1 5 0 1 1 1 1 0 52-1 1-1 1-5 0 0-1 0-18-16 0-1-2 0-4 1 0 16 0 0-10-16-1-1-1 0-4zM38-40l7 0 0-32-17 0 0 32z"/></svg></div>
<div style="position:absolute;left:1442px;top:795px;width:474px;height:16px;background:#f0f0f0"></div>
<div style="position:absolute;left:1487px;top:796px;width:393px;height:14px;background:#cdcdcd"></div>
<svg style="left:1446px;top:799px" width="6" height="9" viewBox="0 0 6 9"><path d="M5 0.5L1 4.5L5 8.5" fill="none" stroke="#505050" stroke-width="1.6"/></svg>
<svg style="left:1902px;top:799px" width="6" height="9" viewBox="0 0 6 9"><path d="M1 0.5L5 4.5L1 8.5" fill="none" stroke="#505050" stroke-width="1.6"/></svg>
<div style="position:absolute;left:1436px;top:814px;width:484px;height:2px;background:#6e6e6e"></div>
<div style="position:absolute;left:0px;top:820px;width:958px;height:20px;background:#bfcddb;border-top:1px solid #909090;border-right:1px solid #a0a0a0;border-left:1px solid #a0a0a0"></div>
<svg style="left:4px;top:823px" width="17" height="16"><rect x="3.5" y="0.5" width="10" height="12" fill="#f8d890" stroke="#6a4a10"/><path d="M6 3H11M6 5.5H11M6 8H11" stroke="#6a4a10"/><rect x="0.5" y="10.5" width="16" height="5" fill="#e8a040" stroke="#6a4a10"/></svg>
<div class="t" style="left:23px;top:823px;font-size:12px"><svg class="h h12" viewBox="0 -85 100 100"><path d="M92-12l2 1 0 4-2 1-85 0-1-1 0-4 1-1 39 0 0-21-10-2-7-3-6-4-4-6-1-4 0-6 3-8 3-3 7-5 5-2 9-1 7 0 9 1 8 2 4 3 6 5 2 5 1 6-1 5-3 6-6 5-9 4-10 2 0 21zM50-71l-8 1-6 1-5 3-4 5-2 4 1 6 2 4 4 4 4 1 6 2 8 1 5-1 10-2 5-4 3-3 1-4 0-4-1-4-3-3-3-3-5-2z"/></svg><svg class="h h12" viewBox="0 -85 100 100"><path d="M83-38l-2 1-55 0-5-1-1-2-1-5 0-12 2-3 2-1 4-1 46 0 1-1 0-10-1-1-1-1-52 0-1-1 0-4 1-1 53 0 6 2 1 1 1 5-1 12-1 4-3 1-3 0-46 0-1 2 0 9 0 1 2 1 54 0 1 1zM32 9l-1-1 0-28-24 0-1-2 0-3 1-1 85 0 2 0 0 5-1 1-25 0 0 28-1 1-4 0-1-1 0-28-24 0-1 28-1 1z"/></svg> <svg class="h h12" viewBox="0 -85 100 100"><path d="M80-6l0 3-2 3-6 6-9 3-12 1-11-1-10-3-5-6-2-3-1-3 1-4 2-3 5-5 10-3 11-1 12 1 9 3 6 5 2 3zM73-6l0-2-1-2-5-4-7-2-9-1-9 1-6 2-5 4-1 4 1 4 5 4 6 2 9 0 9 0 7-2 5-4 1-2zM62-31l-2 1-6-3-8-4-7-5-15 10-12 5-2-4 0-1 13-7 9-6 8-7 7-9-1-1-2 0-30 0-1-2 0-4 34 0 6 1 2 2 0 1-1 4-5 7-5 6 9 7 10 4 0 2zM80-26l0 1-1 1-5 0-1-2 0-55 0-1 1-1 5 0 1 1 0 28 14 0 1 1 0 4-1 1-14 0zM45-81l1 0 1 1 0 4-1 1-23 0-2-1 0-4 1-1z"/></svg><svg class="h h12" viewBox="0 -85 100 100"><path d="M50-49l-10-1-8-2-6-3-4-3-2-4-1-7 2-4 3-4 4-2 7-3 7-1 10-1 8 1 8 2 6 3 4 3 2 4 0 7-1 4-3 4-4 2-7 3zM50-78l-13 2-5 2-3 2-2 2 0 5 1 3 2 2 9 4 14 0 12-1 5-3 2-2 1-3 0-3-1-3-3-2-3-2-5-1zM92-43l2 1 0 4-2 1-84 0-2-1 0-4 2-1zM82 8l-1 1-53 0-6-1-2-3 0-11 1-5 2-1 5-1 44 0 1-2 0-7 0-1-2 0-50 0-1-1 0-4 1-1 51 0 6 1 2 4 0 10-1 4-2 2-5 1-44 0-1 1 0 8 0 1 2 0 52 0 1 1z"/></svg> <svg class="h h12" viewBox="0 -85 100 100"><path d="M53-33l0 21 40 0 1 1 0 4-1 1-85 0-2-1 0-4 1-1 39 0 0-21-23 0-2-1-2-2 0-41 1-1 4-1 2 1 0 16 48 0 0-16 1-1 5 1 1 39-1 4-2 1-3 1zM26-56l0 16 1 1 44 0 2 0 1-1 0-16z"/></svg><svg class="h h12" viewBox="0 -85 100 100"><path d="M60-44l-1 8-1 6-4 7-3 4-4 4-5 2-9 0-6-1-4-3-4-4-3-4-2-5-1-9 0-8 1-9 1-6 3-4 3-5 6-4 9-2 9 2 6 4 5 7 3 8zM53-45l-1-7-1-6-3-6-4-4-6-3-6 1-4 2-4 4-2 4-2 6 0 14 2 11 3 5 3 3 4 2 6 1 4-2 3-2 3-3 3-6 1-7zM84 8l-1 1-1 1-5 0 0-2 0-89 0-1 1-1 5 0 1 2z"/></svg><svg class="h h12" viewBox="0 -85 100 100"><path d="M77-47l0-35 0-1 5 0 1 1 1 1 0 89-1 1-1 1-5 0 0-2 0-49-21 0-1-1 0-3 1-2zM56-68l-1 9-2 8-4 8-4 8-6 7-7 7-12 9-4 2-2 0-2-4 0-1 8-5 7-5 6-6 7-10 4-7 3-7 2-12 0-2-2 0-33 0 0-1 0-5 37 0 4 2 1 2z"/></svg><svg class="h h12" viewBox="0 -85 100 100"><path d="M80 8l0 1-1 1-5 0-1-2 0-89 0-1 1-1 5 0 1 1 0 37 14 0 1 1 0 4-1 1-14 0zM21-27l0 2 2 1 10 0 16-2 15-2 1 0 1 4-1 1-5 2-22 2-16 1-4-1-2-1-1-3-1-3 0-50 1-1 1 0 4 0 1 1z"/></svg> <svg class="h h12" viewBox="0 -85 100 100"><path d="M20-14l1-5 3-2 22 0 0-13-39 0-1-1 0-4 1-1 85 0 2 1 0 4-1 1-40 0 0 13 22 0 3 1 1 1 1 4 0 19-2 3-2 1-49 1-4-1-2-1-1-3zM29-15l-2 0 0 2 0 14 1 2 43 0 2-1 0-15-1-2zM54-80l-1 2 1 3 4 5 4 4 10 6 14 5 0 1-3 4-8-2-10-4-10-8-5-7-5 7-7 6-14 7-6 2-2 0-2-4 0-2 14-5 9-6 6-7 4-9 6 0z"/></svg><svg class="h h12" viewBox="0 -85 100 100"><path d="M84-35l-1 1-1 1-5 0 0-2 0-46 0-1 1-1 5 0 1 2zM34 9l-5-1-2-3 0-33 5 0 1 1 0 11 44 0 0-11 1-1 5 0 1 30-1 4-1 2-2 0-4 1zM33-10l0 11 1 2 40 0 2 0 0-1 1-12zM57-72l-3 10-3 5-4 6-5 5-6 5-7 4-13 7-2 0-2-5 1-1 15-8 6-4 8-8 6-9 1-6 0-1-2-1-32 0 0-1 0-5 36 0 5 2 1 2z"/></svg><svg class="h h12" viewBox="0 -85 100 100"><path d="M84 8l-1 1-1 1-5 0 0-2 0-89 0-1 1-1 5 0 1 2zM23-27l0 2 1 1 9 0 17-1 18-3 1 1 1 3 0 2-5 1-23 2-18 1-4-1-2-1-2-3 0-3 0-50 0-1 1 0 5 0 1 1z"/></svg><svg class="h h12" viewBox="0 -85 100 100"><path d="M66-23l-1 2-5 1-23 3-17 0-3 0-3-2-1-2-1-4 0-43 1-4 1-2 2-1 4 0 34 0 2 1 0 4-1 1-35 0-1 43 1 2 4 1 13 0 27-4 1 1zM80 8l0 1-1 1-5 0-1-2 0-89 0-1 1-1 5 0 1 1 0 37 14 0 1 1 0 4-1 1-14 0z"/></svg>.</div>
<svg style="left:929px;top:829px" width="9" height="5" viewBox="0 0 9 5"><path d="M0 0H9L4.5 5Z" fill="#000"/></svg>
<svg style="left:946px;top:825px" width="8" height="10" viewBox="0 0 8 10"><rect x="1" y="0" width="5" height="6" fill="#000"/><rect x="2" y="1" width="1.3" height="4" fill="#dce8f4"/><rect x="0" y="5" width="7" height="1.2" fill="#000"/><rect x="3" y="6" width="1.2" height="3.5" fill="#000"/></svg>
<div style="position:absolute;left:0px;top:840px;width:958px;height:2px;background:#6e6e6e"></div>
<div style="position:absolute;left:0px;top:842px;width:958px;height:178px;background:#fff;border-left:1px solid #6e6e6e;border-bottom:1px solid #6e6e6e"></div>
<div style="position:absolute;left:1px;top:842px;width:957px;height:18px;background:#f0f0f0;border-bottom:1px solid #a8a8a8"></div>
<div style="position:absolute;left:150px;top:843px;width:1px;height:16px;background:#fff;border-left:1px solid #c0c0c0"></div>
<div style="position:absolute;left:250px;top:843px;width:1px;height:16px;background:#fff;border-left:1px solid #c0c0c0"></div>
<div style="position:absolute;left:350px;top:843px;width:1px;height:16px;background:#fff;border-left:1px solid #c0c0c0"></div>
<div style="position:absolute;left:700px;top:843px;width:1px;height:16px;background:#fff;border-left:1px solid #c0c0c0"></div>
<div class="t" style="left:8px;top:845px;font-size:12px"><svg class="h h12" viewBox="0 -85 100 100"><path d="M60-44l-1 8-1 6-4 7-3 4-4 4-5 2-9 0-6-1-4-3-4-4-3-4-2-5-1-9 0-8 1-9 1-6 3-4 3-5 6-4 9-2 9 2 6 4 5 7 3 8zM53-45l-1-7-1-6-3-6-4-4-6-3-6 1-4 2-4 4-2 4-2 6 0 14 2 11 3 5 3 3 4 2 6 1 4-2 3-2 3-3 3-6 1-7zM84 8l-1 1-1 1-5 0 0-2 0-89 0-1 1-1 5 0 1 2z"/></svg> <svg class="h h12" viewBox="0 -85 100 100"><path d="M20-14l0-3 1-2 4-2 52 1 2 1 1 3 0 21-2 2-4 2-51-1-2-1-1-3zM29-15l-2 1 0 1 0 14 1 2 43 0 2-1 0-15-1-2zM92-35l2 1 0 4-2 1-84 0-2-1 0-4 2-1zM81-45l-1 2-52 0-5-1-2-4-1-10 1-5 2-1 5-1 44 0 1-2 0-7-1-1-1 0-50 0-1-1 0-4 2-1 50 0 6 1 2 3 0 11-1 4-2 2-5 1-44 0-1 1 0 7 1 1 1 1 51 0 1 1z"/></svg></div>
<div class="t" style="left:150px;top:845px;font-size:12px;width:96px;text-align:right"><svg class="h h12" viewBox="0 -85 100 100"><path d="M92-44l2 2 0 3-1 1-40 0 0 11 21 0 3 1 2 1 1 3 0 10-1 3-2 2-5 1-43 0-2 0 0 1 0 7 1 1 53 0 1 1 0 5-54 0-4 0-3-2-1-4 0-10 1-3 2-1 5-1 44 0 1-2 0-7-2-1-50 0-1 0 0-4 1-1 25 0 0-11-39 0-1-1 0-4zM73-71l-6 4-8 4 27 5 0 1-1 4-1 0-16-2-18-5-17 5-15 3-2 0-1-3 0-2 1 0 21-5 16-5 10-5 4-2-2-1-44 0 0-1 0-4 0-1 52 1 3 1 1 2-1 2z"/></svg> <svg class="h h12" viewBox="0 -85 100 100"><path d="M48 9l-2-1 0-33-39 0-1-1 0-5 86 0 2 0 0 5-1 1-40 0 0 33-1 1zM54-80l-2 4 2 4 3 5 8 7 6 4 7 4 9 2 0 2-2 4-2 0-5-2-13-6-10-8-6-8-5 8-7 6-9 6-11 5-2 0-2-4 0-1 13-6 10-8 8-10 2-4 1-6 5 0 1 1z"/></svg></div>
<div class="t" style="left:250px;top:845px;font-size:12px;width:96px;text-align:right"><svg class="h h12" viewBox="0 -85 100 100"><path d="M84-35l-1 1-6 0 0-11-23 0-4 3-4 3-8 2-8 0-6-2-7-6-4-7-1-4 0-5 2-7 3-5 5-4 6-3 7 0 6 0 6 2 4 4 4 4 22 0 0-12 1-1 5 0 1 2zM86 9l-2 1-50 0-5-1-2-2-1-5 1-9 1-4 3-1 3 0 42 0 1-2 0-7-1-1-2-1-47 0-1-1 0-4 2 0 48 0 5 1 2 2 1 4-1 9-1 4-3 1-3 0-42 1-1 1 0 7 1 2 2 0 48 0 2 1zM51-59l-1-6-4-5-5-3-6-1-6 1-5 3-4 5-1 6 1 7 4 5 5 3 6 1 6-1 5-3 4-5zM58-59l-1 8 20 0 0-13-19 0z"/></svg> <svg class="h h12" viewBox="0 -85 100 100"><path d="M48 9l-2-1 0-33-39 0-1-1 0-5 86 0 2 0 0 5-1 1-40 0 0 33-1 1zM54-80l-2 4 2 4 3 5 8 7 6 4 7 4 9 2 0 2-2 4-2 0-5-2-13-6-10-8-6-8-5 8-7 6-9 6-11 5-2 0-2-4 0-1 13-6 10-8 8-10 2-4 1-6 5 0 1 1z"/></svg></div>
<div class="t" style="left:358px;top:845px;font-size:12px"><svg class="h h12" viewBox="0 -85 100 100"><path d="M86 9l-2 1-50 0-5-1-2-2-1-5 1-9 1-4 3-1 3 0 42 0 1-2 0-7-1-1-2-1-47 0-1-1 0-4 2 0 48 0 5 1 2 2 1 4-1 9-1 4-3 1-3 0-42 1-1 1 0 7 1 2 2 0 48 0 2 1zM40-80l-1 14 4 7 5 6 6 5 7 4 0 1-2 4-1 0-2-1-8-4-7-7-6-7-3 5-5 6-9 7-5 3-3-4 11-9 7-9 4-10 2-12 1 0 4 0zM84-36l-1 2-1 0-5 0 0-1 0-23-21 0-1-1 0-5 22 0 0-17 0-1 1-1 5 0 1 2z"/></svg> <svg class="h h12" viewBox="0 -85 100 100"><path d="M84-28l-1 1-1 0-5 0 0-17-20 0 0 5-1 3-2 2-3 0-30 0-5-1-1-2-1-3 0-31 1-5 2-1 3-1 32 0 3 1 1 2 1 7 20 0 0-14 1-1 5 1zM84-8l0 4-2 3-3 4-3 2-9 4-12 1-11-1-10-4-3-2-3-4-1-3-1-4 1-4 1-4 3-3 3-3 10-3 11-1 12 1 9 3 3 3 3 3 2 4zM23-72l-1 0-1 2 0 28 1 2 1 0 25 0 1 0 1-2 0-28-1-2-1 0zM77-8l0-3-2-2-4-4-7-3-9 0-9 0-6 3-5 4-1 5 1 5 5 4 6 2 9 1 9-1 7-2 4-4 2-2zM57-50l20 0 0-12-20 0z"/></svg></div>
<div class="t" style="left:6px;top:864px;font-size:12px">Z_ETF<svg class="h h12" viewBox="0 -85 100 100"><path d="M84-17l-1 1-1 0-5 0 0-1 0-64 0-1 1-1 5 0 1 2zM86 7l-1 1-50 0-5-1-2-2-1-3 0-22 2-1 4 0 1 1 0 20 1 2 50 0 1 1zM59-55l0 5-2 5-2 4-3 3-7 5-5 1-5 1-9-2-4-2-3-3-5-7-2-5 0-5 0-5 2-5 2-4 3-3 3-3 4-2 9-2 9 2 8 5 3 3 2 4 1 5zM52-55l-1-7-4-6-5-3-7-1-6 1-5 3-4 6-1 7 1 7 3 6 6 3 6 1 7-1 5-3 4-6z"/></svg><svg class="h h12" viewBox="0 -85 100 100"><path d="M21-17l-6 0-1-2-1-2 1-56 5-1 1 2 0 23 30 0 0-23 1-1 4-1 2 2 0 26 20 0 0-32 1-1 5 1 0 91-6 1 0-2 0-52-20 0 0 23-1 2-2 2-5 0zM20-47l0 22 0 2 29 0 1-2 0-22z"/></svg><svg class="h h12" viewBox="0 -85 100 100"><path d="M54-76l-2 5 1 1 5 10 7 8 7 5 7 4 8 3 0 2-2 4-1 0-6-2-12-7-9-8-8-11-5 9-10 10-10 7-7 3-2 0-2-3 0-2 13-7 8-7 4-5 4-5 2-6 3-10 5 0zM92-12l2 1 0 4-2 1-84 0-2-2 0-3 2-1z"/></svg><svg class="h h12" viewBox="0 -85 100 100"><path d="M67-36l-1 1-3 1-19 2-23 1-5-2-1-2-1-5 0-30 0-5 2-1 3-1 37 0 1 5-1 1-35 0 0 32 0 1 2 0 12 0 16-1 14-2 1 1zM80-16l0 1-1 0-5 0-1-1 0-65 0-1 1-1 5 0 1 1 0 29 14 0 1 2 0 3-1 1-14 0zM84 7l-1 1-51 0-5-1-2-2-1-3 0-21 2-1 4 0 1 1 0 19 1 2 51 0 1 1z"/></svg><svg class="h h12" viewBox="0 -85 100 100"><path d="M54-42l-35 0 1 21 2 1 15-1 25-3 1 2 0 3 0 1-10 2-17 1-16 1-5-2-2-2-1-5 0-45 1-5 2-1 3-1 37 0 1 5-1 1-34 0-1 0-1 1 0 21 35-1 1 1 0 4zM80 8l0 1-1 1-5 0-1-2 0-89 0-1 1-1 5 0 1 1 0 37 14 0 1 1 0 4-1 1-14 0z"/></svg>_1.0<svg class="h h12" viewBox="0 -85 100 100"><path d="M20-73l1-3 1-2 4-2 51 1 2 1 1 3-1 25-1 2-4 1-51 0-2-2-1-2zM30-74l-2 1-1 1 0 16 1 3 42 0 3-1 0-17-1-2zM48-9l-1-2 0-20-40 0-1-1 0-4 1-1 85 0 2 1 0 4-1 1-39 0 0 21-1 1zM83 7l-1 1-55 0-4-1-3-1-1-4 0-23 1-1 5 1 1 0 0 21 1 2 55 0 1 1z"/></svg><svg class="h h12" viewBox="0 -85 100 100"><path d="M84 8l-1 1-1 1-5 0 0-2 0-89 0-1 1-1 5 0 1 2zM61-54l-1 5-1 4-2 4-3 3-8 5-9 1-10-1-7-5-5-7-1-4-1-5 1-5 1-5 2-4 3-3 7-4 10-2 9 2 8 4 2 3 3 4 1 5zM54-54l-2-8-3-5-6-3-6-1-7 1-5 3-4 6-1 7 1 7 4 5 5 3 7 1 6-1 6-3 3-5zM70-21l2 1 0 4-6 1-34 4-22 0-2 0-1-1 0-4 2-1 32-1z"/></svg></div>
<div class="t" style="left:358px;top:864px;font-size:12px"><svg class="h h12" viewBox="0 -85 100 100"><path d="M26-17l1-4 1-2 4-1 44 0 5 0 2 2 0 4 1 20-1 4-2 2-5 1-42 0-5-1-2-2-1-2zM36-18l-2 0-1 2 0 16 1 2 40 1 2-1 1-18-1-2zM57-71l-2 7-2 6-4 6-4 5-5 5-7 5-16 9-2 0-2-5 0-1 15-7 6-4 9-9 5-10 2-7-2-1-1 0-31 0-1-2 1-4 36 0 4 1 1 3zM77-57l0-25 1-1 5 0 0 1 1 51-1 1-5 0-1 0 0-21-21 0-1 0 0-5 1-1z"/></svg><svg class="h h12" viewBox="0 -85 100 100"><path d="M81-7l0 3-2 4-6 5-10 4-13 1-13-1-10-4-6-5-2-4 0-3 0-3 2-4 6-5 10-3 13-2 13 1 10 4 6 5 2 4zM73-70l-6 5-8 4 28 7 0 1-2 4-13-2-21-6-21 7-14 3-2-1-1-4 1-1 15-3 18-6 12-6 7-4 1-1-2-1-44 0 0-2 0-4 47 0 6 0 2 1 1 3 0 2zM74-7l-2-4-6-4-7-2-9-1-9 1-8 2-5 4-2 4 2 5 5 3 8 2 9 1 11-1 7-2 4-3zM92-39l2 1 0 4-2 1-84 0-2-1 0-4 2-1z"/></svg><svg class="h h12" viewBox="0 -85 100 100"><path d="M60-44l-1 8-1 6-4 7-3 4-4 4-5 2-9 0-6-1-4-3-4-4-3-4-2-5-1-9 0-8 1-9 1-6 3-4 3-5 6-4 9-2 9 2 6 4 5 7 3 8zM53-45l-1-7-1-6-3-6-4-4-6-3-6 1-4 2-4 4-2 4-2 6 0 14 2 11 3 5 3 3 4 2 6 1 4-2 3-2 3-3 3-6 1-7zM84 8l-1 1-1 1-5 0 0-2 0-89 0-1 1-1 5 0 1 2z"/></svg> <svg class="h h12" viewBox="0 -85 100 100"><path d="M59-61l-2 7-3 5-7 4-8 2 0 11 29-1 0 1 1 4-10 2-14 0-36 1-1-1-1-4 1-1 24 0 0-12-6-1-5-3-5-4-2-5 0-5 0-6 3-4 4-4 6-3 6-1 8 0 6 2 5 3 4 4 2 5zM52-61l-1-5-4-4-5-2-6 0-6 0-5 2-3 4-2 5 1 5 4 4 5 2 6 1 6-1 5-2 4-4zM80-15l0 1-1 0-5 0-1-1 0-66 0-1 1-1 5 0 1 1 0 33 14 0 1 1 0 4-1 1-14 0zM84 7l-1 1-55-1-3-1-1-4 0-19 1-1 5 0 1 1 0 17 1 2 51 0 1 1z"/></svg><svg class="h h12" viewBox="0 -85 100 100"><path d="M92-12l2 1 0 4-2 1-86-1 0-4 1-1 25 0 0-18-10 0-2-2-1-2 0-18 1-4 4-1 48 0 2 0 0-1 0-12 0-2-54 0-1-1 0-4 1-1 53 0 4 0 2 2 2 3 0 15 0 3-2 3-2 1-4 0-47 0-1 2 1 12 0 1 2 0 54 0 1 1 0 4-1 1-14 0 0 18zM39-12l22 0 0-18-22 0z"/></svg> <svg class="h h12" viewBox="0 -85 100 100"><path d="M70-18l1 0 1 5-6 1-30 3-22 0-6 0-1-5 2-1 26 0 0-21-16 0-3-2-1-2 0-26 0-4 1-2 3-1 3-1 40 1 0 5-1 0-38 1-1 2 0 21 1 2 1 0 38 0 1 1 0 4-1 1-20 0 0 21zM84 8l-1 1-1 1-5 0 0-2 0-89 0-1 1-1 5 0 1 2z"/></svg><svg class="h h12" viewBox="0 -85 100 100"><path d="M84-32l-1 1-1 0-5 0 0-1 0-21-18 0-1 6-3 5-5 4-6 2-6 2-5 0-9-3-7-5-4-7-1-5 0-5 2-7 3-5 5-4 7-3 9-1 8 2 7 5 5 6 1 7 18 0 0-23 1-1 5 0 1 2zM53-56l-2-7-4-5-5-3-6-1-7 1-5 3-4 5-1 7 1 6 4 5 5 3 7 2 6-2 5-3 4-5zM92 9l-1 0-9-5-4-5-5-7-6 9-4 4-6 4-2 0-7-5-5-7-3-5-5 8-5 4-5 4-5 2-3-5 1-1 9-5 6-7 3-7 1-11 6 0 0 9 3 7 5 8 6 4 4-3 5-8 3-8 1-9 6 0 1 0 0 9 2 7 5 7 3 2 8 5 0 1z"/></svg><svg class="h h12" viewBox="0 -85 100 100"><path d="M27 9l-5-1-2-3 0-31 0-1 6-1 1 1 0 11 46 0 0-11 1-1 6 1 0 30 0 3-2 2-2 1-4 0zM27-10l0 11 1 2 43 0 1 0 1-1 0-12zM54-81l-1 2 1 4 4 4 4 5 10 6 14 5 0 1-3 4-8-2-10-5-10-7-5-7-5 7-7 5-14 7-6 3-2 0-2-5 0-1 14-5 9-6 6-7 4-9 6 0zM92-42l2 2 0 3-2 1-84 0-2-1 0-4 2-1z"/></svg><svg class="h h12" viewBox="0 -85 100 100"><path d="M84 8l-1 1-1 1-5 0 0-2 0-89 0-1 1-1 5 0 1 2zM23-27l0 2 1 1 9 0 17-1 18-3 1 1 1 3 0 2-5 1-23 2-18 1-4-1-2-1-2-3 0-3 0-50 0-1 1 0 5 0 1 1z"/></svg><svg class="h h12" viewBox="0 -85 100 100"><path d="M66-23l-1 2-5 1-23 3-17 0-3 0-3-2-1-2-1-4 0-43 1-4 1-2 2-1 4 0 34 0 2 1 0 4-1 1-35 0-1 43 1 2 4 1 13 0 27-4 1 1zM80 8l0 1-1 1-5 0-1-2 0-89 0-1 1-1 5 0 1 1 0 37 14 0 1 1 0 4-1 1-14 0z"/></svg>.</div>
<div style="position:absolute;left:958px;top:820px;width:962px;height:200px;background:#f0f0f0"></div>
<div style="position:absolute;left:962px;top:820px;width:958px;height:20px;background:#bfcddb;border-top:1px solid #909090;border-right:1px solid #a0a0a0;border-left:1px solid #a0a0a0"></div>
<svg style="left:966px;top:822px" width="17" height="17"><path d="M3 1L6 5M14 1L11 5M0 9H3M14 9H17M1 15L4 12M16 15L13 12" stroke="#333"/><ellipse cx="8.5" cy="10" rx="6" ry="6" fill="#cc1818" stroke="#222"/><rect x="8" y="4" width="1" height="12" fill="#333"/><path d="M4 3.5H13V6H4Z" fill="#444"/><circle cx="6" cy="9" r="1.2" fill="#fff"/><circle cx="11" cy="9" r="1.2" fill="#fff"/><circle cx="6" cy="13" r="1" fill="#fff"/><circle cx="11" cy="13" r="1" fill="#fff"/></svg>
<div class="t" style="left:986px;top:823px;font-size:12px"><svg class="h h12" viewBox="0 -85 100 100"><path d="M84 8l-1 1-1 1-5 0 0-2 0-89 0-1 1-1 5 0 1 2zM70-23l-1 2-5 1-27 3-15 1-4-1-2-1-2-3 0-4 0-43 0-4 2-2 2-1 4 0 34 0 1 1 0 4 0 1-36 0 0 44 0 2 7 0 14 0 26-4 1 1z"/></svg><svg class="h h12" viewBox="0 -85 100 100"><path d="M21-17l-6 0-1-2-1-2 1-56 5-1 1 2 0 23 30 0 0-23 1-1 4-1 2 2 0 26 20 0 0-32 1-1 5 1 0 91-6 1 0-2 0-52-20 0 0 23-1 2-2 2-5 0zM20-47l0 22 0 2 29 0 1-2 0-22z"/></svg><svg class="h h12" viewBox="0 -85 100 100"><path d="M84-29l-1 1-1 0-5 0 0-1 0-52 0-1 1-1 5 0 1 2zM84-8l0 4-2 3-3 4-3 2-9 4-12 1-11-1-10-4-3-2-3-4-1-3-1-4 1-4 1-4 3-3 3-3 10-3 11-1 12 1 9 3 3 3 3 3 2 4zM77-8l0-3-2-2-4-4-7-3-9 0-9 0-6 3-5 4-1 5 1 5 5 4 6 2 9 1 9-1 7-2 4-4 2-2zM57-71l-2 7-3 6-3 6-5 5-5 5-7 5-16 9-2 0-2-5 1-1 14-7 6-4 9-9 6-10 1-7-1-1-1 0-32 0 0-2 0-4 36 0 5 1 1 3z"/></svg> <svg class="h h12" viewBox="0 -85 100 100"><path d="M80-6l0 3-2 3-6 6-9 3-12 1-11-1-10-3-5-6-2-3-1-3 1-4 2-3 5-5 10-3 11-1 12 1 9 3 6 5 2 3zM73-6l0-2-1-2-5-4-7-2-9-1-9 1-6 2-5 4-1 4 1 4 5 4 6 2 9 0 9 0 7-2 5-4 1-2zM62-31l-2 1-6-3-8-4-7-5-15 10-12 5-2-4 0-1 13-7 9-6 8-7 7-9-1-1-2 0-30 0-1-2 0-4 34 0 6 1 2 2 0 1-1 4-5 7-5 6 9 7 10 4 0 2zM80-26l0 1-1 1-5 0-1-2 0-55 0-1 1-1 5 0 1 1 0 28 14 0 1 1 0 4-1 1-14 0zM45-81l1 0 1 1 0 4-1 1-23 0-2-1 0-4 1-1z"/></svg><svg class="h h12" viewBox="0 -85 100 100"><path d="M50-49l-10-1-8-2-6-3-4-3-2-4-1-7 2-4 3-4 4-2 7-3 7-1 10-1 8 1 8 2 6 3 4 3 2 4 0 7-1 4-3 4-4 2-7 3zM50-78l-13 2-5 2-3 2-2 2 0 5 1 3 2 2 9 4 14 0 12-1 5-3 2-2 1-3 0-3-1-3-3-2-3-2-5-1zM92-43l2 1 0 4-2 1-84 0-2-1 0-4 2-1zM82 8l-1 1-53 0-6-1-2-3 0-11 1-5 2-1 5-1 44 0 1-2 0-7 0-1-2 0-50 0-1-1 0-4 1-1 51 0 6 1 2 4 0 10-1 4-2 2-5 1-44 0-1 1 0 8 0 1 2 0 52 0 1 1z"/></svg> <svg class="h h12" viewBox="0 -85 100 100"><path d="M53-33l0 21 40 0 1 1 0 4-1 1-85 0-2-1 0-4 1-1 39 0 0-21-23 0-2-1-2-2 0-41 1-1 4-1 2 1 0 16 48 0 0-16 1-1 5 1 1 39-1 4-2 1-3 1zM26-56l0 16 1 1 44 0 2 0 1-1 0-16z"/></svg><svg class="h h12" viewBox="0 -85 100 100"><path d="M60-44l-1 8-1 6-4 7-3 4-4 4-5 2-9 0-6-1-4-3-4-4-3-4-2-5-1-9 0-8 1-9 1-6 3-4 3-5 6-4 9-2 9 2 6 4 5 7 3 8zM53-45l-1-7-1-6-3-6-4-4-6-3-6 1-4 2-4 4-2 4-2 6 0 14 2 11 3 5 3 3 4 2 6 1 4-2 3-2 3-3 3-6 1-7zM84 8l-1 1-1 1-5 0 0-2 0-89 0-1 1-1 5 0 1 2z"/></svg><svg class="h h12" viewBox="0 -85 100 100"><path d="M77-47l0-35 0-1 5 0 1 1 1 1 0 89-1 1-1 1-5 0 0-2 0-49-21 0-1-1 0-3 1-2zM56-68l-1 9-2 8-4 8-4 8-6 7-7 7-12 9-4 2-2 0-2-4 0-1 8-5 7-5 6-6 7-10 4-7 3-7 2-12 0-2-2 0-33 0 0-1 0-5 37 0 4 2 1 2z"/></svg><svg class="h h12" viewBox="0 -85 100 100"><path d="M80 8l0 1-1 1-5 0-1-2 0-89 0-1 1-1 5 0 1 1 0 37 14 0 1 1 0 4-1 1-14 0zM21-27l0 2 2 1 10 0 16-2 15-2 1 0 1 4-1 1-5 2-22 2-16 1-4-1-2-1-1-3-1-3 0-50 1-1 1 0 4 0 1 1z"/></svg> <svg class="h h12" viewBox="0 -85 100 100"><path d="M20-14l1-5 3-2 22 0 0-13-39 0-1-1 0-4 1-1 85 0 2 1 0 4-1 1-40 0 0 13 22 0 3 1 1 1 1 4 0 19-2 3-2 1-49 1-4-1-2-1-1-3zM29-15l-2 0 0 2 0 14 1 2 43 0 2-1 0-15-1-2zM54-80l-1 2 1 3 4 5 4 4 10 6 14 5 0 1-3 4-8-2-10-4-10-8-5-7-5 7-7 6-14 7-6 2-2 0-2-4 0-2 14-5 9-6 6-7 4-9 6 0z"/></svg><svg class="h h12" viewBox="0 -85 100 100"><path d="M84-35l-1 1-1 1-5 0 0-2 0-46 0-1 1-1 5 0 1 2zM34 9l-5-1-2-3 0-33 5 0 1 1 0 11 44 0 0-11 1-1 5 0 1 30-1 4-1 2-2 0-4 1zM33-10l0 11 1 2 40 0 2 0 0-1 1-12zM57-72l-3 10-3 5-4 6-5 5-6 5-7 4-13 7-2 0-2-5 1-1 15-8 6-4 8-8 6-9 1-6 0-1-2-1-32 0 0-1 0-5 36 0 5 2 1 2z"/></svg><svg class="h h12" viewBox="0 -85 100 100"><path d="M84 8l-1 1-1 1-5 0 0-2 0-89 0-1 1-1 5 0 1 2zM23-27l0 2 1 1 9 0 17-1 18-3 1 1 1 3 0 2-5 1-23 2-18 1-4-1-2-1-2-3 0-3 0-50 0-1 1 0 5 0 1 1z"/></svg><svg class="h h12" viewBox="0 -85 100 100"><path d="M66-23l-1 2-5 1-23 3-17 0-3 0-3-2-1-2-1-4 0-43 1-4 1-2 2-1 4 0 34 0 2 1 0 4-1 1-35 0-1 43 1 2 4 1 13 0 27-4 1 1zM80 8l0 1-1 1-5 0-1-2 0-89 0-1 1-1 5 0 1 1 0 37 14 0 1 1 0 4-1 1-14 0z"/></svg>.</div>
<svg style="left:1891px;top:829px" width="9" height="5" viewBox="0 0 9 5"><path d="M0 0H9L4.5 5Z" fill="#000"/></svg>
<svg style="left:1908px;top:825px" width="8" height="10" viewBox="0 0 8 10"><rect x="1" y="0" width="5" height="6" fill="#000"/><rect x="2" y="1" width="1.3" height="4" fill="#dce8f4"/><rect x="0" y="5" width="7" height="1.2" fill="#000"/><rect x="3" y="6" width="1.2" height="3.5" fill="#000"/></svg>
<div style="position:absolute;left:962px;top:840px;width:958px;height:1px;background:#8a8a8a"></div>
<div style="position:absolute;left:962px;top:841px;width:958px;height:25px;background:#f0f0f0;border-left:1px solid #8a8a8a"></div>
<svg style="left:967px;top:846px" width="17" height="15" viewBox="0 0 17 15"><path d="M5 1H15Q16 9 13 14H3Q5 8 5 1Z" fill="#f0d860" stroke="#b89a20"/><circle cx="3" cy="4" r="2.2" fill="#5a8ae0"/><circle cx="7" cy="5" r="2.2" fill="#3a6ad0"/></svg>
<svg style="left:988px;top:845px" width="17" height="16" viewBox="0 0 17 16"><path d="M1 2H8M1 5H6M9 14H16M11 11H16" stroke="#a0a0a0"/><path d="M3 10L11 2L16 6L8 14Z" fill="#f0b0a0" stroke="#c08070"/><path d="M3 10L8 14L6 15L1 12Z" fill="#e8d0a0"/></svg>
<div style="position:absolute;left:962px;top:865px;width:1px;height:155px;background:#8a8a8a"></div>
<div style="position:absolute;left:963px;top:866px;width:940px;height:153px;background:#fff"></div>
<div style="position:absolute;left:963px;top:866px;width:939px;height:18px;background:#f0f0f0;border-bottom:1px solid #a8a8a8"></div>
<div style="position:absolute;left:963px;top:865px;width:956px;height:1px;background:#a0a0a0"></div>
<div style="position:absolute;left:1112px;top:867px;width:1px;height:16px;background:#fff;border-left:1px solid #c0c0c0"></div>
<div style="position:absolute;left:1512px;top:867px;width:1px;height:16px;background:#fff;border-left:1px solid #c0c0c0"></div>
<div class="t" style="left:970px;top:869px;font-size:12px"><svg class="h h12" viewBox="0 -85 100 100"><path d="M41-76l-1 13-2 11 2 4 2 7 6 9 7 8 6 6 0 1-4 4-4-3-10-12-8-13-3 8-5 8-9 11-4 4-1 0-3-3 0-2 8-9 5-7 4-6 2-8 3-12 2-20 1-1 5 0zM84 8l-1 1-1 1-5 0 0-2 0-89 0-1 1-1 5 0 1 2z"/></svg><svg class="h h12" viewBox="0 -85 100 100"><path d="M54-70l-1 7-3 7-4 6-4 6-6 6-6 4-8 5-8 4-2 0-2-4 0-2 11-5 6-4 8-7 4-5 5-8 3-10-3-1-31 0-1-1 1-5 36 0 4 2 1 2zM80-17l0 1-1 0-5 0-1-1 0-64 0-1 1-1 5 0 1 1 0 30 14 0 1 1 0 4-1 1-14 0zM84 7l-1 1-51 0-5-1-2-2 0-3 0-22 1 0 5 0 0 20 1 2 51 0 1 1z"/></svg></div>
<div class="t" style="left:1120px;top:869px;font-size:12px"><svg class="h h12" viewBox="0 -85 100 100"><path d="M68-45l12 0 0-37 2-1 4 0 1 1 0 90-1 2-5 0-1-2 0-47-12 0-1 44-1 1-4 0-1-1 0-85 0-1 1 0 5 0 0 1zM21-27l0 2 1 0 6 1 11-1 15-2 1 0 1 4-1 1-4 1-16 3-13 0-4-1-2-1-1-3-1-3 0-48 1-1 1-1 4 1 1 1z"/></svg><svg class="h h12" viewBox="0 -85 100 100"><path d="M92-35l2 1 0 4-2 1-84 0-2-2 0-3 1-1 23 0 0-16-6-4-3-3-2-5 1-7 4-5 6-3 7-3 11-1 9 1 11 2 8 5 4 5 1 6-2 4-3 4-6 3 0 17zM81-6l-2 6-3 4-4 2-10 3-12 1-14-1-9-3-6-5-2-4 0-3 1-7 4-3 4-2 9-3 13-1 12 1 10 3 4 2 3 3zM50-76l-11 1-9 4-2 2-2 2 0 4 2 2 2 2 5 3 12 2 14-1 9-4 2-2 2-2-1-5-2-2-3-2-5-2zM74-6l-2-4-4-3-7-2-11-1-9 0-8 2-6 4-1 4 1 4 6 4 8 1 9 1 9-1 7-1 6-4zM50-48l-13-1 0 14 26 0 0-15z"/></svg></div>
<div class="t" style="left:968px;top:888px;font-size:12px;letter-spacing:0.25px">2016-08-17  9:32:00</div>
<div class="t" style="left:1120px;top:888px;font-size:12px">IBS 1.00</div>
<div class="t" style="left:968px;top:904px;font-size:12px;letter-spacing:0.25px">2016-08-26  9:57:00</div>
<div class="t" style="left:1120px;top:904px;font-size:12px">IBS 1.00</div>
<div class="t" style="left:968px;top:920px;font-size:12px;letter-spacing:0.25px">2016-08-26  9:57:00</div>
<div class="t" style="left:1120px;top:920px;font-size:12px">IBS 1.00</div>
<div class="t" style="left:968px;top:936px;font-size:12px;letter-spacing:0.25px">2016-09-07  9:32:00</div>
<div class="t" style="left:1120px;top:936px;font-size:12px">IBS 0.93</div>
<div class="t" style="left:968px;top:952px;font-size:12px;letter-spacing:0.25px">2016-10-06 14:30:00</div>
<div class="t" style="left:1120px;top:952px;font-size:12px">IBS 0.81</div>
<div class="t" style="left:968px;top:968px;font-size:12px;letter-spacing:0.25px">2016-10-06 14:30:00</div>
<div class="t" style="left:1120px;top:968px;font-size:12px">IBS 0.81</div>
<div class="t" style="left:968px;top:984px;font-size:12px;letter-spacing:0.25px">2016-10-06 14:30:00</div>
<div class="t" style="left:1120px;top:984px;font-size:12px">IBS 0.81</div>
<div class="t" style="left:968px;top:1000px;font-size:12px;letter-spacing:0.25px">2016-10-06 14:30:00</div>
<div class="t" style="left:1120px;top:1000px;font-size:12px">IBS 0.81</div>
<div style="position:absolute;left:1902px;top:866px;width:16px;height:153px;background:#f0f0f0"></div>
<svg style="left:1906px;top:872px" width="9" height="6" viewBox="0 0 9 6"><path d="M1 5.5L4.5 2L8 5.5" fill="none" stroke="#555" stroke-width="2"/></svg>
<div style="position:absolute;left:1903px;top:883px;width:14px;height:17px;background:#cdcdcd"></div>
<svg style="left:1906px;top:1006px" width="9" height="6" viewBox="0 0 9 6"><path d="M1 0.5L4.5 4L8 0.5" fill="none" stroke="#555" stroke-width="2"/></svg>
<div style="position:absolute;left:962px;top:1019px;width:958px;height:1px;background:#6e6e6e"></div>
<div style="position:absolute;left:1919px;top:841px;width:1px;height:179px;background:#606060"></div>
<div style="position:absolute;left:0px;top:1020px;width:1920px;height:20px;background:#f0f0f0"></div>
<div class="t" style="left:3px;top:1024px;font-size:11px">Ready</div>
<div style="position:absolute;left:1812px;top:1022px;width:32px;height:18px;border:1px solid #c8c8c8;border-right-color:#fff;border-bottom-color:#fff"></div>
<div class="t" style="left:1812px;top:1024px;font-size:12px;width:32px;text-align:center;color:#6a6a6a">CAP</div>
<div style="position:absolute;left:1846px;top:1022px;width:35px;height:18px;border:1px solid #c8c8c8;border-right-color:#fff;border-bottom-color:#fff"></div>
<div class="t" style="left:1846px;top:1024px;font-size:12px;width:35px;text-align:center;color:#6a6a6a">NUM</div>
<div style="position:absolute;left:1884px;top:1022px;width:35px;height:18px;border:1px solid #c8c8c8;border-right-color:#fff;border-bottom-color:#fff"></div>
<div class="t" style="left:1884px;top:1024px;font-size:12px;width:35px;text-align:center;color:#6a6a6a">SCRL</div>
<div style="position:absolute;left:955px;top:812px;width:234px;height:213px;border:5px solid #ed1c24"></div>
<div style="position:absolute;left:0px;top:1040px;width:1920px;height:40px;background:linear-gradient(90deg,#1e3038 0%,#22363f 30%,#22363f 50%,#1e2d3c 68%,#1c2947 80%,#1c2846 100%)"></div>
<svg style="left:16px;top:1051px" width="17" height="17" viewBox="0 0 17 17"><path d="M0 2.4L7 1.4V8.2H0ZM7.8 1.3L17 0V8.2H7.8ZM0 9H7V15.7L0 14.7ZM7.8 9H17V17L7.8 15.8Z" fill="#fff"/></svg>
<div style="position:absolute;left:48px;top:1040px;width:343px;height:40px;background:#f2f2f2;border-top:1px solid #c4c4c4"></div>
<svg style="left:60px;top:1051px" width="18" height="18" viewBox="0 0 18 18"><circle cx="11" cy="7" r="5.5" fill="none" stroke="#222" stroke-width="1.4"/><path d="M7 11L1 17" stroke="#222" stroke-width="1.6"/></svg>
<div class="t" style="left:88px;top:1051px;font-size:15px;line-height:18px;color:#333"><svg class="h h15" viewBox="0 -85 100 100"><path d="M26-17l1-4 1-2 4-1 44 0 5 0 2 2 0 4 1 20-1 4-2 2-5 1-42 0-5-1-2-2-1-2zM36-18l-2 0-1 2 0 16 1 2 40 1 2-1 1-18-1-2zM57-71l-2 7-2 6-4 6-4 5-5 5-7 5-16 9-2 0-2-5 0-1 15-7 6-4 9-9 5-10 2-7-2-1-1 0-31 0-1-2 1-4 36 0 4 1 1 3zM77-57l0-25 1-1 5 0 0 1 1 51-1 1-5 0-1 0 0-21-21 0-1 0 0-5 1-1z"/></svg><svg class="h h15" viewBox="0 -85 100 100"><path d="M68-31l-1 1-1 0-4 0-1-1 0-49 1-1 5 0 0 1 1 23 12 0 0-25 2-1 4 0 1 2 0 52-2 1-4 0-1-1 0-22-12 0zM26-22l1-1 52 0 5 1 2 2 1 3 0 26-2 1-4 0-1-1 0-24-1-2-52 0-1-1zM36-77l0 7-2 7 2 4 6 9 6 6 6 4 0 2-3 4-4-3-8-7-8-11-5 9-4 6-9 7-1 1-4-5 10-9 6-9 4-11 1-12 1-1 5 0z"/></svg><svg class="h h15" viewBox="0 -85 100 100"><path d="M58-28l-1 7-5 6-7 4-8 2-9-2-7-4-4-6-2-7 2-8 4-6 7-4 9-2 8 2 7 4 5 6zM80 8l0 1-1 1-5 0-1-2 0-89 0-1 1-1 5 0 1 1 0 38 14 0 1 1 0 4-1 1-14 0zM52-28l-2-6-3-4-4-3-6-1-6 1-5 3-3 4-1 6 1 5 3 4 5 3 6 1 6-1 4-3 3-4zM66-56l0 1-2 0-55 0-1-1 0-4 1-1 55 0 2 1zM51-73l0 1-1 0-28 0-1-1 0-4 1-1 28 0 1 1z"/></svg><svg class="h h15" viewBox="0 -85 100 100"><path d="M21-13l-5-1-2-3 0-27 1-2 4-2 24 0 1-19-1-2-1 0-27 0-1-1 0-4 1-1 28 0 5 1 2 1 1 4 0 20-1 5-2 1-3 1-24 1-1 21 2 1 14 0 23-3 1 1 1 4-1 1-14 2-15 1zM77-58l0-24 0-1 5 0 1 1 1 1 0 89-1 1-1 1-5 0 0-2 0-38-19 0-1-1 0-4 1-1 19 0 0-16-19 0-1-1 0-5z"/></svg><svg class="h h15" viewBox="0 -85 100 100"><path d="M84-18l-1 1-1 0-5 0 0-25-20 0-1 8-2 1-3 1-30 0-4-1-1-1-1-1-1-3 0-32 0-4 2-2 2-1 4 0 30 0 3 1 1 2 1 8 20 0 0-16 1-1 5 1zM23-71l-1 0-1 2 0 28 1 2 1 1 25 0 1-1 1-2 0-28-1-2-1 0zM87 7l-2 1-50 0-5-1-2-2-1-3 0-23 2-1 5 1 0 21 1 2 50 0 2 1zM57-48l20 0 0-13-20 0z"/></svg> <svg class="h h15" viewBox="0 -85 100 100"><path d="M84 8l-1 1-1 1-5 0 0-1 0-36-22 0-3 6-4 4-6 3-5 2-5-1-6-1-5-3-3-4-3-4-3-8-1-9 0-5 1-9 2-6 4-7 3-3 8-4 10 0 4 1 6 3 3 4 3 6 22 0 0-20 1-1 5 1zM52-45l-1-6-1-7-3-6-3-3-3-2-4-1-7 0-3 2-3 3-3 5-3 11 1 13 2 7 2 3 4 5 3 2 7 0 6-2 4-5 3-5 1-7zM59-44l-2 11 20 0 0-24-20 0z"/></svg><svg class="h h15" viewBox="0 -85 100 100"><path d="M84 8l-1 1-1 1-5 0 0-2 0-89 0-1 1-1 5 0 1 2zM57-68l-1 9-3 8-3 8-5 8-5 7-7 7-12 9-5 2-1 0-3-4 0-1 9-5 7-5 6-6 7-10 4-7 3-7 2-12-1-2-1 0-33 0-1-1 1-5 36 0 4 2 1 2z"/></svg><svg class="h h15" viewBox="0 -85 100 100"><path d="M69 4l0 1-1 1-5 0-1-2 0-46-11 0-1 9-3 8-4 5-4 3-3 1-6 1-7-1-5-3-5-5-3-8-1-6 0-15 1-6 2-6 3-4 5-5 3-1 7-1 6 1 4 1 4 4 4 7 3 8 0 7 11 0 1-32 1-1 5 0zM44-46l0-6-2-7-2-5-3-3-4-3-3 0-4 0-4 3-2 3-3 5-1 13 0 7 2 6 2 6 2 3 4 3 4 0 3 0 4-3 3-3 2-5 2-7zM87 8l-1 1-1 1-4 0-1-2 0-89 1-1 1-1 4 0 1 2z"/></svg> <svg class="h h15" viewBox="0 -85 100 100"><path d="M84-35l-1 1-1 0-5 0 0-1 0-46 0-1 1-1 5 0 1 2zM59-58l0 5-2 4-5 7-7 5-10 2-9-2-7-5-5-7-2-4 0-5 0-5 2-4 2-4 3-3 7-5 9-1 9 1 8 5 3 3 2 4 2 4zM52-58l-1-7-4-5-5-3-7-1-6 1-5 3-4 5-1 7 1 7 4 5 5 3 6 1 7-1 5-3 4-5zM34 9l-5-1-2-3 0-33 5 0 1 1 0 11 44 0 0-11 1-1 5 0 1 30-1 4-1 2-2 0-4 1zM33-10l0 11 2 2 39 0 2 0 0-1 1-12z"/></svg><svg class="h h15" viewBox="0 -85 100 100"><path d="M22-31l-5-1-3-3 0-16 1-5 2-1 3-1 23-1 1-1 0-11-1-1-28 0-1-2 1-4 1 0 27 0 6 1 1 2 1 3 0 13-1 4-2 2-3 1-23 0-1 1 0 13 2 1 11 0 24-3 1 1 0 4-5 2-13 1zM77-68l0-14 0-1 5 0 1 1 1 1 0 53-1 1-1 1-5 0 0-1 0-19-18 0-1-1 0-4 1-1 18 0 0-10-18 0-1-1 0-5zM25-20l2-1 49 0 5 1 2 2 0 3 0 24-1 1-5 0 0-1 0-22-1-2-50 0-1-1z"/></svg><svg class="h h15" viewBox="0 -85 100 100"><path d="M58-28l-1 7-5 6-7 4-8 2-9-2-7-4-4-6-2-7 2-8 4-6 7-4 9-2 8 2 7 4 5 6zM80 8l0 1-1 1-5 0-1-2 0-89 0-1 1-1 5 0 1 1 0 38 14 0 1 1 0 4-1 1-14 0zM52-28l-2-6-3-4-4-3-6-1-6 1-5 3-3 4-1 6 1 5 3 4 5 3 6 1 6-1 4-3 3-4zM66-56l0 1-2 0-55 0-1-1 0-4 1-1 55 0 2 1zM51-73l0 1-1 0-28 0-1-1 0-4 1-1 28 0 1 1z"/></svg><svg class="h h15" viewBox="0 -85 100 100"><path d="M34 9l-5-1-2-3 0-33 5 0 1 1 0 11 44 0 0-11 1-1 5 0 1 30-1 3-1 2-2 1-4 1zM40-79l-2 12 3 8 8 10 11 7 0 2-3 4-4-3-9-7-5-6-4-5-4 7-5 6-9 8-4 3-2 0-3-3 0-2 11-8 8-10 4-11 2-13 6-1zM33-10l0 11 2 2 39 0 2-1 1-12zM84-35l-1 1-1 1-5 0 0-2 0-46 0-1 1-1 5 0 1 2z"/></svg><svg class="h h15" viewBox="0 -85 100 100"><path d="M41-76l-1 13-2 11 2 4 2 7 6 9 7 8 6 6 0 1-4 4-4-3-10-12-8-13-3 8-5 8-9 11-4 4-1 0-3-3 0-2 8-9 5-7 4-6 2-8 3-12 2-20 1-1 5 0zM84 8l-1 1-1 1-5 0 0-2 0-89 0-1 1-1 5 0 1 2z"/></svg><svg class="h h15" viewBox="0 -85 100 100"><path d="M92-12l2 1 0 4-2 1-85 0-1-1 0-4 1-1 39 0 0-21-10-2-7-3-6-4-4-6-1-4 0-6 3-8 3-3 7-5 5-2 9-1 7 0 9 1 8 2 4 3 6 5 2 5 1 6-1 5-3 6-6 5-9 4-10 2 0 21zM50-71l-8 1-6 1-5 3-4 5-2 4 1 6 2 4 4 4 4 1 6 2 8 1 5-1 10-2 5-4 3-3 1-4 0-4-1-4-3-3-3-3-5-2z"/></svg>.</div>
<svg style="left:406px;top:1051px" width="18" height="18" viewBox="0 0 18 18"><circle cx="9" cy="9" r="7.5" fill="none" stroke="#fff" stroke-width="1.8"/></svg>
<svg style="left:455px;top:1051px" width="20" height="18" viewBox="0 0 20 18"><path d="M1 1H13M1 17H13M4 4H13V14H4Z" fill="none" stroke="#fff" stroke-width="1.6"/><path d="M17 1V17" stroke="#fff" stroke-width="1.6" stroke-dasharray="3 2"/></svg>
<svg style="left:505px;top:1049px" width="21" height="22" viewBox="0 0 21 22"><path d="M10.5 4C4.5 4 1.5 8.5 1.5 13.5C1.5 18.5 5 21.5 10.5 21.5C13.5 21.5 16 20.8 18 19.5V15.5C16 17 13.5 17.8 11 17.8C8 17.8 6 16.3 6 14H20C20.3 12.5 20.3 11.5 20 10C19 6 15.5 4 10.5 4ZM6.3 10.5C6.8 8.5 8.5 7.5 10.8 7.5C13 7.5 14.8 8.5 15.3 10.5Z" fill="#1a7ad8"/><path d="M0.5 9C2 4 6 1 11 1C14 1 16 2 17 3C14 2 8 2.5 5 7Z" fill="#1a7ad8"/></svg>
<div style="position:absolute;left:495px;top:1078px;width:40px;height:2px;background:#76b9ed"></div>
<svg style="left:552px;top:1049px" width="24" height="24" viewBox="0 0 24 24"><circle cx="12" cy="12" r="11" fill="#db4437"/><path d="M12 12L2.5 6.5A11 11 0 0 1 21.5 6.5Z" fill="#db4437"/><path d="M12 12L21.5 6.5A11 11 0 0 1 12 23Z" fill="#f4c20d"/><path d="M12 12L12 23A11 11 0 0 1 2.5 6.5Z" fill="#0f9d58"/><circle cx="12" cy="12" r="5" fill="#fff"/><circle cx="12" cy="12" r="4" fill="#4285f4"/></svg>
<svg style="left:602px;top:1050px" width="22" height="20" viewBox="0 0 22 20"><path d="M0 1.5Q0 0.5 1 0.5H8L9.5 2H21V19H0Z" fill="#e8a818"/><rect x="0" y="3" width="22" height="16" fill="#fcd462"/><path d="M4 19V11H18V19H14V15H8V19Z" fill="#3a8ee0"/></svg>
<svg style="left:653px;top:1048px" width="21" height="25" viewBox="0 0 21 25"><rect x="1" y="1" width="10" height="22" fill="#b8b8b8" stroke="#777"/><path d="M3 4H9M3 7H9M3 10H9" stroke="#666"/><rect x="11" y="15" width="9" height="8" fill="#e8b020" stroke="#8a6010"/><path d="M13 15V12A2.5 2.5 0 0 1 18 12V15" fill="none" stroke="#8a6010" stroke-width="1.4"/></svg>
<svg style="left:700px;top:1049px" width="24" height="23" viewBox="0 0 24 23"><rect x="9" y="2" width="14" height="19" fill="#fff" stroke="#1d6f42"/><path d="M12 6H21M12 10H21M12 14H21M16 3V20" stroke="#1d6f42"/><path d="M0 3L13 1V22L0 20Z" fill="#1d6f42"/><text x="3" y="16" font-size="10" font-weight="bold" fill="#fff" font-family="Liberation Sans">X</text></svg>
<div style="position:absolute;left:736px;top:1040px;width:48px;height:40px;background:#4a5860"></div>
<svg style="left:749px;top:1048px" width="23" height="23" viewBox="0 0 23 23"><defs><radialGradient id="gyl2" cx="0.5" cy="0.5" r="0.5"><stop offset="0.4" stop-color="#60f000"/><stop offset="1" stop-color="#30c000"/></radialGradient></defs><circle cx="11.5" cy="11.5" r="11" fill="url(#gyl2)" stroke="#2a8a10"/><text x="11.5" y="15.5" font-size="11" font-weight="bold" font-style="italic" text-anchor="middle" fill="#0a3a10" font-family="Liberation Serif">YL</text></svg>
<div style="position:absolute;left:736px;top:1078px;width:48px;height:2px;background:#76b9ed"></div>
<svg style="left:797px;top:1048px" width="24" height="24" viewBox="0 0 24 24"><defs><linearGradient id="gyt" x1="0" y1="0" x2="0" y2="1"><stop offset="0" stop-color="#4a8ae8"/><stop offset="1" stop-color="#0a2a8a"/></linearGradient></defs><rect x="0.5" y="0.5" width="23" height="23" fill="url(#gyt)" stroke="#2a4aa0"/><path d="M6 13Q14 11 19 4" stroke="#e81010" stroke-width="2.2" fill="none"/><path d="M16 3L22 2L20 8Z" fill="#e81010"/><text x="12" y="21" font-size="11" font-weight="bold" font-style="italic" text-anchor="middle" fill="#fff" font-family="Liberation Serif">YT</text></svg>
<div style="position:absolute;left:789px;top:1078px;width:40px;height:2px;background:#76b9ed"></div>
<svg style="left:845px;top:1048px" width="25" height="24" viewBox="0 0 25 24"><path d="M11 4C5 4 1 8 1 13C1 17 4 19 7 18C9 17.5 9 15 11 15C13 15 12 19 16 19C19 19 21 16 21 12C21 7 17 4 11 4Z" fill="#cfe2f2" stroke="#8aa6c0"/><circle cx="6" cy="12" r="1.8" fill="#e84040"/><circle cx="9" cy="8" r="1.8" fill="#60c040"/><circle cx="14" cy="7" r="1.8" fill="#f0b030"/><circle cx="10" cy="13" r="1.2" fill="#2a4a6a"/><path d="M12 22L21 4" stroke="#e08a30" stroke-width="2"/><path d="M20 5L23 0.5L25 2L22 6Z" fill="#e8c070"/></svg>
<div style="position:absolute;left:838px;top:1078px;width:40px;height:2px;background:#76b9ed"></div>
<svg style="left:1697px;top:1055px" width="12" height="8" viewBox="0 0 12 8"><path d="M1 7L6 1.5L11 7" fill="none" stroke="#fff" stroke-width="1.3"/></svg>
<svg style="left:1720px;top:1052px" width="18" height="16" viewBox="0 0 18 16"><rect x="3.5" y="3.5" width="13" height="9" fill="none" stroke="#fff" stroke-width="1.2"/><path d="M10 13V15M6 15.5H14" stroke="#fff" stroke-width="1.2"/><rect x="0.5" y="0.5" width="5" height="4" fill="#1c2845" stroke="#fff"/></svg>
<svg style="left:1744px;top:1053px" width="16" height="14" viewBox="0 0 16 14"><path d="M1 5H4L8 1V13L4 9H1Z" fill="none" stroke="#fff" stroke-width="1.2"/><path d="M11 5L15 9M15 5L11 9" stroke="#fff" stroke-width="1.2"/></svg>
<div class="t" style="left:1769px;top:1048px;font-size:20px;line-height:24px;color:#fff">A</div>
<div class="t" style="left:1792px;top:1043px;font-size:12px;line-height:16px;color:#fff;width:70px;text-align:center"><svg class="h h12" viewBox="0 -85 100 100"><path d="M92-12l2 1 0 4-2 1-85 0-1-1 0-4 1-1 39 0 0-21-10-2-7-3-6-4-4-6-1-4 0-6 3-8 3-3 7-5 5-2 9-1 7 0 9 1 8 2 4 3 6 5 2 5 1 6-1 5-3 6-6 5-9 4-10 2 0 21zM50-71l-8 1-6 1-5 3-4 5-2 4 1 6 2 4 4 4 4 1 6 2 8 1 5-1 10-2 5-4 3-3 1-4 0-4-1-4-3-3-3-3-5-2z"/></svg><svg class="h h12" viewBox="0 -85 100 100"><path d="M55-68l-4 9-6 9 9 8 11 8 0 1-3 4-2 0-7-5-13-12-6 6-10 8-6 4-5 2-3-4 1-2 11-7 10-8 9-9 7-12-1-1-2-1-29 0-1-1 0-4 37 0 3 1 0 1zM77-56l0-26 0-1 5 0 1 1 1 1 0 64-1 1-1 1-5 0 0-1 0-34-19 0-2-1 0-4 1-1zM87 7l-2 1-51 0-5-1-1-2-1-3 0-21 1-1 5 0 1 1 0 19 1 2 50 0 2 1z"/></svg> 1:25</div>
<div class="t" style="left:1787px;top:1061px;font-size:12px;line-height:16px;color:#fff;width:80px;text-align:center">2020-07-27</div>
<svg style="left:1879px;top:1051px" width="18" height="17" viewBox="0 0 18 17"><path d="M0.75 0.75H17.25V12.25H9L5 16V12.25H0.75Z" fill="none" stroke="#fff" stroke-width="1.4"/></svg>
<div style="position:absolute;left:1915px;top:1040px;width:1px;height:40px;background:#3a4a60"></div>
</body></html>
